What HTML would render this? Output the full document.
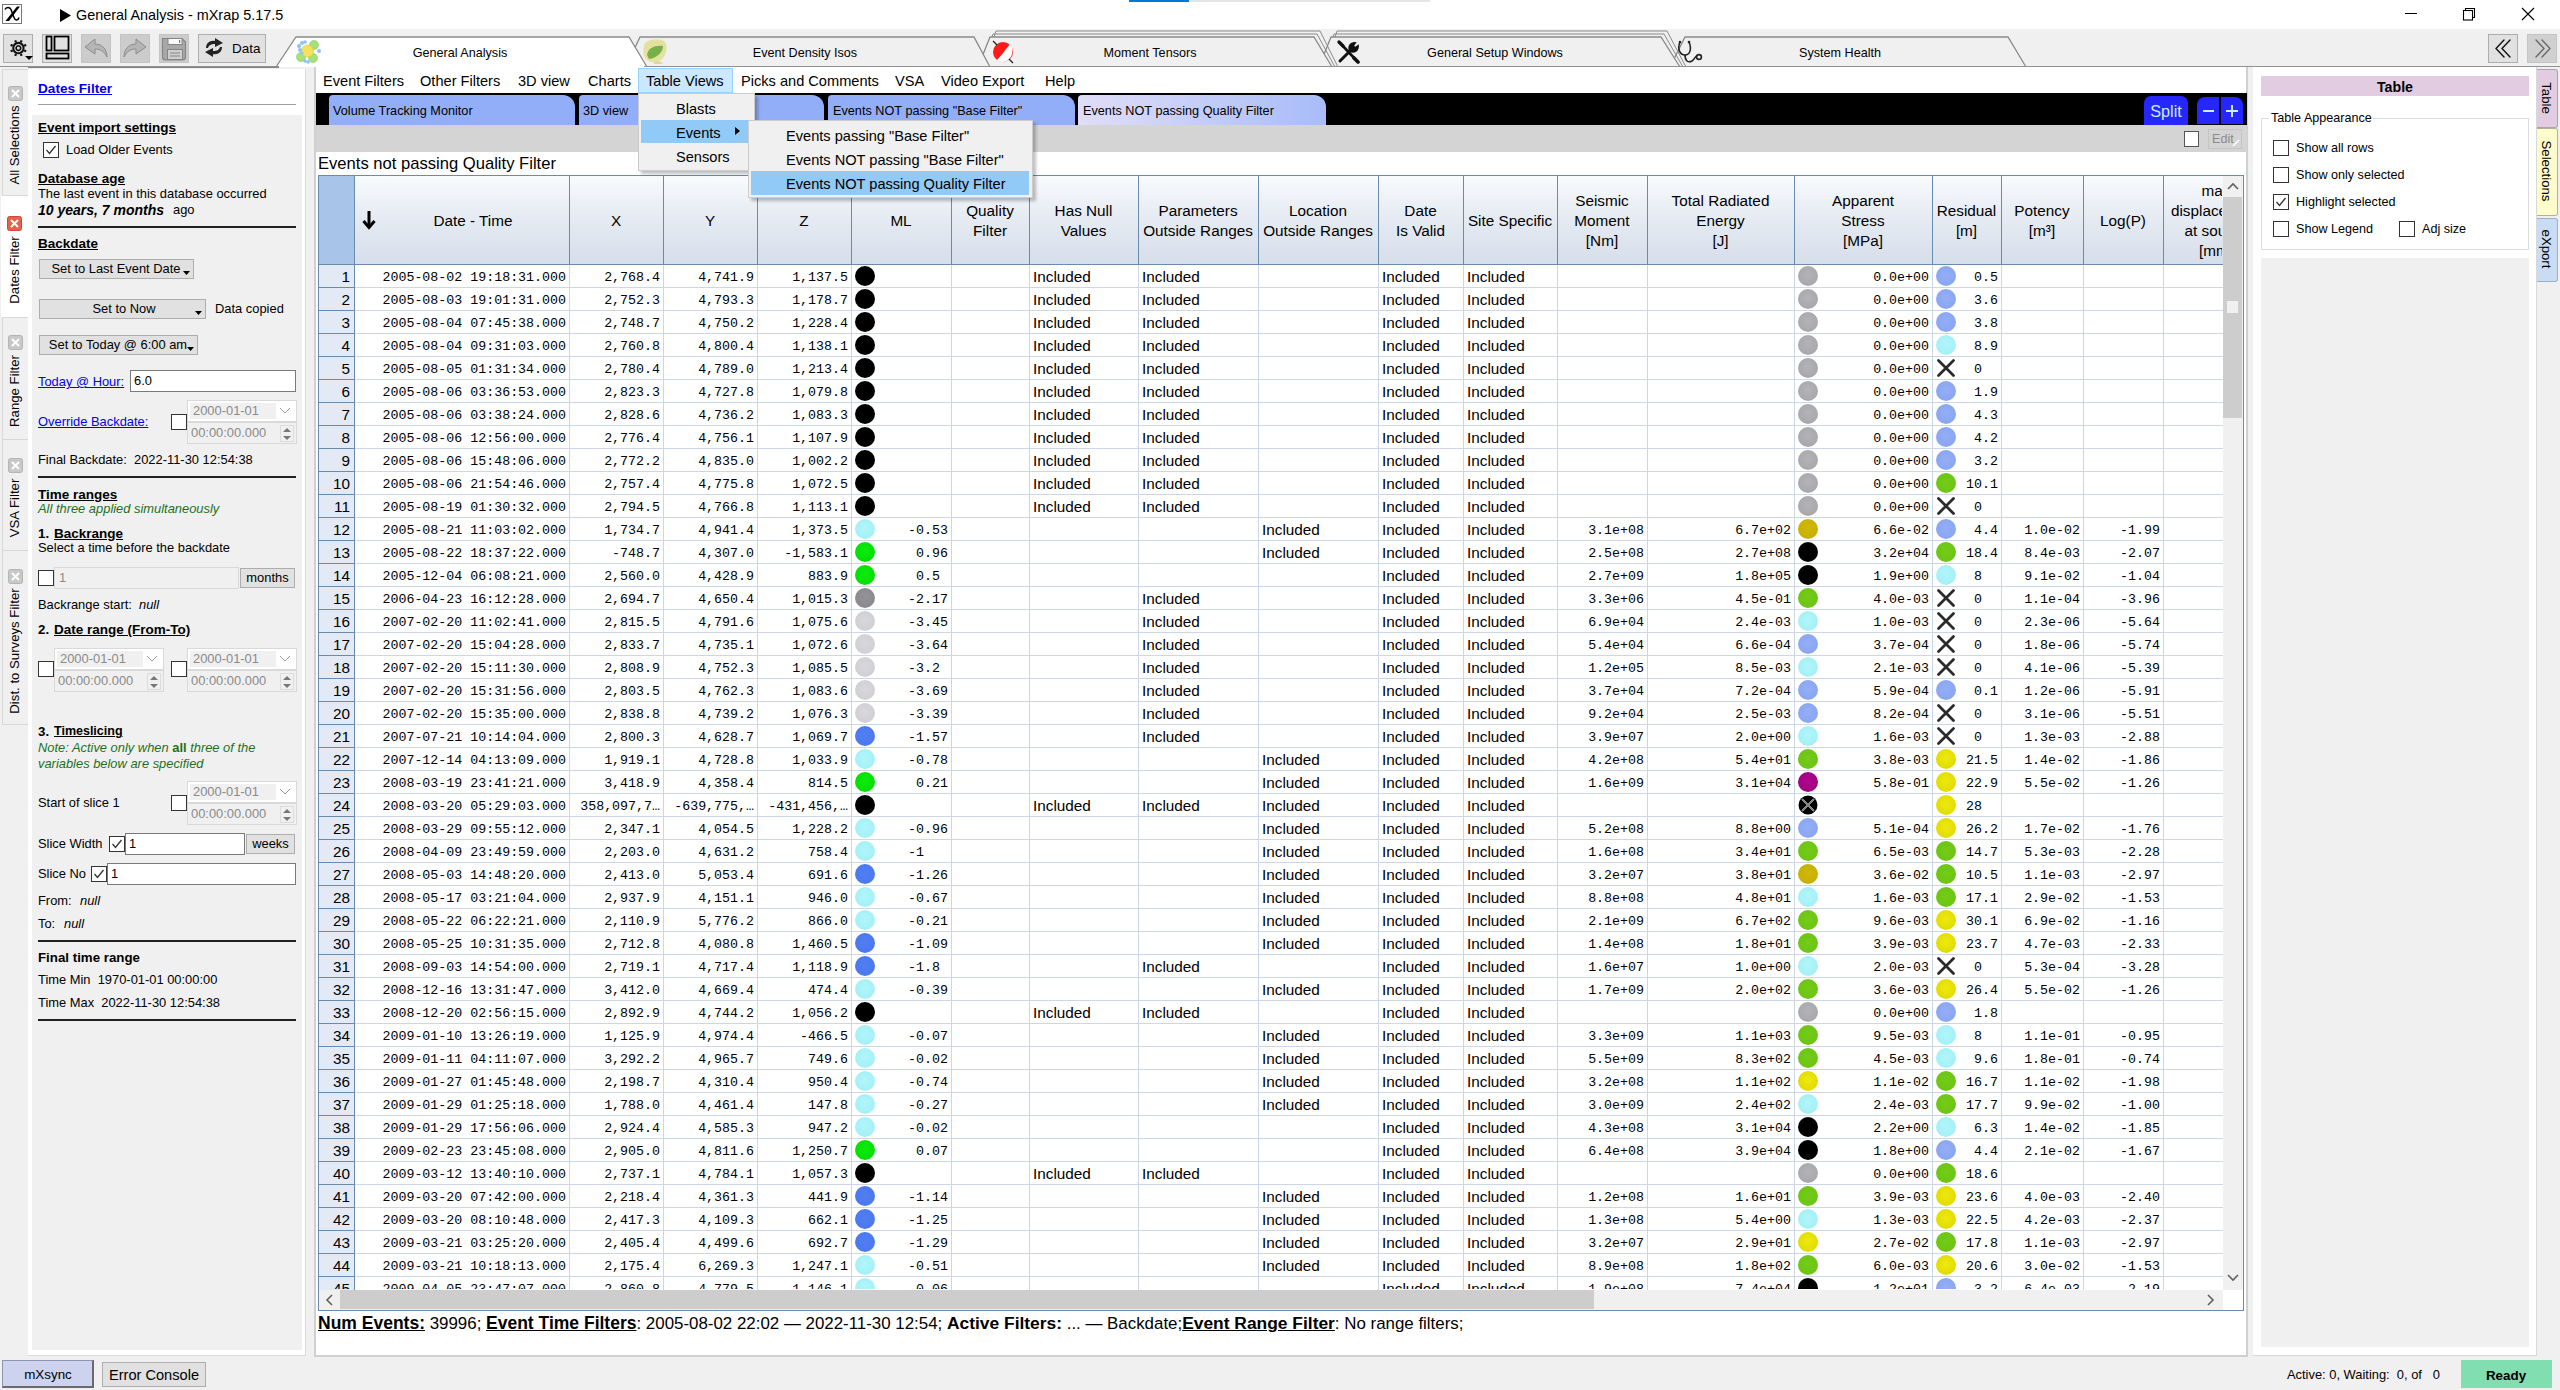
<!DOCTYPE html><html><head><meta charset="utf-8"><style>html,body{margin:0;padding:0}body{width:2560px;height:1390px;overflow:hidden;position:relative;background:#f0f0f0;font-family:"Liberation Sans",sans-serif;color:#000}body div,body svg{position:absolute}</style></head><body>
<div style="left:0px;top:0px;width:2560px;height:29px;background:#fff"></div>
<div style="left:1129px;top:0px;width:60px;height:2px;background:#0078d7"></div>
<div style="left:1189px;top:0px;width:241px;height:2px;background:#e6e6e6"></div>
<svg style="left:2px;top:4px" width="21" height="20"><rect x="0.5" y="0.5" width="19" height="19" fill="#fff" stroke="#777"/>
<path d="M15 2.5 L18 2.5 L7 17 L3.5 17Z" fill="#000"/><path d="M3 5.5 C4 3 7.5 2.5 9 5.5 L12 13.5 C13 16.5 16 17 17 13.5" stroke="#000" stroke-width="1.5" fill="none"/></svg>
<svg style="left:60px;top:9px" width="12" height="13"><path d="M0 0 L11 6.5 L0 13Z" fill="#000"/></svg>
<div style="left:76px;top:7.81px;font-size:14.4px;line-height:14.4px;font-family:'Liberation Sans', sans-serif;white-space:pre;color:#000">General Analysis - mXrap 5.17.5</div>
<div style="left:2405px;top:13px;width:12px;height:1px;background:#000"></div>
<svg style="left:2460px;top:6px" width="18" height="16"><rect x="3.5" y="4.5" width="9" height="9.5" fill="none" stroke="#000" stroke-width="1.1"/><path d="M5.5 4.5 V2.5 H14.5 V11.5 H12.5" fill="none" stroke="#000" stroke-width="1.1"/></svg>
<svg style="left:2520px;top:7px" width="16" height="16"><path d="M2 1 L14 13 M14 1 L2 13" stroke="#000" stroke-width="1.1"/></svg>
<div style="left:0px;top:29px;width:2560px;height:38px;background:#f0f0f0"></div>
<div style="left:3px;top:34px;width:30px;height:29px;background:#e1e1e1;border:1px solid #adadad;box-sizing:border-box"></div>
<div style="left:42px;top:34px;width:30px;height:29px;background:#e1e1e1;border:1px solid #adadad;box-sizing:border-box"></div>
<div style="left:81px;top:34px;width:30px;height:29px;background:#cccccc;border:1px solid #c4c4c4;box-sizing:border-box"></div>
<div style="left:120px;top:34px;width:30px;height:29px;background:#cccccc;border:1px solid #c4c4c4;box-sizing:border-box"></div>
<div style="left:159px;top:34px;width:30px;height:29px;background:#cccccc;border:1px solid #c4c4c4;box-sizing:border-box"></div>
<div style="left:198px;top:34px;width:68px;height:29px;background:#e1e1e1;border:1px solid #adadad;box-sizing:border-box"></div>
<svg style="left:3px;top:34px" width="30" height="28">
<g transform="translate(15.4,14.1) rotate(22.5)" stroke="#111" fill="none">
<circle r="5.2" stroke-width="2.1"/><circle r="2.3" stroke-width="1.7"/>
<path d="M6.20 0.00 L8.40 0.00 M4.38 4.38 L5.94 5.94 M0.00 6.20 L0.00 8.40 M-4.38 4.38 L-5.94 5.94 M-6.20 0.00 L-8.40 0.00 M-4.38 -4.38 L-5.94 -5.94 M-0.00 -6.20 L-0.00 -8.40 M4.38 -4.38 L5.94 -5.94" stroke-width="2.2"/>
</g><path d="M22 22 L30 22 L26 26Z" fill="#000"/></svg>
<svg style="left:42px;top:34px" width="30" height="28"><g fill="#e0e0e0" stroke="#000" stroke-width="1.8">
<rect x="4.5" y="2.5" width="5" height="14"/><rect x="12.5" y="2.5" width="14" height="14"/><rect x="4.5" y="19.5" width="22" height="5"/></g></svg>
<svg style="left:81px;top:34px" width="30" height="28"><path d="M4 13 L14 5 L14 10 C22 10 26 16 26 23 C23 17 19 15 14 15 L14 20 Z" fill="#b5b5b5" stroke="#8c8c8c" stroke-width="1"/></svg>
<svg style="left:120px;top:34px" width="30" height="28"><path d="M26 13 L16 5 L16 10 C8 10 4 16 4 23 C7 17 11 15 16 15 L16 20 Z" fill="#b5b5b5" stroke="#8c8c8c" stroke-width="1"/></svg>
<svg style="left:159px;top:34px" width="30" height="28"><path d="M3.5 4.5 H23 L26.5 8 V23 Q26.5 26 23.5 26 H6.5 Q3.5 26 3.5 23Z" fill="#a8a8a8" stroke="#858585" stroke-width="1.2"/>
<rect x="9" y="4.5" width="14" height="6" fill="#f8f8f8" stroke="#858585"/><rect x="20" y="6" width="1.2" height="3" fill="#777"/><rect x="8.5" y="15.5" width="15" height="10" fill="#cfcfcf" stroke="#858585"/><path d="M11 19 H21 M11 22 H21" stroke="#858585" stroke-width="1.2"/></svg>
<svg style="left:200px;top:35px" width="28" height="26"><g fill="#222">
<path d="M6 13 C6 8 10 5 15 6 L15 3 L23 8 L15 12 L15 9 C11 9 9 10 8 13 Z"/>
<path d="M22 12 C22 17 18 20 13 19 L13 22 L5 17 L13 13 L13 16 C17 16 19 15 20 12 Z"/></g></svg>
<div style="left:232px;top:41.57px;font-size:13.5px;line-height:13.5px;font-family:'Liberation Sans', sans-serif;white-space:pre;color:#000">Data</div>
<div style="left:2488px;top:34px;width:30px;height:29px;background:#e1e1e1;border:1px solid #adadad;box-sizing:border-box"></div>
<div style="left:2527px;top:34px;width:30px;height:29px;background:#d0d0d0;border:1px solid #c4c4c4;box-sizing:border-box"></div>
<svg style="left:2488px;top:34px" width="30" height="29"><path d="M16 6 L8 14.5 L16 23 M22 6 L14 14.5 L22 23" stroke="#111" stroke-width="1.4" fill="none" stroke-linecap="round"/></svg>
<svg style="left:2527px;top:34px" width="30" height="29"><path d="M9 6 L17 14.5 L9 23 M15 6 L23 14.5 L15 23" stroke="#6a6a6a" stroke-width="1.4" fill="none" stroke-linecap="round"/></svg>
<svg style="left:0px;top:29px" width="2560" height="40"><path d="M1670 38 L1685 8 L2008 8 L2026 38" fill="#f0f0f0" stroke="#8a8a8a" stroke-width="1.3"/><path d="M1325 38 L1337 2 L1667 2 L1686 38" fill="none" stroke="#8a8a8a" stroke-width="1"/><path d="M1322 38 L1334 5 L1664 5 L1683 38" fill="none" stroke="#8a8a8a" stroke-width="1"/><path d="M1319 38 L1331 8 L1661 8 L1680 38" fill="#f0f0f0" stroke="#8a8a8a" stroke-width="1.3"/><path d="M984 38 L996 2 L1320 2 L1338 38" fill="none" stroke="#8a8a8a" stroke-width="1"/><path d="M981 38 L993 5 L1317 5 L1335 38" fill="none" stroke="#8a8a8a" stroke-width="1"/><path d="M978 38 L990 8 L1314 8 L1332 38" fill="#f0f0f0" stroke="#8a8a8a" stroke-width="1.3"/><path d="M626 38 L640 8 L974 8 L990 38" fill="#f0f0f0" stroke="#8a8a8a" stroke-width="1.3"/><path d="M276 38 L296 8 L629 8 L647 38" fill="#ffffff" stroke="#8a8a8a" stroke-width="1.3"/></svg>
<div style="left:0px;top:66px;width:279px;height:2px;background:linear-gradient(#9a9a9a,#7a7a7a)"></div>
<div style="left:644px;top:66px;width:1916px;height:2px;background:linear-gradient(#9a9a9a,#7a7a7a)"></div>
<div style="left:60px;width:800px;text-align:center;top:47.33px;font-size:12.6px;line-height:12.6px;font-family:'Liberation Sans', sans-serif;white-space:pre;color:#000">General Analysis</div>
<div style="left:405px;width:800px;text-align:center;top:47.33px;font-size:12.6px;line-height:12.6px;font-family:'Liberation Sans', sans-serif;white-space:pre;color:#000">Event Density Isos</div>
<div style="left:750px;width:800px;text-align:center;top:47.33px;font-size:12.6px;line-height:12.6px;font-family:'Liberation Sans', sans-serif;white-space:pre;color:#000">Moment Tensors</div>
<div style="left:1095px;width:800px;text-align:center;top:47.33px;font-size:12.6px;line-height:12.6px;font-family:'Liberation Sans', sans-serif;white-space:pre;color:#000">General Setup Windows</div>
<div style="left:1440px;width:800px;text-align:center;top:47.33px;font-size:12.6px;line-height:12.6px;font-family:'Liberation Sans', sans-serif;white-space:pre;color:#000">System Health</div>
<svg style="left:296px;top:39px" width="26" height="26">
<circle cx="18" cy="6" r="4.5" fill="#a6e07a" stroke="#8cc860" stroke-width="0.6"/><circle cx="5" cy="18" r="4.5" fill="#a6e07a" stroke="#8cc860" stroke-width="0.6"/><circle cx="17" cy="19" r="4.5" fill="#a6e07a" stroke="#8cc860" stroke-width="0.6"/>
<circle cx="11.5" cy="12" r="6" fill="#f3e35a" stroke="#d8c840" stroke-width="0.6"/>
<g fill="#88c4f4"><circle cx="3" cy="7" r="2"/><circle cx="6" cy="4" r="2"/><circle cx="9" cy="3" r="1.8"/><circle cx="4" cy="11" r="2"/><circle cx="23" cy="12" r="2"/><circle cx="9" cy="22" r="1.8"/><circle cx="12" cy="23" r="1.8"/><circle cx="6" cy="14" r="1.5"/></g></svg>
<svg style="left:642px;top:38px" width="26" height="28"><path d="M2 8 C2 2 14 0 22 3 C26 6 25 14 22 19 C18 24 10 26 5 22 C1 19 1 13 2 8Z" fill="#e4e0a0"/>
<path d="M5 17 C6 10 13 7 21 8 C21 14 15 20 7 21Z" fill="#78b048"/><path d="M12 24 C15 22 19 23 21 26 L12 26Z" fill="#dcd8a0"/></svg>
<svg style="left:990px;top:39px" width="26" height="26"><circle cx="13" cy="13" r="10" fill="#ff1a1a"/><path d="M7 21 C13 15 15 11 20 5 C24 10 23 18 17 22 C13 24 10 23 7 21Z" fill="#fff"/>
<path d="M3 2 L7 6 M19 20 L23 24" stroke="#222" stroke-width="1.3"/></svg>
<svg style="left:1336px;top:40px" width="26" height="24"><g stroke="#111" fill="none" stroke-linecap="round">
<path d="M4 21 L15 10" stroke-width="3"/><path d="M14 11 C12 7 14 3 19 3 L17 6 L19 8 L22 6 C22 11 18 13 14 11" stroke-width="1.8" fill="#111"/>
<path d="M5 4 L20 20" stroke-width="2.6"/><path d="M3 2 L7 6" stroke-width="3.2"/><path d="M18 18 L22 22" stroke-width="3.6"/></g></svg>
<svg style="left:1676px;top:39px" width="28" height="26"><g stroke="#222" stroke-width="1.6" fill="none">
<path d="M4 3 C1 10 4 16 9 16 C14 16 16 10 13 3"/><path d="M9 16 C9 22 12 24 16 22 C19 20 19 17 21 17"/><circle cx="23" cy="18" r="2.4"/></g>
<circle cx="4" cy="3" r="1.3" fill="#222"/><circle cx="13" cy="3" r="1.3" fill="#222"/></svg>
<div style="left:0px;top:67px;width:28px;height:1300px;background:#f0f0f0"></div>
<div style="left:2px;top:69px;width:26px;height:127px;background:#f0f0f0;border:1px solid #d8d8d8;border-right:none;box-sizing:border-box"></div>
<div style="left:1px;top:196px;width:28px;height:121px;background:#fff"></div>
<div style="left:2px;top:317px;width:26px;height:408px;background:#f0f0f0;border:1px solid #d8d8d8;border-right:none;box-sizing:border-box"></div>
<div style="left:2px;top:439px;width:26px;height:1px;background:#d8d8d8"></div>
<div style="left:2px;top:550px;width:26px;height:1px;background:#d8d8d8"></div>
<svg style="left:8px;top:86px" width="15" height="15"><rect x="0.5" y="0.5" width="14" height="14" rx="2" fill="#c8c8c8" stroke="#b4b4b4"/><path d="M4 4 L11 11 M11 4 L4 11" stroke="#fff" stroke-width="2"/></svg>
<div style="left:-135px;top:135px;width:300px;height:20px;line-height:20px;text-align:center;font-family:'Liberation Sans', sans-serif;font-size:13.2px;color:#000;white-space:pre;transform:rotate(-90deg)">All Selections</div>
<svg style="left:7px;top:216px" width="15" height="15"><rect x="0.5" y="0.5" width="14" height="14" rx="2" fill="#e8604a" stroke="#c84a3a"/><path d="M4 4 L11 11 M11 4 L4 11" stroke="#fff" stroke-width="2"/></svg>
<div style="left:-135px;top:260px;width:300px;height:20px;line-height:20px;text-align:center;font-family:'Liberation Sans', sans-serif;font-size:13.2px;color:#000;white-space:pre;transform:rotate(-90deg)">Dates Filter</div>
<svg style="left:8px;top:335px" width="15" height="15"><rect x="0.5" y="0.5" width="14" height="14" rx="2" fill="#c8c8c8" stroke="#b4b4b4"/><path d="M4 4 L11 11 M11 4 L4 11" stroke="#fff" stroke-width="2"/></svg>
<div style="left:-135px;top:381px;width:300px;height:20px;line-height:20px;text-align:center;font-family:'Liberation Sans', sans-serif;font-size:13.2px;color:#000;white-space:pre;transform:rotate(-90deg)">Range Filter</div>
<svg style="left:8px;top:458px" width="15" height="15"><rect x="0.5" y="0.5" width="14" height="14" rx="2" fill="#c8c8c8" stroke="#b4b4b4"/><path d="M4 4 L11 11 M11 4 L4 11" stroke="#fff" stroke-width="2"/></svg>
<div style="left:-135px;top:498px;width:300px;height:20px;line-height:20px;text-align:center;font-family:'Liberation Sans', sans-serif;font-size:13.2px;color:#000;white-space:pre;transform:rotate(-90deg)">VSA Filter</div>
<svg style="left:8px;top:569px" width="15" height="15"><rect x="0.5" y="0.5" width="14" height="14" rx="2" fill="#c8c8c8" stroke="#b4b4b4"/><path d="M4 4 L11 11 M11 4 L4 11" stroke="#fff" stroke-width="2"/></svg>
<div style="left:-135px;top:641px;width:300px;height:20px;line-height:20px;text-align:center;font-family:'Liberation Sans', sans-serif;font-size:13.2px;color:#000;white-space:pre;transform:rotate(-90deg)">Dist. to Surveys Filter</div>
<div style="left:28px;top:69px;width:278px;height:1287px;background:#fff;border-right:1px solid #dadada;border-bottom:1px solid #dadada;box-sizing:border-box"></div>
<div style="left:32px;top:115px;width:270px;height:1235px;background:#f0f0f0"></div>
<div style="left:38px;top:82.49px;font-size:13.6px;line-height:13.6px;font-family:'Liberation Sans', sans-serif;white-space:pre;color:#0000ee;text-decoration:underline;font-weight:bold;">Dates Filter</div>
<div style="left:38px;top:104px;width:258px;height:1px;background:#a0a0a0"></div>
<div style="left:38px;top:120.57px;font-size:13.5px;line-height:13.5px;font-family:'Liberation Sans', sans-serif;white-space:pre;color:#000;font-weight:bold;text-decoration:underline">Event import settings</div>
<svg style="left:43px;top:142px" width="16" height="16"><rect x="0.5" y="0.5" width="15" height="15" fill="#fff" stroke="#333"/><path d="M3.5 8 L6.5 11.5 L12.5 4" stroke="#333" stroke-width="1.3" fill="none"/></svg>
<div style="left:66px;top:144.08px;font-size:12.9px;line-height:12.9px;font-family:'Liberation Sans', sans-serif;white-space:pre;">Load Older Events</div>
<div style="left:38px;top:171.57px;font-size:13.5px;line-height:13.5px;font-family:'Liberation Sans', sans-serif;white-space:pre;color:#000;font-weight:bold;text-decoration:underline">Database age</div>
<div style="left:38px;top:188.08px;font-size:12.9px;line-height:12.9px;font-family:'Liberation Sans', sans-serif;white-space:pre;">The last event in this database occurred</div>
<div style="left:38px;top:203.15px;font-size:14px;line-height:14px;font-family:'Liberation Sans', sans-serif;white-space:pre;font-weight:bold;font-style:italic">10 years, 7 months</div>
<div style="left:173px;top:204.08px;font-size:12.9px;line-height:12.9px;font-family:'Liberation Sans', sans-serif;white-space:pre;">ago</div>
<div style="left:38px;top:226px;width:258px;height:2px;background:#202020"></div>
<div style="left:38px;top:236.57px;font-size:13.5px;line-height:13.5px;font-family:'Liberation Sans', sans-serif;white-space:pre;color:#000;font-weight:bold;text-decoration:underline">Backdate</div>
<div style="left:39px;top:259px;width:155px;height:20px;background:#e1e1e1;border:1px solid #adadad;box-sizing:border-box"></div>
<div style="left:-284px;width:800px;text-align:center;top:262.72px;font-size:12.9px;line-height:12.9px;font-family:'Liberation Sans', sans-serif;white-space:pre;color:#000">Set to Last Event Date</div>
<svg style="left:182px;top:270px" width="9" height="6"><path d="M1 1 L8 1 L4.5 5Z" fill="#000"/></svg>
<div style="left:39px;top:299px;width:167px;height:20px;background:#e1e1e1;border:1px solid #adadad;box-sizing:border-box"></div>
<div style="left:-276px;width:800px;text-align:center;top:302.72px;font-size:12.9px;line-height:12.9px;font-family:'Liberation Sans', sans-serif;white-space:pre;color:#000">Set to Now</div>
<svg style="left:194px;top:310px" width="9" height="6"><path d="M1 1 L8 1 L4.5 5Z" fill="#000"/></svg>
<div style="left:215px;top:303.08px;font-size:12.9px;line-height:12.9px;font-family:'Liberation Sans', sans-serif;white-space:pre;">Data copied</div>
<div style="left:39px;top:335px;width:159px;height:20px;background:#e1e1e1;border:1px solid #adadad;box-sizing:border-box"></div>
<div style="left:-282px;width:800px;text-align:center;top:338.72px;font-size:12.9px;line-height:12.9px;font-family:'Liberation Sans', sans-serif;white-space:pre;color:#000">Set to Today @ 6:00 am</div>
<svg style="left:186px;top:346px" width="9" height="6"><path d="M1 1 L8 1 L4.5 5Z" fill="#000"/></svg>
<div style="left:38px;top:376.08px;font-size:12.9px;line-height:12.9px;font-family:'Liberation Sans', sans-serif;white-space:pre;color:#0000ee;text-decoration:underline;">Today @ Hour:</div>
<div style="left:130px;top:370px;width:166px;height:22px;background:#fff;border:1px solid #7a7a7a;box-sizing:border-box"></div>
<div style="left:134px;top:375.08px;font-size:12.9px;line-height:12.9px;font-family:'Liberation Sans', sans-serif;white-space:pre;">6.0</div>
<div style="left:38px;top:416.08px;font-size:12.9px;line-height:12.9px;font-family:'Liberation Sans', sans-serif;white-space:pre;color:#0000ee;text-decoration:underline;">Override Backdate:</div>
<svg style="left:171px;top:414px" width="16" height="16"><rect x="0.5" y="0.5" width="15" height="15" fill="#fff" stroke="#333"/></svg>
<div style="left:187px;top:400px;width:110px;height:22px;background:#fff;border:1px solid #d9d9d9;box-sizing:border-box"></div>
<div style="left:190px;top:403px;width:86px;height:16px;background:#f0f0f0"></div>
<div style="left:193px;top:405.08px;font-size:12.9px;line-height:12.9px;font-family:'Liberation Sans', sans-serif;white-space:pre;color:#8a8a8a">2000-01-01</div>
<svg style="left:279px;top:407px" width="12" height="8"><path d="M1 1 L6 6 L11 1" stroke="#9a9a9a" fill="none"/></svg>
<div style="left:187px;top:422px;width:110px;height:22px;background:#f0f0f0;border:1px solid #d9d9d9;box-sizing:border-box"></div>
<div style="left:191px;top:427.08px;font-size:12.9px;line-height:12.9px;font-family:'Liberation Sans', sans-serif;white-space:pre;color:#8a8a8a">00:00:00.000</div>
<div style="left:280px;top:425px;width:14px;height:17px;background:#f0f0f0;border:1px solid #dcdcdc;box-sizing:border-box"></div>
<svg style="left:281px;top:426px" width="12" height="16"><path d="M2 6 L6 2 L10 6Z M2 10 L6 14 L10 10Z" fill="#777"/></svg>
<div style="left:38px;top:454.08px;font-size:12.9px;line-height:12.9px;font-family:'Liberation Sans', sans-serif;white-space:pre;">Final Backdate:  2022-11-30 12:54:38</div>
<div style="left:38px;top:476px;width:258px;height:2px;background:#202020"></div>
<div style="left:38px;top:487.57px;font-size:13.5px;line-height:13.5px;font-family:'Liberation Sans', sans-serif;white-space:pre;color:#000;font-weight:bold;text-decoration:underline">Time ranges</div>
<div style="left:38px;top:503.08px;font-size:12.9px;line-height:12.9px;font-family:'Liberation Sans', sans-serif;white-space:pre;font-style:italic;color:#1c701c">All three applied simultaneously</div>
<div style="left:38px;top:526.74px;font-size:13.3px;line-height:13.3px;font-family:'Liberation Sans', sans-serif;white-space:pre;font-weight:bold">1. </div>
<div style="left:54px;top:526.57px;font-size:13.5px;line-height:13.5px;font-family:'Liberation Sans', sans-serif;white-space:pre;color:#000;font-weight:bold;text-decoration:underline">Backrange</div>
<div style="left:38px;top:542.08px;font-size:12.9px;line-height:12.9px;font-family:'Liberation Sans', sans-serif;white-space:pre;">Select a time before the backdate</div>
<svg style="left:38px;top:570px" width="16" height="16"><rect x="0.5" y="0.5" width="15" height="15" fill="#fff" stroke="#333"/></svg>
<div style="left:54px;top:567px;width:185px;height:22px;background:#f0f0f0;border:1px solid #d9d9d9;box-sizing:border-box"></div>
<div style="left:59px;top:572.08px;font-size:12.9px;line-height:12.9px;font-family:'Liberation Sans', sans-serif;white-space:pre;color:#8a8a8a">1</div>
<div style="left:240px;top:568px;width:55px;height:20px;background:#e1e1e1;border:1px solid #adadad;box-sizing:border-box"></div>
<div style="left:-132.5px;width:800px;text-align:center;top:571.72px;font-size:12.9px;line-height:12.9px;font-family:'Liberation Sans', sans-serif;white-space:pre;color:#000">months</div>
<div style="left:38px;top:599.08px;font-size:12.9px;line-height:12.9px;font-family:'Liberation Sans', sans-serif;white-space:pre;">Backrange start:  </div>
<div style="left:139px;top:599.08px;font-size:12.9px;line-height:12.9px;font-family:'Liberation Sans', sans-serif;white-space:pre;font-style:italic">null</div>
<div style="left:38px;top:622.74px;font-size:13.3px;line-height:13.3px;font-family:'Liberation Sans', sans-serif;white-space:pre;font-weight:bold">2. </div>
<div style="left:54px;top:622.57px;font-size:13.5px;line-height:13.5px;font-family:'Liberation Sans', sans-serif;white-space:pre;color:#000;font-weight:bold;text-decoration:underline">Date range (From-To)</div>
<svg style="left:38px;top:661px" width="16" height="16"><rect x="0.5" y="0.5" width="15" height="15" fill="#fff" stroke="#333"/></svg>
<div style="left:54px;top:648px;width:110px;height:22px;background:#fff;border:1px solid #d9d9d9;box-sizing:border-box"></div>
<div style="left:57px;top:651px;width:86px;height:16px;background:#f0f0f0"></div>
<div style="left:60px;top:653.08px;font-size:12.9px;line-height:12.9px;font-family:'Liberation Sans', sans-serif;white-space:pre;color:#8a8a8a">2000-01-01</div>
<svg style="left:146px;top:655px" width="12" height="8"><path d="M1 1 L6 6 L11 1" stroke="#9a9a9a" fill="none"/></svg>
<div style="left:54px;top:670px;width:110px;height:22px;background:#f0f0f0;border:1px solid #d9d9d9;box-sizing:border-box"></div>
<div style="left:58px;top:675.08px;font-size:12.9px;line-height:12.9px;font-family:'Liberation Sans', sans-serif;white-space:pre;color:#8a8a8a">00:00:00.000</div>
<div style="left:147px;top:673px;width:14px;height:17px;background:#f0f0f0;border:1px solid #dcdcdc;box-sizing:border-box"></div>
<svg style="left:148px;top:674px" width="12" height="16"><path d="M2 6 L6 2 L10 6Z M2 10 L6 14 L10 10Z" fill="#777"/></svg>
<svg style="left:171px;top:661px" width="16" height="16"><rect x="0.5" y="0.5" width="15" height="15" fill="#fff" stroke="#333"/></svg>
<div style="left:187px;top:648px;width:110px;height:22px;background:#fff;border:1px solid #d9d9d9;box-sizing:border-box"></div>
<div style="left:190px;top:651px;width:86px;height:16px;background:#f0f0f0"></div>
<div style="left:193px;top:653.08px;font-size:12.9px;line-height:12.9px;font-family:'Liberation Sans', sans-serif;white-space:pre;color:#8a8a8a">2000-01-01</div>
<svg style="left:279px;top:655px" width="12" height="8"><path d="M1 1 L6 6 L11 1" stroke="#9a9a9a" fill="none"/></svg>
<div style="left:187px;top:670px;width:110px;height:22px;background:#f0f0f0;border:1px solid #d9d9d9;box-sizing:border-box"></div>
<div style="left:191px;top:675.08px;font-size:12.9px;line-height:12.9px;font-family:'Liberation Sans', sans-serif;white-space:pre;color:#8a8a8a">00:00:00.000</div>
<div style="left:280px;top:673px;width:14px;height:17px;background:#f0f0f0;border:1px solid #dcdcdc;box-sizing:border-box"></div>
<svg style="left:281px;top:674px" width="12" height="16"><path d="M2 6 L6 2 L10 6Z M2 10 L6 14 L10 10Z" fill="#777"/></svg>
<div style="left:38px;top:724.74px;font-size:13.3px;line-height:13.3px;font-family:'Liberation Sans', sans-serif;white-space:pre;font-weight:bold">3. </div>
<div style="left:54px;top:725.42px;font-size:12.5px;line-height:12.5px;font-family:'Liberation Sans', sans-serif;white-space:pre;color:#000;font-weight:bold;text-decoration:underline">Timeslicing</div>
<div style="left:38px;top:740px;width:260px;font-family:'Liberation Sans', sans-serif;font-size:12.9px;line-height:16px;color:#1c701c;font-style:italic">Note: Active only when <b style="font-style:normal">all</b> three of the<br>variables below are specified</div>
<div style="left:38px;top:797.08px;font-size:12.9px;line-height:12.9px;font-family:'Liberation Sans', sans-serif;white-space:pre;">Start of slice 1</div>
<svg style="left:171px;top:795px" width="16" height="16"><rect x="0.5" y="0.5" width="15" height="15" fill="#fff" stroke="#333"/></svg>
<div style="left:187px;top:781px;width:110px;height:22px;background:#fff;border:1px solid #d9d9d9;box-sizing:border-box"></div>
<div style="left:190px;top:784px;width:86px;height:16px;background:#f0f0f0"></div>
<div style="left:193px;top:786.08px;font-size:12.9px;line-height:12.9px;font-family:'Liberation Sans', sans-serif;white-space:pre;color:#8a8a8a">2000-01-01</div>
<svg style="left:279px;top:788px" width="12" height="8"><path d="M1 1 L6 6 L11 1" stroke="#9a9a9a" fill="none"/></svg>
<div style="left:187px;top:803px;width:110px;height:22px;background:#f0f0f0;border:1px solid #d9d9d9;box-sizing:border-box"></div>
<div style="left:191px;top:808.08px;font-size:12.9px;line-height:12.9px;font-family:'Liberation Sans', sans-serif;white-space:pre;color:#8a8a8a">00:00:00.000</div>
<div style="left:280px;top:806px;width:14px;height:17px;background:#f0f0f0;border:1px solid #dcdcdc;box-sizing:border-box"></div>
<svg style="left:281px;top:807px" width="12" height="16"><path d="M2 6 L6 2 L10 6Z M2 10 L6 14 L10 10Z" fill="#777"/></svg>
<div style="left:38px;top:838.08px;font-size:12.9px;line-height:12.9px;font-family:'Liberation Sans', sans-serif;white-space:pre;">Slice Width</div>
<svg style="left:109px;top:836px" width="16" height="16"><rect x="0.5" y="0.5" width="15" height="15" fill="#fff" stroke="#333"/><path d="M3.5 8 L6.5 11.5 L12.5 4" stroke="#333" stroke-width="1.3" fill="none"/></svg>
<div style="left:125px;top:833px;width:120px;height:22px;background:#fff;border:1px solid #7a7a7a;box-sizing:border-box"></div>
<div style="left:129px;top:838.08px;font-size:12.9px;line-height:12.9px;font-family:'Liberation Sans', sans-serif;white-space:pre;">1</div>
<div style="left:246px;top:834px;width:49px;height:20px;background:#e1e1e1;border:1px solid #adadad;box-sizing:border-box"></div>
<div style="left:-129.5px;width:800px;text-align:center;top:837.72px;font-size:12.9px;line-height:12.9px;font-family:'Liberation Sans', sans-serif;white-space:pre;color:#000">weeks</div>
<div style="left:38px;top:868.08px;font-size:12.9px;line-height:12.9px;font-family:'Liberation Sans', sans-serif;white-space:pre;">Slice No</div>
<svg style="left:91px;top:866px" width="16" height="16"><rect x="0.5" y="0.5" width="15" height="15" fill="#fff" stroke="#333"/><path d="M3.5 8 L6.5 11.5 L12.5 4" stroke="#333" stroke-width="1.3" fill="none"/></svg>
<div style="left:107px;top:863px;width:189px;height:22px;background:#fff;border:1px solid #7a7a7a;box-sizing:border-box"></div>
<div style="left:111px;top:868.08px;font-size:12.9px;line-height:12.9px;font-family:'Liberation Sans', sans-serif;white-space:pre;">1</div>
<div style="left:38px;top:895.08px;font-size:12.9px;line-height:12.9px;font-family:'Liberation Sans', sans-serif;white-space:pre;">From:  </div>
<div style="left:80px;top:895.08px;font-size:12.9px;line-height:12.9px;font-family:'Liberation Sans', sans-serif;white-space:pre;font-style:italic">null</div>
<div style="left:38px;top:918.08px;font-size:12.9px;line-height:12.9px;font-family:'Liberation Sans', sans-serif;white-space:pre;">To:  </div>
<div style="left:64px;top:918.08px;font-size:12.9px;line-height:12.9px;font-family:'Liberation Sans', sans-serif;white-space:pre;font-style:italic">null</div>
<div style="left:38px;top:940px;width:258px;height:2px;background:#202020"></div>
<div style="left:38px;top:950.74px;font-size:13.3px;line-height:13.3px;font-family:'Liberation Sans', sans-serif;white-space:pre;font-weight:bold">Final time range</div>
<div style="left:38px;top:974.08px;font-size:12.9px;line-height:12.9px;font-family:'Liberation Sans', sans-serif;white-space:pre;">Time Min  1970-01-01 00:00:00</div>
<div style="left:38px;top:997.08px;font-size:12.9px;line-height:12.9px;font-family:'Liberation Sans', sans-serif;white-space:pre;">Time Max  2022-11-30 12:54:38</div>
<div style="left:38px;top:1019px;width:258px;height:2px;background:#202020"></div>
<div style="left:314px;top:67px;width:1934px;height:1290px;background:#fff;border-left:2px solid #d0d0d0;border-right:2px solid #d0d0d0;border-bottom:2px solid #d0d0d0;box-sizing:border-box"></div>
<div style="left:306px;top:67px;width:8px;height:1290px;background:#f0f0f0"></div>
<div style="left:638px;top:68px;width:95px;height:25px;background:#cce8ff;border:1px solid #99d1ff;box-sizing:border-box"></div>
<div style="left:323px;top:73.64px;font-size:14.6px;line-height:14.6px;font-family:'Liberation Sans', sans-serif;white-space:pre;">Event Filters</div>
<div style="left:420px;top:73.64px;font-size:14.6px;line-height:14.6px;font-family:'Liberation Sans', sans-serif;white-space:pre;">Other Filters</div>
<div style="left:518px;top:73.64px;font-size:14.6px;line-height:14.6px;font-family:'Liberation Sans', sans-serif;white-space:pre;">3D view</div>
<div style="left:588px;top:73.64px;font-size:14.6px;line-height:14.6px;font-family:'Liberation Sans', sans-serif;white-space:pre;">Charts</div>
<div style="left:646px;top:73.64px;font-size:14.6px;line-height:14.6px;font-family:'Liberation Sans', sans-serif;white-space:pre;">Table Views</div>
<div style="left:741px;top:73.64px;font-size:14.6px;line-height:14.6px;font-family:'Liberation Sans', sans-serif;white-space:pre;">Picks and Comments</div>
<div style="left:895px;top:73.64px;font-size:14.6px;line-height:14.6px;font-family:'Liberation Sans', sans-serif;white-space:pre;">VSA</div>
<div style="left:941px;top:73.64px;font-size:14.6px;line-height:14.6px;font-family:'Liberation Sans', sans-serif;white-space:pre;">Video Export</div>
<div style="left:1045px;top:73.64px;font-size:14.6px;line-height:14.6px;font-family:'Liberation Sans', sans-serif;white-space:pre;">Help</div>
<div style="left:316px;top:93px;width:1931px;height:32px;background:#000"></div>
<div style="left:329px;top:95px;width:246px;height:30px;background:#93aef8;border-radius:4px 12px 0 0"></div>
<div style="left:333px;top:104.75px;font-size:12.7px;line-height:12.7px;font-family:'Liberation Sans', sans-serif;white-space:pre;">Volume Tracking Monitor</div>
<div style="left:579px;top:95px;width:245px;height:30px;background:#93aef8;border-radius:4px 12px 0 0"></div>
<div style="left:583px;top:104.75px;font-size:12.7px;line-height:12.7px;font-family:'Liberation Sans', sans-serif;white-space:pre;">3D view</div>
<div style="left:828px;top:95px;width:247px;height:30px;background:#93aef8;border-radius:4px 12px 0 0"></div>
<div style="left:833px;top:104.75px;font-size:12.7px;line-height:12.7px;font-family:'Liberation Sans', sans-serif;white-space:pre;">Events NOT passing "Base Filter"</div>
<div style="left:1078px;top:95px;width:248px;height:30px;background:linear-gradient(90deg,#e0def8,#a8bcf8);border-radius:4px 12px 0 0"></div>
<div style="left:1083px;top:104.75px;font-size:12.7px;line-height:12.7px;font-family:'Liberation Sans', sans-serif;white-space:pre;">Events NOT passing Quality Filter</div>
<div style="left:2144px;top:96px;width:44px;height:29px;background:#2626ff;border-radius:7px 7px 0 0"></div>
<div style="left:1766px;width:800px;text-align:center;top:103.29px;font-size:16.2px;line-height:16.2px;font-family:'Liberation Sans', sans-serif;white-space:pre;color:#c8f0f0">Split</div>
<div style="left:2197px;top:97px;width:46px;height:27px;background:#2626ff;border-radius:8px 8px 0 0"></div>
<div style="left:2219px;top:97px;width:2px;height:28px;background:#000"></div>
<div style="left:2203px;top:110px;width:11px;height:2px;background:#c8f0f0"></div>
<div style="left:2226px;top:110px;width:12px;height:2px;background:#c8f0f0"></div>
<div style="left:2231px;top:105px;width:2px;height:12px;background:#c8f0f0"></div>
<div style="left:316px;top:125px;width:1931px;height:27px;background:#d4d4d4"></div>
<div style="left:2184px;top:131px;width:15px;height:16px;background:#fff;border:1px solid #555;box-sizing:border-box"></div>
<div style="left:2208px;top:129px;width:34px;height:20px;background:#d4d4d4;border:1px solid #c4c4c4;box-sizing:border-box"></div>
<div style="left:2212px;top:133.33px;font-size:12.6px;line-height:12.6px;font-family:'Liberation Sans', sans-serif;white-space:pre;color:#8a8a8a">Edit</div>
<svg style="left:2232px;top:139px" width="8" height="8"><path d="M1 7 L7 1" stroke="#fff" stroke-width="1.5"/></svg>
<div style="left:318px;top:155.95px;font-size:16.6px;line-height:16.6px;font-family:'Liberation Sans', sans-serif;white-space:pre;">Events not passing Quality Filter</div>
<div style="left:318px;top:175px;width:1926px;height:1136px;border:1px solid #6a8bb0;box-sizing:border-box;background:#fff"></div>
<div style="left:355px;top:176px;width:1868px;height:88px;background:linear-gradient(#f9fbfd,#e8edf4 40%,#d6deea)"></div>
<div style="left:319px;top:176px;width:35px;height:88px;background:#a8c4e8"></div>
<div style="left:319px;top:265px;width:35px;height:1025px;background:#e3eaf6"></div>
<div style="left:354px;top:176px;width:1px;height:88px;background:#6a8bb0"></div>
<div style="left:569px;top:176px;width:1px;height:88px;background:#6a8bb0"></div>
<div style="left:663px;top:176px;width:1px;height:88px;background:#6a8bb0"></div>
<div style="left:757px;top:176px;width:1px;height:88px;background:#6a8bb0"></div>
<div style="left:851px;top:176px;width:1px;height:88px;background:#6a8bb0"></div>
<div style="left:951px;top:176px;width:1px;height:88px;background:#6a8bb0"></div>
<div style="left:1029px;top:176px;width:1px;height:88px;background:#6a8bb0"></div>
<div style="left:1138px;top:176px;width:1px;height:88px;background:#6a8bb0"></div>
<div style="left:1258px;top:176px;width:1px;height:88px;background:#6a8bb0"></div>
<div style="left:1378px;top:176px;width:1px;height:88px;background:#6a8bb0"></div>
<div style="left:1463px;top:176px;width:1px;height:88px;background:#6a8bb0"></div>
<div style="left:1557px;top:176px;width:1px;height:88px;background:#6a8bb0"></div>
<div style="left:1647px;top:176px;width:1px;height:88px;background:#6a8bb0"></div>
<div style="left:1794px;top:176px;width:1px;height:88px;background:#6a8bb0"></div>
<div style="left:1932px;top:176px;width:1px;height:88px;background:#6a8bb0"></div>
<div style="left:2001px;top:176px;width:1px;height:88px;background:#6a8bb0"></div>
<div style="left:2083px;top:176px;width:1px;height:88px;background:#6a8bb0"></div>
<div style="left:2163px;top:176px;width:1px;height:88px;background:#6a8bb0"></div>
<div style="left:319px;top:264px;width:1904px;height:1px;background:#6a8bb0"></div>
<div style="left:319px;top:287px;width:35px;height:1px;background:#6a8bb0"></div>
<div style="left:355px;top:287px;width:1868px;height:1px;background:#ccd6e6"></div>
<div style="left:319px;top:310px;width:35px;height:1px;background:#6a8bb0"></div>
<div style="left:355px;top:310px;width:1868px;height:1px;background:#ccd6e6"></div>
<div style="left:319px;top:333px;width:35px;height:1px;background:#6a8bb0"></div>
<div style="left:355px;top:333px;width:1868px;height:1px;background:#ccd6e6"></div>
<div style="left:319px;top:356px;width:35px;height:1px;background:#6a8bb0"></div>
<div style="left:355px;top:356px;width:1868px;height:1px;background:#ccd6e6"></div>
<div style="left:319px;top:379px;width:35px;height:1px;background:#6a8bb0"></div>
<div style="left:355px;top:379px;width:1868px;height:1px;background:#ccd6e6"></div>
<div style="left:319px;top:402px;width:35px;height:1px;background:#6a8bb0"></div>
<div style="left:355px;top:402px;width:1868px;height:1px;background:#ccd6e6"></div>
<div style="left:319px;top:425px;width:35px;height:1px;background:#6a8bb0"></div>
<div style="left:355px;top:425px;width:1868px;height:1px;background:#ccd6e6"></div>
<div style="left:319px;top:448px;width:35px;height:1px;background:#6a8bb0"></div>
<div style="left:355px;top:448px;width:1868px;height:1px;background:#ccd6e6"></div>
<div style="left:319px;top:471px;width:35px;height:1px;background:#6a8bb0"></div>
<div style="left:355px;top:471px;width:1868px;height:1px;background:#ccd6e6"></div>
<div style="left:319px;top:494px;width:35px;height:1px;background:#6a8bb0"></div>
<div style="left:355px;top:494px;width:1868px;height:1px;background:#ccd6e6"></div>
<div style="left:319px;top:517px;width:35px;height:1px;background:#6a8bb0"></div>
<div style="left:355px;top:517px;width:1868px;height:1px;background:#ccd6e6"></div>
<div style="left:319px;top:540px;width:35px;height:1px;background:#6a8bb0"></div>
<div style="left:355px;top:540px;width:1868px;height:1px;background:#ccd6e6"></div>
<div style="left:319px;top:563px;width:35px;height:1px;background:#6a8bb0"></div>
<div style="left:355px;top:563px;width:1868px;height:1px;background:#ccd6e6"></div>
<div style="left:319px;top:586px;width:35px;height:1px;background:#6a8bb0"></div>
<div style="left:355px;top:586px;width:1868px;height:1px;background:#ccd6e6"></div>
<div style="left:319px;top:609px;width:35px;height:1px;background:#6a8bb0"></div>
<div style="left:355px;top:609px;width:1868px;height:1px;background:#ccd6e6"></div>
<div style="left:319px;top:632px;width:35px;height:1px;background:#6a8bb0"></div>
<div style="left:355px;top:632px;width:1868px;height:1px;background:#ccd6e6"></div>
<div style="left:319px;top:655px;width:35px;height:1px;background:#6a8bb0"></div>
<div style="left:355px;top:655px;width:1868px;height:1px;background:#ccd6e6"></div>
<div style="left:319px;top:678px;width:35px;height:1px;background:#6a8bb0"></div>
<div style="left:355px;top:678px;width:1868px;height:1px;background:#ccd6e6"></div>
<div style="left:319px;top:701px;width:35px;height:1px;background:#6a8bb0"></div>
<div style="left:355px;top:701px;width:1868px;height:1px;background:#ccd6e6"></div>
<div style="left:319px;top:724px;width:35px;height:1px;background:#6a8bb0"></div>
<div style="left:355px;top:724px;width:1868px;height:1px;background:#ccd6e6"></div>
<div style="left:319px;top:747px;width:35px;height:1px;background:#6a8bb0"></div>
<div style="left:355px;top:747px;width:1868px;height:1px;background:#ccd6e6"></div>
<div style="left:319px;top:770px;width:35px;height:1px;background:#6a8bb0"></div>
<div style="left:355px;top:770px;width:1868px;height:1px;background:#ccd6e6"></div>
<div style="left:319px;top:793px;width:35px;height:1px;background:#6a8bb0"></div>
<div style="left:355px;top:793px;width:1868px;height:1px;background:#ccd6e6"></div>
<div style="left:319px;top:816px;width:35px;height:1px;background:#6a8bb0"></div>
<div style="left:355px;top:816px;width:1868px;height:1px;background:#ccd6e6"></div>
<div style="left:319px;top:839px;width:35px;height:1px;background:#6a8bb0"></div>
<div style="left:355px;top:839px;width:1868px;height:1px;background:#ccd6e6"></div>
<div style="left:319px;top:862px;width:35px;height:1px;background:#6a8bb0"></div>
<div style="left:355px;top:862px;width:1868px;height:1px;background:#ccd6e6"></div>
<div style="left:319px;top:885px;width:35px;height:1px;background:#6a8bb0"></div>
<div style="left:355px;top:885px;width:1868px;height:1px;background:#ccd6e6"></div>
<div style="left:319px;top:908px;width:35px;height:1px;background:#6a8bb0"></div>
<div style="left:355px;top:908px;width:1868px;height:1px;background:#ccd6e6"></div>
<div style="left:319px;top:931px;width:35px;height:1px;background:#6a8bb0"></div>
<div style="left:355px;top:931px;width:1868px;height:1px;background:#ccd6e6"></div>
<div style="left:319px;top:954px;width:35px;height:1px;background:#6a8bb0"></div>
<div style="left:355px;top:954px;width:1868px;height:1px;background:#ccd6e6"></div>
<div style="left:319px;top:977px;width:35px;height:1px;background:#6a8bb0"></div>
<div style="left:355px;top:977px;width:1868px;height:1px;background:#ccd6e6"></div>
<div style="left:319px;top:1000px;width:35px;height:1px;background:#6a8bb0"></div>
<div style="left:355px;top:1000px;width:1868px;height:1px;background:#ccd6e6"></div>
<div style="left:319px;top:1023px;width:35px;height:1px;background:#6a8bb0"></div>
<div style="left:355px;top:1023px;width:1868px;height:1px;background:#ccd6e6"></div>
<div style="left:319px;top:1046px;width:35px;height:1px;background:#6a8bb0"></div>
<div style="left:355px;top:1046px;width:1868px;height:1px;background:#ccd6e6"></div>
<div style="left:319px;top:1069px;width:35px;height:1px;background:#6a8bb0"></div>
<div style="left:355px;top:1069px;width:1868px;height:1px;background:#ccd6e6"></div>
<div style="left:319px;top:1092px;width:35px;height:1px;background:#6a8bb0"></div>
<div style="left:355px;top:1092px;width:1868px;height:1px;background:#ccd6e6"></div>
<div style="left:319px;top:1115px;width:35px;height:1px;background:#6a8bb0"></div>
<div style="left:355px;top:1115px;width:1868px;height:1px;background:#ccd6e6"></div>
<div style="left:319px;top:1138px;width:35px;height:1px;background:#6a8bb0"></div>
<div style="left:355px;top:1138px;width:1868px;height:1px;background:#ccd6e6"></div>
<div style="left:319px;top:1161px;width:35px;height:1px;background:#6a8bb0"></div>
<div style="left:355px;top:1161px;width:1868px;height:1px;background:#ccd6e6"></div>
<div style="left:319px;top:1184px;width:35px;height:1px;background:#6a8bb0"></div>
<div style="left:355px;top:1184px;width:1868px;height:1px;background:#ccd6e6"></div>
<div style="left:319px;top:1207px;width:35px;height:1px;background:#6a8bb0"></div>
<div style="left:355px;top:1207px;width:1868px;height:1px;background:#ccd6e6"></div>
<div style="left:319px;top:1230px;width:35px;height:1px;background:#6a8bb0"></div>
<div style="left:355px;top:1230px;width:1868px;height:1px;background:#ccd6e6"></div>
<div style="left:319px;top:1253px;width:35px;height:1px;background:#6a8bb0"></div>
<div style="left:355px;top:1253px;width:1868px;height:1px;background:#ccd6e6"></div>
<div style="left:319px;top:1276px;width:35px;height:1px;background:#6a8bb0"></div>
<div style="left:355px;top:1276px;width:1868px;height:1px;background:#ccd6e6"></div>
<div style="left:354px;top:265px;width:1px;height:1025px;background:#6a8bb0"></div>
<div style="left:569px;top:265px;width:1px;height:1025px;background:#ccd6e6"></div>
<div style="left:663px;top:265px;width:1px;height:1025px;background:#ccd6e6"></div>
<div style="left:757px;top:265px;width:1px;height:1025px;background:#ccd6e6"></div>
<div style="left:851px;top:265px;width:1px;height:1025px;background:#ccd6e6"></div>
<div style="left:951px;top:265px;width:1px;height:1025px;background:#ccd6e6"></div>
<div style="left:1029px;top:265px;width:1px;height:1025px;background:#ccd6e6"></div>
<div style="left:1138px;top:265px;width:1px;height:1025px;background:#ccd6e6"></div>
<div style="left:1258px;top:265px;width:1px;height:1025px;background:#ccd6e6"></div>
<div style="left:1378px;top:265px;width:1px;height:1025px;background:#ccd6e6"></div>
<div style="left:1463px;top:265px;width:1px;height:1025px;background:#ccd6e6"></div>
<div style="left:1557px;top:265px;width:1px;height:1025px;background:#ccd6e6"></div>
<div style="left:1647px;top:265px;width:1px;height:1025px;background:#ccd6e6"></div>
<div style="left:1794px;top:265px;width:1px;height:1025px;background:#ccd6e6"></div>
<div style="left:1932px;top:265px;width:1px;height:1025px;background:#ccd6e6"></div>
<div style="left:2001px;top:265px;width:1px;height:1025px;background:#ccd6e6"></div>
<div style="left:2083px;top:265px;width:1px;height:1025px;background:#ccd6e6"></div>
<div style="left:2163px;top:265px;width:1px;height:1025px;background:#ccd6e6"></div>
<div style="left:216.0px;width:800px;text-align:center;top:212.55px;font-size:15.3px;line-height:15.3px;font-family:'Liberation Sans', sans-serif;white-space:pre;">X</div>
<div style="left:310.0px;width:800px;text-align:center;top:212.55px;font-size:15.3px;line-height:15.3px;font-family:'Liberation Sans', sans-serif;white-space:pre;">Y</div>
<div style="left:404.0px;width:800px;text-align:center;top:212.55px;font-size:15.3px;line-height:15.3px;font-family:'Liberation Sans', sans-serif;white-space:pre;">Z</div>
<div style="left:501.0px;width:800px;text-align:center;top:212.55px;font-size:15.3px;line-height:15.3px;font-family:'Liberation Sans', sans-serif;white-space:pre;">ML</div>
<div style="left:590.0px;width:800px;text-align:center;top:202.55px;font-size:15.3px;line-height:15.3px;font-family:'Liberation Sans', sans-serif;white-space:pre;">Quality</div>
<div style="left:590.0px;width:800px;text-align:center;top:222.55px;font-size:15.3px;line-height:15.3px;font-family:'Liberation Sans', sans-serif;white-space:pre;">Filter</div>
<div style="left:683.5px;width:800px;text-align:center;top:202.55px;font-size:15.3px;line-height:15.3px;font-family:'Liberation Sans', sans-serif;white-space:pre;">Has Null</div>
<div style="left:683.5px;width:800px;text-align:center;top:222.55px;font-size:15.3px;line-height:15.3px;font-family:'Liberation Sans', sans-serif;white-space:pre;">Values</div>
<div style="left:798.0px;width:800px;text-align:center;top:202.55px;font-size:15.3px;line-height:15.3px;font-family:'Liberation Sans', sans-serif;white-space:pre;">Parameters</div>
<div style="left:798.0px;width:800px;text-align:center;top:222.55px;font-size:15.3px;line-height:15.3px;font-family:'Liberation Sans', sans-serif;white-space:pre;">Outside Ranges</div>
<div style="left:918.0px;width:800px;text-align:center;top:202.55px;font-size:15.3px;line-height:15.3px;font-family:'Liberation Sans', sans-serif;white-space:pre;">Location</div>
<div style="left:918.0px;width:800px;text-align:center;top:222.55px;font-size:15.3px;line-height:15.3px;font-family:'Liberation Sans', sans-serif;white-space:pre;">Outside Ranges</div>
<div style="left:1020.5px;width:800px;text-align:center;top:202.55px;font-size:15.3px;line-height:15.3px;font-family:'Liberation Sans', sans-serif;white-space:pre;">Date</div>
<div style="left:1020.5px;width:800px;text-align:center;top:222.55px;font-size:15.3px;line-height:15.3px;font-family:'Liberation Sans', sans-serif;white-space:pre;">Is Valid</div>
<div style="left:1110.0px;width:800px;text-align:center;top:212.55px;font-size:15.3px;line-height:15.3px;font-family:'Liberation Sans', sans-serif;white-space:pre;">Site Specific</div>
<div style="left:1202.0px;width:800px;text-align:center;top:192.55px;font-size:15.3px;line-height:15.3px;font-family:'Liberation Sans', sans-serif;white-space:pre;">Seismic</div>
<div style="left:1202.0px;width:800px;text-align:center;top:212.55px;font-size:15.3px;line-height:15.3px;font-family:'Liberation Sans', sans-serif;white-space:pre;">Moment</div>
<div style="left:1202.0px;width:800px;text-align:center;top:232.55px;font-size:15.3px;line-height:15.3px;font-family:'Liberation Sans', sans-serif;white-space:pre;">[Nm]</div>
<div style="left:1320.5px;width:800px;text-align:center;top:192.55px;font-size:15.3px;line-height:15.3px;font-family:'Liberation Sans', sans-serif;white-space:pre;">Total Radiated</div>
<div style="left:1320.5px;width:800px;text-align:center;top:212.55px;font-size:15.3px;line-height:15.3px;font-family:'Liberation Sans', sans-serif;white-space:pre;">Energy</div>
<div style="left:1320.5px;width:800px;text-align:center;top:232.55px;font-size:15.3px;line-height:15.3px;font-family:'Liberation Sans', sans-serif;white-space:pre;">[J]</div>
<div style="left:1463.0px;width:800px;text-align:center;top:192.55px;font-size:15.3px;line-height:15.3px;font-family:'Liberation Sans', sans-serif;white-space:pre;">Apparent</div>
<div style="left:1463.0px;width:800px;text-align:center;top:212.55px;font-size:15.3px;line-height:15.3px;font-family:'Liberation Sans', sans-serif;white-space:pre;">Stress</div>
<div style="left:1463.0px;width:800px;text-align:center;top:232.55px;font-size:15.3px;line-height:15.3px;font-family:'Liberation Sans', sans-serif;white-space:pre;">[MPa]</div>
<div style="left:1566.5px;width:800px;text-align:center;top:202.55px;font-size:15.3px;line-height:15.3px;font-family:'Liberation Sans', sans-serif;white-space:pre;">Residual</div>
<div style="left:1566.5px;width:800px;text-align:center;top:222.55px;font-size:15.3px;line-height:15.3px;font-family:'Liberation Sans', sans-serif;white-space:pre;">[m]</div>
<div style="left:1642.0px;width:800px;text-align:center;top:202.55px;font-size:15.3px;line-height:15.3px;font-family:'Liberation Sans', sans-serif;white-space:pre;">Potency</div>
<div style="left:1642.0px;width:800px;text-align:center;top:222.55px;font-size:15.3px;line-height:15.3px;font-family:'Liberation Sans', sans-serif;white-space:pre;">[m³]</div>
<div style="left:1723.0px;width:800px;text-align:center;top:212.55px;font-size:15.3px;line-height:15.3px;font-family:'Liberation Sans', sans-serif;white-space:pre;">Log(P)</div>
<div style="left:73px;width:800px;text-align:center;top:213.05px;font-size:15.3px;line-height:15.3px;font-family:'Liberation Sans', sans-serif;white-space:pre;">Date - Time</div>
<svg style="left:361px;top:210px" width="16" height="20"><path d="M8 1 V17" stroke="#000" stroke-width="3"/><path d="M2.5 11 L8 17.5 L13.5 11" stroke="#000" stroke-width="3" fill="none"/></svg>
<div style="left:2164px;top:176px;width:58px;height:88px;overflow:hidden">
<div style="left:-23px;width:150px;text-align:center;top:6.5px;font-family:'Liberation Sans', sans-serif;font-size:15.3px;line-height:15.3px;white-space:pre">max</div>
<div style="left:-23px;width:150px;text-align:center;top:26.5px;font-family:'Liberation Sans', sans-serif;font-size:15.3px;line-height:15.3px;white-space:pre">displacement</div>
<div style="left:-23px;width:150px;text-align:center;top:46.5px;font-family:'Liberation Sans', sans-serif;font-size:15.3px;line-height:15.3px;white-space:pre">at source</div>
<div style="left:-23px;width:150px;text-align:center;top:66.5px;font-family:'Liberation Sans', sans-serif;font-size:15.3px;line-height:15.3px;white-space:pre">[mm]</div>
</div>
<div style="left:319px;top:265px;width:1904px;height:1024px;overflow:hidden">
<div style="left:-369px;width:400px;text-align:right;top:3.8px;font-size:15.3px;line-height:15.3px;font-family:'Liberation Sans', sans-serif;white-space:pre;">1</div>
<div style="left:-153px;width:400px;text-align:right;top:5.8px;font-size:13.3px;line-height:13.3px;font-family:'Liberation Mono', monospace;white-space:pre;">2005-08-02 19:18:31.000</div>
<div style="left:-59px;width:400px;text-align:right;top:5.8px;font-size:13.3px;line-height:13.3px;font-family:'Liberation Mono', monospace;white-space:pre;">2,768.4</div>
<div style="left:35px;width:400px;text-align:right;top:5.8px;font-size:13.3px;line-height:13.3px;font-family:'Liberation Mono', monospace;white-space:pre;">4,741.9</div>
<div style="left:129px;width:400px;text-align:right;top:5.8px;font-size:13.3px;line-height:13.3px;font-family:'Liberation Mono', monospace;white-space:pre;">1,137.5</div>
<div style="left:536px;top:1px;width:20px;height:20px;border-radius:50%;background:#000"></div>
<div style="left:714px;top:3.8px;font-size:15.3px;line-height:15.3px;font-family:'Liberation Sans', sans-serif;white-space:pre;">Included</div>
<div style="left:823px;top:3.8px;font-size:15.3px;line-height:15.3px;font-family:'Liberation Sans', sans-serif;white-space:pre;">Included</div>
<div style="left:1063px;top:3.8px;font-size:15.3px;line-height:15.3px;font-family:'Liberation Sans', sans-serif;white-space:pre;">Included</div>
<div style="left:1148px;top:3.8px;font-size:15.3px;line-height:15.3px;font-family:'Liberation Sans', sans-serif;white-space:pre;">Included</div>
<div style="left:1479px;top:1px;width:20px;height:20px;border-radius:50%;background:radial-gradient(circle at 50% 45%, #b4b4b8 0%, #a8a8ac 72%, #85858a 100%)"></div>
<div style="left:1210px;width:400px;text-align:right;top:5.8px;font-size:13.3px;line-height:13.3px;font-family:'Liberation Mono', monospace;white-space:pre;">0.0e+00</div>
<div style="left:1617px;top:1px;width:20px;height:20px;border-radius:50%;background:radial-gradient(circle at 50% 45%, #94aef6 0%, #8aa6f2 72%, #6c86d4 100%)"></div>
<div style="left:1279px;width:400px;text-align:right;top:5.8px;font-size:13.3px;line-height:13.3px;font-family:'Liberation Mono', monospace;white-space:pre;">0.5</div>
<div style="left:-369px;width:400px;text-align:right;top:26.8px;font-size:15.3px;line-height:15.3px;font-family:'Liberation Sans', sans-serif;white-space:pre;">2</div>
<div style="left:-153px;width:400px;text-align:right;top:28.8px;font-size:13.3px;line-height:13.3px;font-family:'Liberation Mono', monospace;white-space:pre;">2005-08-03 19:01:31.000</div>
<div style="left:-59px;width:400px;text-align:right;top:28.8px;font-size:13.3px;line-height:13.3px;font-family:'Liberation Mono', monospace;white-space:pre;">2,752.3</div>
<div style="left:35px;width:400px;text-align:right;top:28.8px;font-size:13.3px;line-height:13.3px;font-family:'Liberation Mono', monospace;white-space:pre;">4,793.3</div>
<div style="left:129px;width:400px;text-align:right;top:28.8px;font-size:13.3px;line-height:13.3px;font-family:'Liberation Mono', monospace;white-space:pre;">1,178.7</div>
<div style="left:536px;top:24px;width:20px;height:20px;border-radius:50%;background:#000"></div>
<div style="left:714px;top:26.8px;font-size:15.3px;line-height:15.3px;font-family:'Liberation Sans', sans-serif;white-space:pre;">Included</div>
<div style="left:823px;top:26.8px;font-size:15.3px;line-height:15.3px;font-family:'Liberation Sans', sans-serif;white-space:pre;">Included</div>
<div style="left:1063px;top:26.8px;font-size:15.3px;line-height:15.3px;font-family:'Liberation Sans', sans-serif;white-space:pre;">Included</div>
<div style="left:1148px;top:26.8px;font-size:15.3px;line-height:15.3px;font-family:'Liberation Sans', sans-serif;white-space:pre;">Included</div>
<div style="left:1479px;top:24px;width:20px;height:20px;border-radius:50%;background:radial-gradient(circle at 50% 45%, #b4b4b8 0%, #a8a8ac 72%, #85858a 100%)"></div>
<div style="left:1210px;width:400px;text-align:right;top:28.8px;font-size:13.3px;line-height:13.3px;font-family:'Liberation Mono', monospace;white-space:pre;">0.0e+00</div>
<div style="left:1617px;top:24px;width:20px;height:20px;border-radius:50%;background:radial-gradient(circle at 50% 45%, #94aef6 0%, #8aa6f2 72%, #6c86d4 100%)"></div>
<div style="left:1279px;width:400px;text-align:right;top:28.8px;font-size:13.3px;line-height:13.3px;font-family:'Liberation Mono', monospace;white-space:pre;">3.6</div>
<div style="left:-369px;width:400px;text-align:right;top:49.8px;font-size:15.3px;line-height:15.3px;font-family:'Liberation Sans', sans-serif;white-space:pre;">3</div>
<div style="left:-153px;width:400px;text-align:right;top:51.8px;font-size:13.3px;line-height:13.3px;font-family:'Liberation Mono', monospace;white-space:pre;">2005-08-04 07:45:38.000</div>
<div style="left:-59px;width:400px;text-align:right;top:51.8px;font-size:13.3px;line-height:13.3px;font-family:'Liberation Mono', monospace;white-space:pre;">2,748.7</div>
<div style="left:35px;width:400px;text-align:right;top:51.8px;font-size:13.3px;line-height:13.3px;font-family:'Liberation Mono', monospace;white-space:pre;">4,750.2</div>
<div style="left:129px;width:400px;text-align:right;top:51.8px;font-size:13.3px;line-height:13.3px;font-family:'Liberation Mono', monospace;white-space:pre;">1,228.4</div>
<div style="left:536px;top:47px;width:20px;height:20px;border-radius:50%;background:#000"></div>
<div style="left:714px;top:49.8px;font-size:15.3px;line-height:15.3px;font-family:'Liberation Sans', sans-serif;white-space:pre;">Included</div>
<div style="left:823px;top:49.8px;font-size:15.3px;line-height:15.3px;font-family:'Liberation Sans', sans-serif;white-space:pre;">Included</div>
<div style="left:1063px;top:49.8px;font-size:15.3px;line-height:15.3px;font-family:'Liberation Sans', sans-serif;white-space:pre;">Included</div>
<div style="left:1148px;top:49.8px;font-size:15.3px;line-height:15.3px;font-family:'Liberation Sans', sans-serif;white-space:pre;">Included</div>
<div style="left:1479px;top:47px;width:20px;height:20px;border-radius:50%;background:radial-gradient(circle at 50% 45%, #b4b4b8 0%, #a8a8ac 72%, #85858a 100%)"></div>
<div style="left:1210px;width:400px;text-align:right;top:51.8px;font-size:13.3px;line-height:13.3px;font-family:'Liberation Mono', monospace;white-space:pre;">0.0e+00</div>
<div style="left:1617px;top:47px;width:20px;height:20px;border-radius:50%;background:radial-gradient(circle at 50% 45%, #94aef6 0%, #8aa6f2 72%, #6c86d4 100%)"></div>
<div style="left:1279px;width:400px;text-align:right;top:51.8px;font-size:13.3px;line-height:13.3px;font-family:'Liberation Mono', monospace;white-space:pre;">3.8</div>
<div style="left:-369px;width:400px;text-align:right;top:72.8px;font-size:15.3px;line-height:15.3px;font-family:'Liberation Sans', sans-serif;white-space:pre;">4</div>
<div style="left:-153px;width:400px;text-align:right;top:74.8px;font-size:13.3px;line-height:13.3px;font-family:'Liberation Mono', monospace;white-space:pre;">2005-08-04 09:31:03.000</div>
<div style="left:-59px;width:400px;text-align:right;top:74.8px;font-size:13.3px;line-height:13.3px;font-family:'Liberation Mono', monospace;white-space:pre;">2,760.8</div>
<div style="left:35px;width:400px;text-align:right;top:74.8px;font-size:13.3px;line-height:13.3px;font-family:'Liberation Mono', monospace;white-space:pre;">4,800.4</div>
<div style="left:129px;width:400px;text-align:right;top:74.8px;font-size:13.3px;line-height:13.3px;font-family:'Liberation Mono', monospace;white-space:pre;">1,138.1</div>
<div style="left:536px;top:70px;width:20px;height:20px;border-radius:50%;background:#000"></div>
<div style="left:714px;top:72.8px;font-size:15.3px;line-height:15.3px;font-family:'Liberation Sans', sans-serif;white-space:pre;">Included</div>
<div style="left:823px;top:72.8px;font-size:15.3px;line-height:15.3px;font-family:'Liberation Sans', sans-serif;white-space:pre;">Included</div>
<div style="left:1063px;top:72.8px;font-size:15.3px;line-height:15.3px;font-family:'Liberation Sans', sans-serif;white-space:pre;">Included</div>
<div style="left:1148px;top:72.8px;font-size:15.3px;line-height:15.3px;font-family:'Liberation Sans', sans-serif;white-space:pre;">Included</div>
<div style="left:1479px;top:70px;width:20px;height:20px;border-radius:50%;background:radial-gradient(circle at 50% 45%, #b4b4b8 0%, #a8a8ac 72%, #85858a 100%)"></div>
<div style="left:1210px;width:400px;text-align:right;top:74.8px;font-size:13.3px;line-height:13.3px;font-family:'Liberation Mono', monospace;white-space:pre;">0.0e+00</div>
<div style="left:1617px;top:70px;width:20px;height:20px;border-radius:50%;background:radial-gradient(circle at 50% 45%, #b0f6fa 0%, #a4f0f6 72%, #78c4cc 100%)"></div>
<div style="left:1279px;width:400px;text-align:right;top:74.8px;font-size:13.3px;line-height:13.3px;font-family:'Liberation Mono', monospace;white-space:pre;">8.9</div>
<div style="left:-369px;width:400px;text-align:right;top:95.8px;font-size:15.3px;line-height:15.3px;font-family:'Liberation Sans', sans-serif;white-space:pre;">5</div>
<div style="left:-153px;width:400px;text-align:right;top:97.8px;font-size:13.3px;line-height:13.3px;font-family:'Liberation Mono', monospace;white-space:pre;">2005-08-05 01:31:34.000</div>
<div style="left:-59px;width:400px;text-align:right;top:97.8px;font-size:13.3px;line-height:13.3px;font-family:'Liberation Mono', monospace;white-space:pre;">2,780.4</div>
<div style="left:35px;width:400px;text-align:right;top:97.8px;font-size:13.3px;line-height:13.3px;font-family:'Liberation Mono', monospace;white-space:pre;">4,789.0</div>
<div style="left:129px;width:400px;text-align:right;top:97.8px;font-size:13.3px;line-height:13.3px;font-family:'Liberation Mono', monospace;white-space:pre;">1,213.4</div>
<div style="left:536px;top:93px;width:20px;height:20px;border-radius:50%;background:#000"></div>
<div style="left:714px;top:95.8px;font-size:15.3px;line-height:15.3px;font-family:'Liberation Sans', sans-serif;white-space:pre;">Included</div>
<div style="left:823px;top:95.8px;font-size:15.3px;line-height:15.3px;font-family:'Liberation Sans', sans-serif;white-space:pre;">Included</div>
<div style="left:1063px;top:95.8px;font-size:15.3px;line-height:15.3px;font-family:'Liberation Sans', sans-serif;white-space:pre;">Included</div>
<div style="left:1148px;top:95.8px;font-size:15.3px;line-height:15.3px;font-family:'Liberation Sans', sans-serif;white-space:pre;">Included</div>
<div style="left:1479px;top:93px;width:20px;height:20px;border-radius:50%;background:radial-gradient(circle at 50% 45%, #b4b4b8 0%, #a8a8ac 72%, #85858a 100%)"></div>
<div style="left:1210px;width:400px;text-align:right;top:97.8px;font-size:13.3px;line-height:13.3px;font-family:'Liberation Mono', monospace;white-space:pre;">0.0e+00</div>
<svg style="left:1617px;top:93px" width="20" height="20"><path d="M2.5 2.5 L17.5 17.5 M17.5 2.5 L2.5 17.5" stroke="#2a2a2a" stroke-width="2.8" stroke-linecap="round"/></svg>
<div style="left:1279px;width:400px;text-align:right;top:97.8px;font-size:13.3px;line-height:13.3px;font-family:'Liberation Mono', monospace;white-space:pre;">0  </div>
<div style="left:-369px;width:400px;text-align:right;top:118.8px;font-size:15.3px;line-height:15.3px;font-family:'Liberation Sans', sans-serif;white-space:pre;">6</div>
<div style="left:-153px;width:400px;text-align:right;top:120.8px;font-size:13.3px;line-height:13.3px;font-family:'Liberation Mono', monospace;white-space:pre;">2005-08-06 03:36:53.000</div>
<div style="left:-59px;width:400px;text-align:right;top:120.8px;font-size:13.3px;line-height:13.3px;font-family:'Liberation Mono', monospace;white-space:pre;">2,823.3</div>
<div style="left:35px;width:400px;text-align:right;top:120.8px;font-size:13.3px;line-height:13.3px;font-family:'Liberation Mono', monospace;white-space:pre;">4,727.8</div>
<div style="left:129px;width:400px;text-align:right;top:120.8px;font-size:13.3px;line-height:13.3px;font-family:'Liberation Mono', monospace;white-space:pre;">1,079.8</div>
<div style="left:536px;top:116px;width:20px;height:20px;border-radius:50%;background:#000"></div>
<div style="left:714px;top:118.8px;font-size:15.3px;line-height:15.3px;font-family:'Liberation Sans', sans-serif;white-space:pre;">Included</div>
<div style="left:823px;top:118.8px;font-size:15.3px;line-height:15.3px;font-family:'Liberation Sans', sans-serif;white-space:pre;">Included</div>
<div style="left:1063px;top:118.8px;font-size:15.3px;line-height:15.3px;font-family:'Liberation Sans', sans-serif;white-space:pre;">Included</div>
<div style="left:1148px;top:118.8px;font-size:15.3px;line-height:15.3px;font-family:'Liberation Sans', sans-serif;white-space:pre;">Included</div>
<div style="left:1479px;top:116px;width:20px;height:20px;border-radius:50%;background:radial-gradient(circle at 50% 45%, #b4b4b8 0%, #a8a8ac 72%, #85858a 100%)"></div>
<div style="left:1210px;width:400px;text-align:right;top:120.8px;font-size:13.3px;line-height:13.3px;font-family:'Liberation Mono', monospace;white-space:pre;">0.0e+00</div>
<div style="left:1617px;top:116px;width:20px;height:20px;border-radius:50%;background:radial-gradient(circle at 50% 45%, #94aef6 0%, #8aa6f2 72%, #6c86d4 100%)"></div>
<div style="left:1279px;width:400px;text-align:right;top:120.8px;font-size:13.3px;line-height:13.3px;font-family:'Liberation Mono', monospace;white-space:pre;">1.9</div>
<div style="left:-369px;width:400px;text-align:right;top:141.8px;font-size:15.3px;line-height:15.3px;font-family:'Liberation Sans', sans-serif;white-space:pre;">7</div>
<div style="left:-153px;width:400px;text-align:right;top:143.8px;font-size:13.3px;line-height:13.3px;font-family:'Liberation Mono', monospace;white-space:pre;">2005-08-06 03:38:24.000</div>
<div style="left:-59px;width:400px;text-align:right;top:143.8px;font-size:13.3px;line-height:13.3px;font-family:'Liberation Mono', monospace;white-space:pre;">2,828.6</div>
<div style="left:35px;width:400px;text-align:right;top:143.8px;font-size:13.3px;line-height:13.3px;font-family:'Liberation Mono', monospace;white-space:pre;">4,736.2</div>
<div style="left:129px;width:400px;text-align:right;top:143.8px;font-size:13.3px;line-height:13.3px;font-family:'Liberation Mono', monospace;white-space:pre;">1,083.3</div>
<div style="left:536px;top:139px;width:20px;height:20px;border-radius:50%;background:#000"></div>
<div style="left:714px;top:141.8px;font-size:15.3px;line-height:15.3px;font-family:'Liberation Sans', sans-serif;white-space:pre;">Included</div>
<div style="left:823px;top:141.8px;font-size:15.3px;line-height:15.3px;font-family:'Liberation Sans', sans-serif;white-space:pre;">Included</div>
<div style="left:1063px;top:141.8px;font-size:15.3px;line-height:15.3px;font-family:'Liberation Sans', sans-serif;white-space:pre;">Included</div>
<div style="left:1148px;top:141.8px;font-size:15.3px;line-height:15.3px;font-family:'Liberation Sans', sans-serif;white-space:pre;">Included</div>
<div style="left:1479px;top:139px;width:20px;height:20px;border-radius:50%;background:radial-gradient(circle at 50% 45%, #b4b4b8 0%, #a8a8ac 72%, #85858a 100%)"></div>
<div style="left:1210px;width:400px;text-align:right;top:143.8px;font-size:13.3px;line-height:13.3px;font-family:'Liberation Mono', monospace;white-space:pre;">0.0e+00</div>
<div style="left:1617px;top:139px;width:20px;height:20px;border-radius:50%;background:radial-gradient(circle at 50% 45%, #94aef6 0%, #8aa6f2 72%, #6c86d4 100%)"></div>
<div style="left:1279px;width:400px;text-align:right;top:143.8px;font-size:13.3px;line-height:13.3px;font-family:'Liberation Mono', monospace;white-space:pre;">4.3</div>
<div style="left:-369px;width:400px;text-align:right;top:164.8px;font-size:15.3px;line-height:15.3px;font-family:'Liberation Sans', sans-serif;white-space:pre;">8</div>
<div style="left:-153px;width:400px;text-align:right;top:166.8px;font-size:13.3px;line-height:13.3px;font-family:'Liberation Mono', monospace;white-space:pre;">2005-08-06 12:56:00.000</div>
<div style="left:-59px;width:400px;text-align:right;top:166.8px;font-size:13.3px;line-height:13.3px;font-family:'Liberation Mono', monospace;white-space:pre;">2,776.4</div>
<div style="left:35px;width:400px;text-align:right;top:166.8px;font-size:13.3px;line-height:13.3px;font-family:'Liberation Mono', monospace;white-space:pre;">4,756.1</div>
<div style="left:129px;width:400px;text-align:right;top:166.8px;font-size:13.3px;line-height:13.3px;font-family:'Liberation Mono', monospace;white-space:pre;">1,107.9</div>
<div style="left:536px;top:162px;width:20px;height:20px;border-radius:50%;background:#000"></div>
<div style="left:714px;top:164.8px;font-size:15.3px;line-height:15.3px;font-family:'Liberation Sans', sans-serif;white-space:pre;">Included</div>
<div style="left:823px;top:164.8px;font-size:15.3px;line-height:15.3px;font-family:'Liberation Sans', sans-serif;white-space:pre;">Included</div>
<div style="left:1063px;top:164.8px;font-size:15.3px;line-height:15.3px;font-family:'Liberation Sans', sans-serif;white-space:pre;">Included</div>
<div style="left:1148px;top:164.8px;font-size:15.3px;line-height:15.3px;font-family:'Liberation Sans', sans-serif;white-space:pre;">Included</div>
<div style="left:1479px;top:162px;width:20px;height:20px;border-radius:50%;background:radial-gradient(circle at 50% 45%, #b4b4b8 0%, #a8a8ac 72%, #85858a 100%)"></div>
<div style="left:1210px;width:400px;text-align:right;top:166.8px;font-size:13.3px;line-height:13.3px;font-family:'Liberation Mono', monospace;white-space:pre;">0.0e+00</div>
<div style="left:1617px;top:162px;width:20px;height:20px;border-radius:50%;background:radial-gradient(circle at 50% 45%, #94aef6 0%, #8aa6f2 72%, #6c86d4 100%)"></div>
<div style="left:1279px;width:400px;text-align:right;top:166.8px;font-size:13.3px;line-height:13.3px;font-family:'Liberation Mono', monospace;white-space:pre;">4.2</div>
<div style="left:-369px;width:400px;text-align:right;top:187.8px;font-size:15.3px;line-height:15.3px;font-family:'Liberation Sans', sans-serif;white-space:pre;">9</div>
<div style="left:-153px;width:400px;text-align:right;top:189.8px;font-size:13.3px;line-height:13.3px;font-family:'Liberation Mono', monospace;white-space:pre;">2005-08-06 15:48:06.000</div>
<div style="left:-59px;width:400px;text-align:right;top:189.8px;font-size:13.3px;line-height:13.3px;font-family:'Liberation Mono', monospace;white-space:pre;">2,772.2</div>
<div style="left:35px;width:400px;text-align:right;top:189.8px;font-size:13.3px;line-height:13.3px;font-family:'Liberation Mono', monospace;white-space:pre;">4,835.0</div>
<div style="left:129px;width:400px;text-align:right;top:189.8px;font-size:13.3px;line-height:13.3px;font-family:'Liberation Mono', monospace;white-space:pre;">1,002.2</div>
<div style="left:536px;top:185px;width:20px;height:20px;border-radius:50%;background:#000"></div>
<div style="left:714px;top:187.8px;font-size:15.3px;line-height:15.3px;font-family:'Liberation Sans', sans-serif;white-space:pre;">Included</div>
<div style="left:823px;top:187.8px;font-size:15.3px;line-height:15.3px;font-family:'Liberation Sans', sans-serif;white-space:pre;">Included</div>
<div style="left:1063px;top:187.8px;font-size:15.3px;line-height:15.3px;font-family:'Liberation Sans', sans-serif;white-space:pre;">Included</div>
<div style="left:1148px;top:187.8px;font-size:15.3px;line-height:15.3px;font-family:'Liberation Sans', sans-serif;white-space:pre;">Included</div>
<div style="left:1479px;top:185px;width:20px;height:20px;border-radius:50%;background:radial-gradient(circle at 50% 45%, #b4b4b8 0%, #a8a8ac 72%, #85858a 100%)"></div>
<div style="left:1210px;width:400px;text-align:right;top:189.8px;font-size:13.3px;line-height:13.3px;font-family:'Liberation Mono', monospace;white-space:pre;">0.0e+00</div>
<div style="left:1617px;top:185px;width:20px;height:20px;border-radius:50%;background:radial-gradient(circle at 50% 45%, #94aef6 0%, #8aa6f2 72%, #6c86d4 100%)"></div>
<div style="left:1279px;width:400px;text-align:right;top:189.8px;font-size:13.3px;line-height:13.3px;font-family:'Liberation Mono', monospace;white-space:pre;">3.2</div>
<div style="left:-369px;width:400px;text-align:right;top:210.8px;font-size:15.3px;line-height:15.3px;font-family:'Liberation Sans', sans-serif;white-space:pre;">10</div>
<div style="left:-153px;width:400px;text-align:right;top:212.8px;font-size:13.3px;line-height:13.3px;font-family:'Liberation Mono', monospace;white-space:pre;">2005-08-06 21:54:46.000</div>
<div style="left:-59px;width:400px;text-align:right;top:212.8px;font-size:13.3px;line-height:13.3px;font-family:'Liberation Mono', monospace;white-space:pre;">2,757.4</div>
<div style="left:35px;width:400px;text-align:right;top:212.8px;font-size:13.3px;line-height:13.3px;font-family:'Liberation Mono', monospace;white-space:pre;">4,775.8</div>
<div style="left:129px;width:400px;text-align:right;top:212.8px;font-size:13.3px;line-height:13.3px;font-family:'Liberation Mono', monospace;white-space:pre;">1,072.5</div>
<div style="left:536px;top:208px;width:20px;height:20px;border-radius:50%;background:#000"></div>
<div style="left:714px;top:210.8px;font-size:15.3px;line-height:15.3px;font-family:'Liberation Sans', sans-serif;white-space:pre;">Included</div>
<div style="left:823px;top:210.8px;font-size:15.3px;line-height:15.3px;font-family:'Liberation Sans', sans-serif;white-space:pre;">Included</div>
<div style="left:1063px;top:210.8px;font-size:15.3px;line-height:15.3px;font-family:'Liberation Sans', sans-serif;white-space:pre;">Included</div>
<div style="left:1148px;top:210.8px;font-size:15.3px;line-height:15.3px;font-family:'Liberation Sans', sans-serif;white-space:pre;">Included</div>
<div style="left:1479px;top:208px;width:20px;height:20px;border-radius:50%;background:radial-gradient(circle at 50% 45%, #b4b4b8 0%, #a8a8ac 72%, #85858a 100%)"></div>
<div style="left:1210px;width:400px;text-align:right;top:212.8px;font-size:13.3px;line-height:13.3px;font-family:'Liberation Mono', monospace;white-space:pre;">0.0e+00</div>
<div style="left:1617px;top:208px;width:20px;height:20px;border-radius:50%;background:radial-gradient(circle at 50% 45%, #74cc18 0%, #6cc414 72%, #4a9808 100%)"></div>
<div style="left:1279px;width:400px;text-align:right;top:212.8px;font-size:13.3px;line-height:13.3px;font-family:'Liberation Mono', monospace;white-space:pre;">10.1</div>
<div style="left:-369px;width:400px;text-align:right;top:233.8px;font-size:15.3px;line-height:15.3px;font-family:'Liberation Sans', sans-serif;white-space:pre;">11</div>
<div style="left:-153px;width:400px;text-align:right;top:235.8px;font-size:13.3px;line-height:13.3px;font-family:'Liberation Mono', monospace;white-space:pre;">2005-08-19 01:30:32.000</div>
<div style="left:-59px;width:400px;text-align:right;top:235.8px;font-size:13.3px;line-height:13.3px;font-family:'Liberation Mono', monospace;white-space:pre;">2,794.5</div>
<div style="left:35px;width:400px;text-align:right;top:235.8px;font-size:13.3px;line-height:13.3px;font-family:'Liberation Mono', monospace;white-space:pre;">4,766.8</div>
<div style="left:129px;width:400px;text-align:right;top:235.8px;font-size:13.3px;line-height:13.3px;font-family:'Liberation Mono', monospace;white-space:pre;">1,113.1</div>
<div style="left:536px;top:231px;width:20px;height:20px;border-radius:50%;background:#000"></div>
<div style="left:714px;top:233.8px;font-size:15.3px;line-height:15.3px;font-family:'Liberation Sans', sans-serif;white-space:pre;">Included</div>
<div style="left:823px;top:233.8px;font-size:15.3px;line-height:15.3px;font-family:'Liberation Sans', sans-serif;white-space:pre;">Included</div>
<div style="left:1063px;top:233.8px;font-size:15.3px;line-height:15.3px;font-family:'Liberation Sans', sans-serif;white-space:pre;">Included</div>
<div style="left:1148px;top:233.8px;font-size:15.3px;line-height:15.3px;font-family:'Liberation Sans', sans-serif;white-space:pre;">Included</div>
<div style="left:1479px;top:231px;width:20px;height:20px;border-radius:50%;background:radial-gradient(circle at 50% 45%, #b4b4b8 0%, #a8a8ac 72%, #85858a 100%)"></div>
<div style="left:1210px;width:400px;text-align:right;top:235.8px;font-size:13.3px;line-height:13.3px;font-family:'Liberation Mono', monospace;white-space:pre;">0.0e+00</div>
<svg style="left:1617px;top:231px" width="20" height="20"><path d="M2.5 2.5 L17.5 17.5 M17.5 2.5 L2.5 17.5" stroke="#2a2a2a" stroke-width="2.8" stroke-linecap="round"/></svg>
<div style="left:1279px;width:400px;text-align:right;top:235.8px;font-size:13.3px;line-height:13.3px;font-family:'Liberation Mono', monospace;white-space:pre;">0  </div>
<div style="left:-369px;width:400px;text-align:right;top:256.8px;font-size:15.3px;line-height:15.3px;font-family:'Liberation Sans', sans-serif;white-space:pre;">12</div>
<div style="left:-153px;width:400px;text-align:right;top:258.8px;font-size:13.3px;line-height:13.3px;font-family:'Liberation Mono', monospace;white-space:pre;">2005-08-21 11:03:02.000</div>
<div style="left:-59px;width:400px;text-align:right;top:258.8px;font-size:13.3px;line-height:13.3px;font-family:'Liberation Mono', monospace;white-space:pre;">1,734.7</div>
<div style="left:35px;width:400px;text-align:right;top:258.8px;font-size:13.3px;line-height:13.3px;font-family:'Liberation Mono', monospace;white-space:pre;">4,941.4</div>
<div style="left:129px;width:400px;text-align:right;top:258.8px;font-size:13.3px;line-height:13.3px;font-family:'Liberation Mono', monospace;white-space:pre;">1,373.5</div>
<div style="left:536px;top:254px;width:20px;height:20px;border-radius:50%;background:radial-gradient(circle at 50% 45%, #b0f6fa 0%, #a4f0f6 72%, #78c4cc 100%)"></div>
<div style="left:229px;width:400px;text-align:right;top:258.8px;font-size:13.3px;line-height:13.3px;font-family:'Liberation Mono', monospace;white-space:pre;">-0.53</div>
<div style="left:943px;top:256.8px;font-size:15.3px;line-height:15.3px;font-family:'Liberation Sans', sans-serif;white-space:pre;">Included</div>
<div style="left:1063px;top:256.8px;font-size:15.3px;line-height:15.3px;font-family:'Liberation Sans', sans-serif;white-space:pre;">Included</div>
<div style="left:1148px;top:256.8px;font-size:15.3px;line-height:15.3px;font-family:'Liberation Sans', sans-serif;white-space:pre;">Included</div>
<div style="left:925px;width:400px;text-align:right;top:258.8px;font-size:13.3px;line-height:13.3px;font-family:'Liberation Mono', monospace;white-space:pre;">3.1e+08</div>
<div style="left:1072px;width:400px;text-align:right;top:258.8px;font-size:13.3px;line-height:13.3px;font-family:'Liberation Mono', monospace;white-space:pre;">6.7e+02</div>
<div style="left:1479px;top:254px;width:20px;height:20px;border-radius:50%;background:radial-gradient(circle at 50% 45%, #d0b808 0%, #c8b000 72%, #a08800 100%)"></div>
<div style="left:1210px;width:400px;text-align:right;top:258.8px;font-size:13.3px;line-height:13.3px;font-family:'Liberation Mono', monospace;white-space:pre;">6.6e-02</div>
<div style="left:1617px;top:254px;width:20px;height:20px;border-radius:50%;background:radial-gradient(circle at 50% 45%, #94aef6 0%, #8aa6f2 72%, #6c86d4 100%)"></div>
<div style="left:1279px;width:400px;text-align:right;top:258.8px;font-size:13.3px;line-height:13.3px;font-family:'Liberation Mono', monospace;white-space:pre;">4.4</div>
<div style="left:1361px;width:400px;text-align:right;top:258.8px;font-size:13.3px;line-height:13.3px;font-family:'Liberation Mono', monospace;white-space:pre;">1.0e-02</div>
<div style="left:1441px;width:400px;text-align:right;top:258.8px;font-size:13.3px;line-height:13.3px;font-family:'Liberation Mono', monospace;white-space:pre;">-1.99</div>
<div style="left:-369px;width:400px;text-align:right;top:279.8px;font-size:15.3px;line-height:15.3px;font-family:'Liberation Sans', sans-serif;white-space:pre;">13</div>
<div style="left:-153px;width:400px;text-align:right;top:281.8px;font-size:13.3px;line-height:13.3px;font-family:'Liberation Mono', monospace;white-space:pre;">2005-08-22 18:37:22.000</div>
<div style="left:-59px;width:400px;text-align:right;top:281.8px;font-size:13.3px;line-height:13.3px;font-family:'Liberation Mono', monospace;white-space:pre;">-748.7</div>
<div style="left:35px;width:400px;text-align:right;top:281.8px;font-size:13.3px;line-height:13.3px;font-family:'Liberation Mono', monospace;white-space:pre;">4,307.0</div>
<div style="left:129px;width:400px;text-align:right;top:281.8px;font-size:13.3px;line-height:13.3px;font-family:'Liberation Mono', monospace;white-space:pre;">-1,583.1</div>
<div style="left:536px;top:277px;width:20px;height:20px;border-radius:50%;background:radial-gradient(circle at 50% 45%, #10ea10 0%, #00e000 72%, #00a800 100%)"></div>
<div style="left:229px;width:400px;text-align:right;top:281.8px;font-size:13.3px;line-height:13.3px;font-family:'Liberation Mono', monospace;white-space:pre;">0.96</div>
<div style="left:943px;top:279.8px;font-size:15.3px;line-height:15.3px;font-family:'Liberation Sans', sans-serif;white-space:pre;">Included</div>
<div style="left:1063px;top:279.8px;font-size:15.3px;line-height:15.3px;font-family:'Liberation Sans', sans-serif;white-space:pre;">Included</div>
<div style="left:1148px;top:279.8px;font-size:15.3px;line-height:15.3px;font-family:'Liberation Sans', sans-serif;white-space:pre;">Included</div>
<div style="left:925px;width:400px;text-align:right;top:281.8px;font-size:13.3px;line-height:13.3px;font-family:'Liberation Mono', monospace;white-space:pre;">2.5e+08</div>
<div style="left:1072px;width:400px;text-align:right;top:281.8px;font-size:13.3px;line-height:13.3px;font-family:'Liberation Mono', monospace;white-space:pre;">2.7e+08</div>
<div style="left:1479px;top:277px;width:20px;height:20px;border-radius:50%;background:#000"></div>
<div style="left:1210px;width:400px;text-align:right;top:281.8px;font-size:13.3px;line-height:13.3px;font-family:'Liberation Mono', monospace;white-space:pre;">3.2e+04</div>
<div style="left:1617px;top:277px;width:20px;height:20px;border-radius:50%;background:radial-gradient(circle at 50% 45%, #74cc18 0%, #6cc414 72%, #4a9808 100%)"></div>
<div style="left:1279px;width:400px;text-align:right;top:281.8px;font-size:13.3px;line-height:13.3px;font-family:'Liberation Mono', monospace;white-space:pre;">18.4</div>
<div style="left:1361px;width:400px;text-align:right;top:281.8px;font-size:13.3px;line-height:13.3px;font-family:'Liberation Mono', monospace;white-space:pre;">8.4e-03</div>
<div style="left:1441px;width:400px;text-align:right;top:281.8px;font-size:13.3px;line-height:13.3px;font-family:'Liberation Mono', monospace;white-space:pre;">-2.07</div>
<div style="left:-369px;width:400px;text-align:right;top:302.8px;font-size:15.3px;line-height:15.3px;font-family:'Liberation Sans', sans-serif;white-space:pre;">14</div>
<div style="left:-153px;width:400px;text-align:right;top:304.8px;font-size:13.3px;line-height:13.3px;font-family:'Liberation Mono', monospace;white-space:pre;">2005-12-04 06:08:21.000</div>
<div style="left:-59px;width:400px;text-align:right;top:304.8px;font-size:13.3px;line-height:13.3px;font-family:'Liberation Mono', monospace;white-space:pre;">2,560.0</div>
<div style="left:35px;width:400px;text-align:right;top:304.8px;font-size:13.3px;line-height:13.3px;font-family:'Liberation Mono', monospace;white-space:pre;">4,428.9</div>
<div style="left:129px;width:400px;text-align:right;top:304.8px;font-size:13.3px;line-height:13.3px;font-family:'Liberation Mono', monospace;white-space:pre;">883.9</div>
<div style="left:536px;top:300px;width:20px;height:20px;border-radius:50%;background:radial-gradient(circle at 50% 45%, #10ea10 0%, #00e000 72%, #00a800 100%)"></div>
<div style="left:229px;width:400px;text-align:right;top:304.8px;font-size:13.3px;line-height:13.3px;font-family:'Liberation Mono', monospace;white-space:pre;">0.5 </div>
<div style="left:1063px;top:302.8px;font-size:15.3px;line-height:15.3px;font-family:'Liberation Sans', sans-serif;white-space:pre;">Included</div>
<div style="left:1148px;top:302.8px;font-size:15.3px;line-height:15.3px;font-family:'Liberation Sans', sans-serif;white-space:pre;">Included</div>
<div style="left:925px;width:400px;text-align:right;top:304.8px;font-size:13.3px;line-height:13.3px;font-family:'Liberation Mono', monospace;white-space:pre;">2.7e+09</div>
<div style="left:1072px;width:400px;text-align:right;top:304.8px;font-size:13.3px;line-height:13.3px;font-family:'Liberation Mono', monospace;white-space:pre;">1.8e+05</div>
<div style="left:1479px;top:300px;width:20px;height:20px;border-radius:50%;background:#000"></div>
<div style="left:1210px;width:400px;text-align:right;top:304.8px;font-size:13.3px;line-height:13.3px;font-family:'Liberation Mono', monospace;white-space:pre;">1.9e+00</div>
<div style="left:1617px;top:300px;width:20px;height:20px;border-radius:50%;background:radial-gradient(circle at 50% 45%, #b0f6fa 0%, #a4f0f6 72%, #78c4cc 100%)"></div>
<div style="left:1279px;width:400px;text-align:right;top:304.8px;font-size:13.3px;line-height:13.3px;font-family:'Liberation Mono', monospace;white-space:pre;">8  </div>
<div style="left:1361px;width:400px;text-align:right;top:304.8px;font-size:13.3px;line-height:13.3px;font-family:'Liberation Mono', monospace;white-space:pre;">9.1e-02</div>
<div style="left:1441px;width:400px;text-align:right;top:304.8px;font-size:13.3px;line-height:13.3px;font-family:'Liberation Mono', monospace;white-space:pre;">-1.04</div>
<div style="left:-369px;width:400px;text-align:right;top:325.8px;font-size:15.3px;line-height:15.3px;font-family:'Liberation Sans', sans-serif;white-space:pre;">15</div>
<div style="left:-153px;width:400px;text-align:right;top:327.8px;font-size:13.3px;line-height:13.3px;font-family:'Liberation Mono', monospace;white-space:pre;">2006-04-23 16:12:28.000</div>
<div style="left:-59px;width:400px;text-align:right;top:327.8px;font-size:13.3px;line-height:13.3px;font-family:'Liberation Mono', monospace;white-space:pre;">2,694.7</div>
<div style="left:35px;width:400px;text-align:right;top:327.8px;font-size:13.3px;line-height:13.3px;font-family:'Liberation Mono', monospace;white-space:pre;">4,650.4</div>
<div style="left:129px;width:400px;text-align:right;top:327.8px;font-size:13.3px;line-height:13.3px;font-family:'Liberation Mono', monospace;white-space:pre;">1,015.3</div>
<div style="left:536px;top:323px;width:20px;height:20px;border-radius:50%;background:radial-gradient(circle at 50% 45%, #949498 0%, #8a8a8e 72%, #646468 100%)"></div>
<div style="left:229px;width:400px;text-align:right;top:327.8px;font-size:13.3px;line-height:13.3px;font-family:'Liberation Mono', monospace;white-space:pre;">-2.17</div>
<div style="left:823px;top:325.8px;font-size:15.3px;line-height:15.3px;font-family:'Liberation Sans', sans-serif;white-space:pre;">Included</div>
<div style="left:1063px;top:325.8px;font-size:15.3px;line-height:15.3px;font-family:'Liberation Sans', sans-serif;white-space:pre;">Included</div>
<div style="left:1148px;top:325.8px;font-size:15.3px;line-height:15.3px;font-family:'Liberation Sans', sans-serif;white-space:pre;">Included</div>
<div style="left:925px;width:400px;text-align:right;top:327.8px;font-size:13.3px;line-height:13.3px;font-family:'Liberation Mono', monospace;white-space:pre;">3.3e+06</div>
<div style="left:1072px;width:400px;text-align:right;top:327.8px;font-size:13.3px;line-height:13.3px;font-family:'Liberation Mono', monospace;white-space:pre;">4.5e-01</div>
<div style="left:1479px;top:323px;width:20px;height:20px;border-radius:50%;background:radial-gradient(circle at 50% 45%, #74cc18 0%, #6cc414 72%, #4a9808 100%)"></div>
<div style="left:1210px;width:400px;text-align:right;top:327.8px;font-size:13.3px;line-height:13.3px;font-family:'Liberation Mono', monospace;white-space:pre;">4.0e-03</div>
<svg style="left:1617px;top:323px" width="20" height="20"><path d="M2.5 2.5 L17.5 17.5 M17.5 2.5 L2.5 17.5" stroke="#2a2a2a" stroke-width="2.8" stroke-linecap="round"/></svg>
<div style="left:1279px;width:400px;text-align:right;top:327.8px;font-size:13.3px;line-height:13.3px;font-family:'Liberation Mono', monospace;white-space:pre;">0  </div>
<div style="left:1361px;width:400px;text-align:right;top:327.8px;font-size:13.3px;line-height:13.3px;font-family:'Liberation Mono', monospace;white-space:pre;">1.1e-04</div>
<div style="left:1441px;width:400px;text-align:right;top:327.8px;font-size:13.3px;line-height:13.3px;font-family:'Liberation Mono', monospace;white-space:pre;">-3.96</div>
<div style="left:-369px;width:400px;text-align:right;top:348.8px;font-size:15.3px;line-height:15.3px;font-family:'Liberation Sans', sans-serif;white-space:pre;">16</div>
<div style="left:-153px;width:400px;text-align:right;top:350.8px;font-size:13.3px;line-height:13.3px;font-family:'Liberation Mono', monospace;white-space:pre;">2007-02-20 11:02:41.000</div>
<div style="left:-59px;width:400px;text-align:right;top:350.8px;font-size:13.3px;line-height:13.3px;font-family:'Liberation Mono', monospace;white-space:pre;">2,815.5</div>
<div style="left:35px;width:400px;text-align:right;top:350.8px;font-size:13.3px;line-height:13.3px;font-family:'Liberation Mono', monospace;white-space:pre;">4,791.6</div>
<div style="left:129px;width:400px;text-align:right;top:350.8px;font-size:13.3px;line-height:13.3px;font-family:'Liberation Mono', monospace;white-space:pre;">1,075.6</div>
<div style="left:536px;top:346px;width:20px;height:20px;border-radius:50%;background:radial-gradient(circle at 50% 45%, #d8d8dc 0%, #d0d0d4 72%, #a4a4a8 100%)"></div>
<div style="left:229px;width:400px;text-align:right;top:350.8px;font-size:13.3px;line-height:13.3px;font-family:'Liberation Mono', monospace;white-space:pre;">-3.45</div>
<div style="left:823px;top:348.8px;font-size:15.3px;line-height:15.3px;font-family:'Liberation Sans', sans-serif;white-space:pre;">Included</div>
<div style="left:1063px;top:348.8px;font-size:15.3px;line-height:15.3px;font-family:'Liberation Sans', sans-serif;white-space:pre;">Included</div>
<div style="left:1148px;top:348.8px;font-size:15.3px;line-height:15.3px;font-family:'Liberation Sans', sans-serif;white-space:pre;">Included</div>
<div style="left:925px;width:400px;text-align:right;top:350.8px;font-size:13.3px;line-height:13.3px;font-family:'Liberation Mono', monospace;white-space:pre;">6.9e+04</div>
<div style="left:1072px;width:400px;text-align:right;top:350.8px;font-size:13.3px;line-height:13.3px;font-family:'Liberation Mono', monospace;white-space:pre;">2.4e-03</div>
<div style="left:1479px;top:346px;width:20px;height:20px;border-radius:50%;background:radial-gradient(circle at 50% 45%, #b0f6fa 0%, #a4f0f6 72%, #78c4cc 100%)"></div>
<div style="left:1210px;width:400px;text-align:right;top:350.8px;font-size:13.3px;line-height:13.3px;font-family:'Liberation Mono', monospace;white-space:pre;">1.0e-03</div>
<svg style="left:1617px;top:346px" width="20" height="20"><path d="M2.5 2.5 L17.5 17.5 M17.5 2.5 L2.5 17.5" stroke="#2a2a2a" stroke-width="2.8" stroke-linecap="round"/></svg>
<div style="left:1279px;width:400px;text-align:right;top:350.8px;font-size:13.3px;line-height:13.3px;font-family:'Liberation Mono', monospace;white-space:pre;">0  </div>
<div style="left:1361px;width:400px;text-align:right;top:350.8px;font-size:13.3px;line-height:13.3px;font-family:'Liberation Mono', monospace;white-space:pre;">2.3e-06</div>
<div style="left:1441px;width:400px;text-align:right;top:350.8px;font-size:13.3px;line-height:13.3px;font-family:'Liberation Mono', monospace;white-space:pre;">-5.64</div>
<div style="left:-369px;width:400px;text-align:right;top:371.8px;font-size:15.3px;line-height:15.3px;font-family:'Liberation Sans', sans-serif;white-space:pre;">17</div>
<div style="left:-153px;width:400px;text-align:right;top:373.8px;font-size:13.3px;line-height:13.3px;font-family:'Liberation Mono', monospace;white-space:pre;">2007-02-20 15:04:28.000</div>
<div style="left:-59px;width:400px;text-align:right;top:373.8px;font-size:13.3px;line-height:13.3px;font-family:'Liberation Mono', monospace;white-space:pre;">2,833.7</div>
<div style="left:35px;width:400px;text-align:right;top:373.8px;font-size:13.3px;line-height:13.3px;font-family:'Liberation Mono', monospace;white-space:pre;">4,735.1</div>
<div style="left:129px;width:400px;text-align:right;top:373.8px;font-size:13.3px;line-height:13.3px;font-family:'Liberation Mono', monospace;white-space:pre;">1,072.6</div>
<div style="left:536px;top:369px;width:20px;height:20px;border-radius:50%;background:radial-gradient(circle at 50% 45%, #d8d8dc 0%, #d0d0d4 72%, #a4a4a8 100%)"></div>
<div style="left:229px;width:400px;text-align:right;top:373.8px;font-size:13.3px;line-height:13.3px;font-family:'Liberation Mono', monospace;white-space:pre;">-3.64</div>
<div style="left:823px;top:371.8px;font-size:15.3px;line-height:15.3px;font-family:'Liberation Sans', sans-serif;white-space:pre;">Included</div>
<div style="left:1063px;top:371.8px;font-size:15.3px;line-height:15.3px;font-family:'Liberation Sans', sans-serif;white-space:pre;">Included</div>
<div style="left:1148px;top:371.8px;font-size:15.3px;line-height:15.3px;font-family:'Liberation Sans', sans-serif;white-space:pre;">Included</div>
<div style="left:925px;width:400px;text-align:right;top:373.8px;font-size:13.3px;line-height:13.3px;font-family:'Liberation Mono', monospace;white-space:pre;">5.4e+04</div>
<div style="left:1072px;width:400px;text-align:right;top:373.8px;font-size:13.3px;line-height:13.3px;font-family:'Liberation Mono', monospace;white-space:pre;">6.6e-04</div>
<div style="left:1479px;top:369px;width:20px;height:20px;border-radius:50%;background:radial-gradient(circle at 50% 45%, #94aef6 0%, #8aa6f2 72%, #6c86d4 100%)"></div>
<div style="left:1210px;width:400px;text-align:right;top:373.8px;font-size:13.3px;line-height:13.3px;font-family:'Liberation Mono', monospace;white-space:pre;">3.7e-04</div>
<svg style="left:1617px;top:369px" width="20" height="20"><path d="M2.5 2.5 L17.5 17.5 M17.5 2.5 L2.5 17.5" stroke="#2a2a2a" stroke-width="2.8" stroke-linecap="round"/></svg>
<div style="left:1279px;width:400px;text-align:right;top:373.8px;font-size:13.3px;line-height:13.3px;font-family:'Liberation Mono', monospace;white-space:pre;">0  </div>
<div style="left:1361px;width:400px;text-align:right;top:373.8px;font-size:13.3px;line-height:13.3px;font-family:'Liberation Mono', monospace;white-space:pre;">1.8e-06</div>
<div style="left:1441px;width:400px;text-align:right;top:373.8px;font-size:13.3px;line-height:13.3px;font-family:'Liberation Mono', monospace;white-space:pre;">-5.74</div>
<div style="left:-369px;width:400px;text-align:right;top:394.8px;font-size:15.3px;line-height:15.3px;font-family:'Liberation Sans', sans-serif;white-space:pre;">18</div>
<div style="left:-153px;width:400px;text-align:right;top:396.8px;font-size:13.3px;line-height:13.3px;font-family:'Liberation Mono', monospace;white-space:pre;">2007-02-20 15:11:30.000</div>
<div style="left:-59px;width:400px;text-align:right;top:396.8px;font-size:13.3px;line-height:13.3px;font-family:'Liberation Mono', monospace;white-space:pre;">2,808.9</div>
<div style="left:35px;width:400px;text-align:right;top:396.8px;font-size:13.3px;line-height:13.3px;font-family:'Liberation Mono', monospace;white-space:pre;">4,752.3</div>
<div style="left:129px;width:400px;text-align:right;top:396.8px;font-size:13.3px;line-height:13.3px;font-family:'Liberation Mono', monospace;white-space:pre;">1,085.5</div>
<div style="left:536px;top:392px;width:20px;height:20px;border-radius:50%;background:radial-gradient(circle at 50% 45%, #d8d8dc 0%, #d0d0d4 72%, #a4a4a8 100%)"></div>
<div style="left:229px;width:400px;text-align:right;top:396.8px;font-size:13.3px;line-height:13.3px;font-family:'Liberation Mono', monospace;white-space:pre;">-3.2 </div>
<div style="left:823px;top:394.8px;font-size:15.3px;line-height:15.3px;font-family:'Liberation Sans', sans-serif;white-space:pre;">Included</div>
<div style="left:1063px;top:394.8px;font-size:15.3px;line-height:15.3px;font-family:'Liberation Sans', sans-serif;white-space:pre;">Included</div>
<div style="left:1148px;top:394.8px;font-size:15.3px;line-height:15.3px;font-family:'Liberation Sans', sans-serif;white-space:pre;">Included</div>
<div style="left:925px;width:400px;text-align:right;top:396.8px;font-size:13.3px;line-height:13.3px;font-family:'Liberation Mono', monospace;white-space:pre;">1.2e+05</div>
<div style="left:1072px;width:400px;text-align:right;top:396.8px;font-size:13.3px;line-height:13.3px;font-family:'Liberation Mono', monospace;white-space:pre;">8.5e-03</div>
<div style="left:1479px;top:392px;width:20px;height:20px;border-radius:50%;background:radial-gradient(circle at 50% 45%, #b0f6fa 0%, #a4f0f6 72%, #78c4cc 100%)"></div>
<div style="left:1210px;width:400px;text-align:right;top:396.8px;font-size:13.3px;line-height:13.3px;font-family:'Liberation Mono', monospace;white-space:pre;">2.1e-03</div>
<svg style="left:1617px;top:392px" width="20" height="20"><path d="M2.5 2.5 L17.5 17.5 M17.5 2.5 L2.5 17.5" stroke="#2a2a2a" stroke-width="2.8" stroke-linecap="round"/></svg>
<div style="left:1279px;width:400px;text-align:right;top:396.8px;font-size:13.3px;line-height:13.3px;font-family:'Liberation Mono', monospace;white-space:pre;">0  </div>
<div style="left:1361px;width:400px;text-align:right;top:396.8px;font-size:13.3px;line-height:13.3px;font-family:'Liberation Mono', monospace;white-space:pre;">4.1e-06</div>
<div style="left:1441px;width:400px;text-align:right;top:396.8px;font-size:13.3px;line-height:13.3px;font-family:'Liberation Mono', monospace;white-space:pre;">-5.39</div>
<div style="left:-369px;width:400px;text-align:right;top:417.8px;font-size:15.3px;line-height:15.3px;font-family:'Liberation Sans', sans-serif;white-space:pre;">19</div>
<div style="left:-153px;width:400px;text-align:right;top:419.8px;font-size:13.3px;line-height:13.3px;font-family:'Liberation Mono', monospace;white-space:pre;">2007-02-20 15:31:56.000</div>
<div style="left:-59px;width:400px;text-align:right;top:419.8px;font-size:13.3px;line-height:13.3px;font-family:'Liberation Mono', monospace;white-space:pre;">2,803.5</div>
<div style="left:35px;width:400px;text-align:right;top:419.8px;font-size:13.3px;line-height:13.3px;font-family:'Liberation Mono', monospace;white-space:pre;">4,762.3</div>
<div style="left:129px;width:400px;text-align:right;top:419.8px;font-size:13.3px;line-height:13.3px;font-family:'Liberation Mono', monospace;white-space:pre;">1,083.6</div>
<div style="left:536px;top:415px;width:20px;height:20px;border-radius:50%;background:radial-gradient(circle at 50% 45%, #d8d8dc 0%, #d0d0d4 72%, #a4a4a8 100%)"></div>
<div style="left:229px;width:400px;text-align:right;top:419.8px;font-size:13.3px;line-height:13.3px;font-family:'Liberation Mono', monospace;white-space:pre;">-3.69</div>
<div style="left:823px;top:417.8px;font-size:15.3px;line-height:15.3px;font-family:'Liberation Sans', sans-serif;white-space:pre;">Included</div>
<div style="left:1063px;top:417.8px;font-size:15.3px;line-height:15.3px;font-family:'Liberation Sans', sans-serif;white-space:pre;">Included</div>
<div style="left:1148px;top:417.8px;font-size:15.3px;line-height:15.3px;font-family:'Liberation Sans', sans-serif;white-space:pre;">Included</div>
<div style="left:925px;width:400px;text-align:right;top:419.8px;font-size:13.3px;line-height:13.3px;font-family:'Liberation Mono', monospace;white-space:pre;">3.7e+04</div>
<div style="left:1072px;width:400px;text-align:right;top:419.8px;font-size:13.3px;line-height:13.3px;font-family:'Liberation Mono', monospace;white-space:pre;">7.2e-04</div>
<div style="left:1479px;top:415px;width:20px;height:20px;border-radius:50%;background:radial-gradient(circle at 50% 45%, #94aef6 0%, #8aa6f2 72%, #6c86d4 100%)"></div>
<div style="left:1210px;width:400px;text-align:right;top:419.8px;font-size:13.3px;line-height:13.3px;font-family:'Liberation Mono', monospace;white-space:pre;">5.9e-04</div>
<div style="left:1617px;top:415px;width:20px;height:20px;border-radius:50%;background:radial-gradient(circle at 50% 45%, #94aef6 0%, #8aa6f2 72%, #6c86d4 100%)"></div>
<div style="left:1279px;width:400px;text-align:right;top:419.8px;font-size:13.3px;line-height:13.3px;font-family:'Liberation Mono', monospace;white-space:pre;">0.1</div>
<div style="left:1361px;width:400px;text-align:right;top:419.8px;font-size:13.3px;line-height:13.3px;font-family:'Liberation Mono', monospace;white-space:pre;">1.2e-06</div>
<div style="left:1441px;width:400px;text-align:right;top:419.8px;font-size:13.3px;line-height:13.3px;font-family:'Liberation Mono', monospace;white-space:pre;">-5.91</div>
<div style="left:-369px;width:400px;text-align:right;top:440.8px;font-size:15.3px;line-height:15.3px;font-family:'Liberation Sans', sans-serif;white-space:pre;">20</div>
<div style="left:-153px;width:400px;text-align:right;top:442.8px;font-size:13.3px;line-height:13.3px;font-family:'Liberation Mono', monospace;white-space:pre;">2007-02-20 15:35:00.000</div>
<div style="left:-59px;width:400px;text-align:right;top:442.8px;font-size:13.3px;line-height:13.3px;font-family:'Liberation Mono', monospace;white-space:pre;">2,838.8</div>
<div style="left:35px;width:400px;text-align:right;top:442.8px;font-size:13.3px;line-height:13.3px;font-family:'Liberation Mono', monospace;white-space:pre;">4,739.2</div>
<div style="left:129px;width:400px;text-align:right;top:442.8px;font-size:13.3px;line-height:13.3px;font-family:'Liberation Mono', monospace;white-space:pre;">1,076.3</div>
<div style="left:536px;top:438px;width:20px;height:20px;border-radius:50%;background:radial-gradient(circle at 50% 45%, #d8d8dc 0%, #d0d0d4 72%, #a4a4a8 100%)"></div>
<div style="left:229px;width:400px;text-align:right;top:442.8px;font-size:13.3px;line-height:13.3px;font-family:'Liberation Mono', monospace;white-space:pre;">-3.39</div>
<div style="left:823px;top:440.8px;font-size:15.3px;line-height:15.3px;font-family:'Liberation Sans', sans-serif;white-space:pre;">Included</div>
<div style="left:1063px;top:440.8px;font-size:15.3px;line-height:15.3px;font-family:'Liberation Sans', sans-serif;white-space:pre;">Included</div>
<div style="left:1148px;top:440.8px;font-size:15.3px;line-height:15.3px;font-family:'Liberation Sans', sans-serif;white-space:pre;">Included</div>
<div style="left:925px;width:400px;text-align:right;top:442.8px;font-size:13.3px;line-height:13.3px;font-family:'Liberation Mono', monospace;white-space:pre;">9.2e+04</div>
<div style="left:1072px;width:400px;text-align:right;top:442.8px;font-size:13.3px;line-height:13.3px;font-family:'Liberation Mono', monospace;white-space:pre;">2.5e-03</div>
<div style="left:1479px;top:438px;width:20px;height:20px;border-radius:50%;background:radial-gradient(circle at 50% 45%, #94aef6 0%, #8aa6f2 72%, #6c86d4 100%)"></div>
<div style="left:1210px;width:400px;text-align:right;top:442.8px;font-size:13.3px;line-height:13.3px;font-family:'Liberation Mono', monospace;white-space:pre;">8.2e-04</div>
<svg style="left:1617px;top:438px" width="20" height="20"><path d="M2.5 2.5 L17.5 17.5 M17.5 2.5 L2.5 17.5" stroke="#2a2a2a" stroke-width="2.8" stroke-linecap="round"/></svg>
<div style="left:1279px;width:400px;text-align:right;top:442.8px;font-size:13.3px;line-height:13.3px;font-family:'Liberation Mono', monospace;white-space:pre;">0  </div>
<div style="left:1361px;width:400px;text-align:right;top:442.8px;font-size:13.3px;line-height:13.3px;font-family:'Liberation Mono', monospace;white-space:pre;">3.1e-06</div>
<div style="left:1441px;width:400px;text-align:right;top:442.8px;font-size:13.3px;line-height:13.3px;font-family:'Liberation Mono', monospace;white-space:pre;">-5.51</div>
<div style="left:-369px;width:400px;text-align:right;top:463.8px;font-size:15.3px;line-height:15.3px;font-family:'Liberation Sans', sans-serif;white-space:pre;">21</div>
<div style="left:-153px;width:400px;text-align:right;top:465.8px;font-size:13.3px;line-height:13.3px;font-family:'Liberation Mono', monospace;white-space:pre;">2007-07-21 10:14:04.000</div>
<div style="left:-59px;width:400px;text-align:right;top:465.8px;font-size:13.3px;line-height:13.3px;font-family:'Liberation Mono', monospace;white-space:pre;">2,800.3</div>
<div style="left:35px;width:400px;text-align:right;top:465.8px;font-size:13.3px;line-height:13.3px;font-family:'Liberation Mono', monospace;white-space:pre;">4,628.7</div>
<div style="left:129px;width:400px;text-align:right;top:465.8px;font-size:13.3px;line-height:13.3px;font-family:'Liberation Mono', monospace;white-space:pre;">1,069.7</div>
<div style="left:536px;top:461px;width:20px;height:20px;border-radius:50%;background:radial-gradient(circle at 50% 45%, #527ef2 0%, #4a78f0 72%, #3458c4 100%)"></div>
<div style="left:229px;width:400px;text-align:right;top:465.8px;font-size:13.3px;line-height:13.3px;font-family:'Liberation Mono', monospace;white-space:pre;">-1.57</div>
<div style="left:823px;top:463.8px;font-size:15.3px;line-height:15.3px;font-family:'Liberation Sans', sans-serif;white-space:pre;">Included</div>
<div style="left:1063px;top:463.8px;font-size:15.3px;line-height:15.3px;font-family:'Liberation Sans', sans-serif;white-space:pre;">Included</div>
<div style="left:1148px;top:463.8px;font-size:15.3px;line-height:15.3px;font-family:'Liberation Sans', sans-serif;white-space:pre;">Included</div>
<div style="left:925px;width:400px;text-align:right;top:465.8px;font-size:13.3px;line-height:13.3px;font-family:'Liberation Mono', monospace;white-space:pre;">3.9e+07</div>
<div style="left:1072px;width:400px;text-align:right;top:465.8px;font-size:13.3px;line-height:13.3px;font-family:'Liberation Mono', monospace;white-space:pre;">2.0e+00</div>
<div style="left:1479px;top:461px;width:20px;height:20px;border-radius:50%;background:radial-gradient(circle at 50% 45%, #b0f6fa 0%, #a4f0f6 72%, #78c4cc 100%)"></div>
<div style="left:1210px;width:400px;text-align:right;top:465.8px;font-size:13.3px;line-height:13.3px;font-family:'Liberation Mono', monospace;white-space:pre;">1.6e-03</div>
<svg style="left:1617px;top:461px" width="20" height="20"><path d="M2.5 2.5 L17.5 17.5 M17.5 2.5 L2.5 17.5" stroke="#2a2a2a" stroke-width="2.8" stroke-linecap="round"/></svg>
<div style="left:1279px;width:400px;text-align:right;top:465.8px;font-size:13.3px;line-height:13.3px;font-family:'Liberation Mono', monospace;white-space:pre;">0  </div>
<div style="left:1361px;width:400px;text-align:right;top:465.8px;font-size:13.3px;line-height:13.3px;font-family:'Liberation Mono', monospace;white-space:pre;">1.3e-03</div>
<div style="left:1441px;width:400px;text-align:right;top:465.8px;font-size:13.3px;line-height:13.3px;font-family:'Liberation Mono', monospace;white-space:pre;">-2.88</div>
<div style="left:-369px;width:400px;text-align:right;top:486.8px;font-size:15.3px;line-height:15.3px;font-family:'Liberation Sans', sans-serif;white-space:pre;">22</div>
<div style="left:-153px;width:400px;text-align:right;top:488.8px;font-size:13.3px;line-height:13.3px;font-family:'Liberation Mono', monospace;white-space:pre;">2007-12-14 04:13:09.000</div>
<div style="left:-59px;width:400px;text-align:right;top:488.8px;font-size:13.3px;line-height:13.3px;font-family:'Liberation Mono', monospace;white-space:pre;">1,919.1</div>
<div style="left:35px;width:400px;text-align:right;top:488.8px;font-size:13.3px;line-height:13.3px;font-family:'Liberation Mono', monospace;white-space:pre;">4,728.8</div>
<div style="left:129px;width:400px;text-align:right;top:488.8px;font-size:13.3px;line-height:13.3px;font-family:'Liberation Mono', monospace;white-space:pre;">1,033.9</div>
<div style="left:536px;top:484px;width:20px;height:20px;border-radius:50%;background:radial-gradient(circle at 50% 45%, #b0f6fa 0%, #a4f0f6 72%, #78c4cc 100%)"></div>
<div style="left:229px;width:400px;text-align:right;top:488.8px;font-size:13.3px;line-height:13.3px;font-family:'Liberation Mono', monospace;white-space:pre;">-0.78</div>
<div style="left:943px;top:486.8px;font-size:15.3px;line-height:15.3px;font-family:'Liberation Sans', sans-serif;white-space:pre;">Included</div>
<div style="left:1063px;top:486.8px;font-size:15.3px;line-height:15.3px;font-family:'Liberation Sans', sans-serif;white-space:pre;">Included</div>
<div style="left:1148px;top:486.8px;font-size:15.3px;line-height:15.3px;font-family:'Liberation Sans', sans-serif;white-space:pre;">Included</div>
<div style="left:925px;width:400px;text-align:right;top:488.8px;font-size:13.3px;line-height:13.3px;font-family:'Liberation Mono', monospace;white-space:pre;">4.2e+08</div>
<div style="left:1072px;width:400px;text-align:right;top:488.8px;font-size:13.3px;line-height:13.3px;font-family:'Liberation Mono', monospace;white-space:pre;">5.4e+01</div>
<div style="left:1479px;top:484px;width:20px;height:20px;border-radius:50%;background:radial-gradient(circle at 50% 45%, #74cc18 0%, #6cc414 72%, #4a9808 100%)"></div>
<div style="left:1210px;width:400px;text-align:right;top:488.8px;font-size:13.3px;line-height:13.3px;font-family:'Liberation Mono', monospace;white-space:pre;">3.8e-03</div>
<div style="left:1617px;top:484px;width:20px;height:20px;border-radius:50%;background:radial-gradient(circle at 50% 45%, #eeea10 0%, #e0dc00 72%, #b0aa00 100%)"></div>
<div style="left:1279px;width:400px;text-align:right;top:488.8px;font-size:13.3px;line-height:13.3px;font-family:'Liberation Mono', monospace;white-space:pre;">21.5</div>
<div style="left:1361px;width:400px;text-align:right;top:488.8px;font-size:13.3px;line-height:13.3px;font-family:'Liberation Mono', monospace;white-space:pre;">1.4e-02</div>
<div style="left:1441px;width:400px;text-align:right;top:488.8px;font-size:13.3px;line-height:13.3px;font-family:'Liberation Mono', monospace;white-space:pre;">-1.86</div>
<div style="left:-369px;width:400px;text-align:right;top:509.8px;font-size:15.3px;line-height:15.3px;font-family:'Liberation Sans', sans-serif;white-space:pre;">23</div>
<div style="left:-153px;width:400px;text-align:right;top:511.8px;font-size:13.3px;line-height:13.3px;font-family:'Liberation Mono', monospace;white-space:pre;">2008-03-19 23:41:21.000</div>
<div style="left:-59px;width:400px;text-align:right;top:511.8px;font-size:13.3px;line-height:13.3px;font-family:'Liberation Mono', monospace;white-space:pre;">3,418.9</div>
<div style="left:35px;width:400px;text-align:right;top:511.8px;font-size:13.3px;line-height:13.3px;font-family:'Liberation Mono', monospace;white-space:pre;">4,358.4</div>
<div style="left:129px;width:400px;text-align:right;top:511.8px;font-size:13.3px;line-height:13.3px;font-family:'Liberation Mono', monospace;white-space:pre;">814.5</div>
<div style="left:536px;top:507px;width:20px;height:20px;border-radius:50%;background:radial-gradient(circle at 50% 45%, #10ea10 0%, #00e000 72%, #00a800 100%)"></div>
<div style="left:229px;width:400px;text-align:right;top:511.8px;font-size:13.3px;line-height:13.3px;font-family:'Liberation Mono', monospace;white-space:pre;">0.21</div>
<div style="left:943px;top:509.8px;font-size:15.3px;line-height:15.3px;font-family:'Liberation Sans', sans-serif;white-space:pre;">Included</div>
<div style="left:1063px;top:509.8px;font-size:15.3px;line-height:15.3px;font-family:'Liberation Sans', sans-serif;white-space:pre;">Included</div>
<div style="left:1148px;top:509.8px;font-size:15.3px;line-height:15.3px;font-family:'Liberation Sans', sans-serif;white-space:pre;">Included</div>
<div style="left:925px;width:400px;text-align:right;top:511.8px;font-size:13.3px;line-height:13.3px;font-family:'Liberation Mono', monospace;white-space:pre;">1.6e+09</div>
<div style="left:1072px;width:400px;text-align:right;top:511.8px;font-size:13.3px;line-height:13.3px;font-family:'Liberation Mono', monospace;white-space:pre;">3.1e+04</div>
<div style="left:1479px;top:507px;width:20px;height:20px;border-radius:50%;background:radial-gradient(circle at 50% 45%, #b00890 0%, #a00080 72%, #780060 100%)"></div>
<div style="left:1210px;width:400px;text-align:right;top:511.8px;font-size:13.3px;line-height:13.3px;font-family:'Liberation Mono', monospace;white-space:pre;">5.8e-01</div>
<div style="left:1617px;top:507px;width:20px;height:20px;border-radius:50%;background:radial-gradient(circle at 50% 45%, #eeea10 0%, #e0dc00 72%, #b0aa00 100%)"></div>
<div style="left:1279px;width:400px;text-align:right;top:511.8px;font-size:13.3px;line-height:13.3px;font-family:'Liberation Mono', monospace;white-space:pre;">22.9</div>
<div style="left:1361px;width:400px;text-align:right;top:511.8px;font-size:13.3px;line-height:13.3px;font-family:'Liberation Mono', monospace;white-space:pre;">5.5e-02</div>
<div style="left:1441px;width:400px;text-align:right;top:511.8px;font-size:13.3px;line-height:13.3px;font-family:'Liberation Mono', monospace;white-space:pre;">-1.26</div>
<div style="left:-369px;width:400px;text-align:right;top:532.8px;font-size:15.3px;line-height:15.3px;font-family:'Liberation Sans', sans-serif;white-space:pre;">24</div>
<div style="left:-153px;width:400px;text-align:right;top:534.8px;font-size:13.3px;line-height:13.3px;font-family:'Liberation Mono', monospace;white-space:pre;">2008-03-20 05:29:03.000</div>
<div style="left:-59px;width:400px;text-align:right;top:534.8px;font-size:13.3px;line-height:13.3px;font-family:'Liberation Mono', monospace;white-space:pre;">358,097,7…</div>
<div style="left:35px;width:400px;text-align:right;top:534.8px;font-size:13.3px;line-height:13.3px;font-family:'Liberation Mono', monospace;white-space:pre;">-639,775,…</div>
<div style="left:129px;width:400px;text-align:right;top:534.8px;font-size:13.3px;line-height:13.3px;font-family:'Liberation Mono', monospace;white-space:pre;">-431,456,…</div>
<div style="left:536px;top:530px;width:20px;height:20px;border-radius:50%;background:#000"></div>
<div style="left:714px;top:532.8px;font-size:15.3px;line-height:15.3px;font-family:'Liberation Sans', sans-serif;white-space:pre;">Included</div>
<div style="left:823px;top:532.8px;font-size:15.3px;line-height:15.3px;font-family:'Liberation Sans', sans-serif;white-space:pre;">Included</div>
<div style="left:943px;top:532.8px;font-size:15.3px;line-height:15.3px;font-family:'Liberation Sans', sans-serif;white-space:pre;">Included</div>
<div style="left:1063px;top:532.8px;font-size:15.3px;line-height:15.3px;font-family:'Liberation Sans', sans-serif;white-space:pre;">Included</div>
<div style="left:1148px;top:532.8px;font-size:15.3px;line-height:15.3px;font-family:'Liberation Sans', sans-serif;white-space:pre;">Included</div>
<svg style="left:1479px;top:530px" width="20" height="20"><circle cx="10" cy="10" r="9.5" fill="#000"/><path d="M4 4 L16 16 M16 4 L4 16" stroke="#fff" stroke-width="1.5"/><path d="M4 4 L16 16 M16 4 L4 16" stroke="#000" stroke-width="0.5"/></svg>
<div style="left:1617px;top:530px;width:20px;height:20px;border-radius:50%;background:radial-gradient(circle at 50% 45%, #eeea10 0%, #e0dc00 72%, #b0aa00 100%)"></div>
<div style="left:1279px;width:400px;text-align:right;top:534.8px;font-size:13.3px;line-height:13.3px;font-family:'Liberation Mono', monospace;white-space:pre;">28  </div>
<div style="left:-369px;width:400px;text-align:right;top:555.8px;font-size:15.3px;line-height:15.3px;font-family:'Liberation Sans', sans-serif;white-space:pre;">25</div>
<div style="left:-153px;width:400px;text-align:right;top:557.8px;font-size:13.3px;line-height:13.3px;font-family:'Liberation Mono', monospace;white-space:pre;">2008-03-29 09:55:12.000</div>
<div style="left:-59px;width:400px;text-align:right;top:557.8px;font-size:13.3px;line-height:13.3px;font-family:'Liberation Mono', monospace;white-space:pre;">2,347.1</div>
<div style="left:35px;width:400px;text-align:right;top:557.8px;font-size:13.3px;line-height:13.3px;font-family:'Liberation Mono', monospace;white-space:pre;">4,054.5</div>
<div style="left:129px;width:400px;text-align:right;top:557.8px;font-size:13.3px;line-height:13.3px;font-family:'Liberation Mono', monospace;white-space:pre;">1,228.2</div>
<div style="left:536px;top:553px;width:20px;height:20px;border-radius:50%;background:radial-gradient(circle at 50% 45%, #b0f6fa 0%, #a4f0f6 72%, #78c4cc 100%)"></div>
<div style="left:229px;width:400px;text-align:right;top:557.8px;font-size:13.3px;line-height:13.3px;font-family:'Liberation Mono', monospace;white-space:pre;">-0.96</div>
<div style="left:943px;top:555.8px;font-size:15.3px;line-height:15.3px;font-family:'Liberation Sans', sans-serif;white-space:pre;">Included</div>
<div style="left:1063px;top:555.8px;font-size:15.3px;line-height:15.3px;font-family:'Liberation Sans', sans-serif;white-space:pre;">Included</div>
<div style="left:1148px;top:555.8px;font-size:15.3px;line-height:15.3px;font-family:'Liberation Sans', sans-serif;white-space:pre;">Included</div>
<div style="left:925px;width:400px;text-align:right;top:557.8px;font-size:13.3px;line-height:13.3px;font-family:'Liberation Mono', monospace;white-space:pre;">5.2e+08</div>
<div style="left:1072px;width:400px;text-align:right;top:557.8px;font-size:13.3px;line-height:13.3px;font-family:'Liberation Mono', monospace;white-space:pre;">8.8e+00</div>
<div style="left:1479px;top:553px;width:20px;height:20px;border-radius:50%;background:radial-gradient(circle at 50% 45%, #94aef6 0%, #8aa6f2 72%, #6c86d4 100%)"></div>
<div style="left:1210px;width:400px;text-align:right;top:557.8px;font-size:13.3px;line-height:13.3px;font-family:'Liberation Mono', monospace;white-space:pre;">5.1e-04</div>
<div style="left:1617px;top:553px;width:20px;height:20px;border-radius:50%;background:radial-gradient(circle at 50% 45%, #eeea10 0%, #e0dc00 72%, #b0aa00 100%)"></div>
<div style="left:1279px;width:400px;text-align:right;top:557.8px;font-size:13.3px;line-height:13.3px;font-family:'Liberation Mono', monospace;white-space:pre;">26.2</div>
<div style="left:1361px;width:400px;text-align:right;top:557.8px;font-size:13.3px;line-height:13.3px;font-family:'Liberation Mono', monospace;white-space:pre;">1.7e-02</div>
<div style="left:1441px;width:400px;text-align:right;top:557.8px;font-size:13.3px;line-height:13.3px;font-family:'Liberation Mono', monospace;white-space:pre;">-1.76</div>
<div style="left:-369px;width:400px;text-align:right;top:578.8px;font-size:15.3px;line-height:15.3px;font-family:'Liberation Sans', sans-serif;white-space:pre;">26</div>
<div style="left:-153px;width:400px;text-align:right;top:580.8px;font-size:13.3px;line-height:13.3px;font-family:'Liberation Mono', monospace;white-space:pre;">2008-04-09 23:49:59.000</div>
<div style="left:-59px;width:400px;text-align:right;top:580.8px;font-size:13.3px;line-height:13.3px;font-family:'Liberation Mono', monospace;white-space:pre;">2,203.0</div>
<div style="left:35px;width:400px;text-align:right;top:580.8px;font-size:13.3px;line-height:13.3px;font-family:'Liberation Mono', monospace;white-space:pre;">4,631.2</div>
<div style="left:129px;width:400px;text-align:right;top:580.8px;font-size:13.3px;line-height:13.3px;font-family:'Liberation Mono', monospace;white-space:pre;">758.4</div>
<div style="left:536px;top:576px;width:20px;height:20px;border-radius:50%;background:radial-gradient(circle at 50% 45%, #b0f6fa 0%, #a4f0f6 72%, #78c4cc 100%)"></div>
<div style="left:229px;width:400px;text-align:right;top:580.8px;font-size:13.3px;line-height:13.3px;font-family:'Liberation Mono', monospace;white-space:pre;">-1   </div>
<div style="left:943px;top:578.8px;font-size:15.3px;line-height:15.3px;font-family:'Liberation Sans', sans-serif;white-space:pre;">Included</div>
<div style="left:1063px;top:578.8px;font-size:15.3px;line-height:15.3px;font-family:'Liberation Sans', sans-serif;white-space:pre;">Included</div>
<div style="left:1148px;top:578.8px;font-size:15.3px;line-height:15.3px;font-family:'Liberation Sans', sans-serif;white-space:pre;">Included</div>
<div style="left:925px;width:400px;text-align:right;top:580.8px;font-size:13.3px;line-height:13.3px;font-family:'Liberation Mono', monospace;white-space:pre;">1.6e+08</div>
<div style="left:1072px;width:400px;text-align:right;top:580.8px;font-size:13.3px;line-height:13.3px;font-family:'Liberation Mono', monospace;white-space:pre;">3.4e+01</div>
<div style="left:1479px;top:576px;width:20px;height:20px;border-radius:50%;background:radial-gradient(circle at 50% 45%, #74cc18 0%, #6cc414 72%, #4a9808 100%)"></div>
<div style="left:1210px;width:400px;text-align:right;top:580.8px;font-size:13.3px;line-height:13.3px;font-family:'Liberation Mono', monospace;white-space:pre;">6.5e-03</div>
<div style="left:1617px;top:576px;width:20px;height:20px;border-radius:50%;background:radial-gradient(circle at 50% 45%, #74cc18 0%, #6cc414 72%, #4a9808 100%)"></div>
<div style="left:1279px;width:400px;text-align:right;top:580.8px;font-size:13.3px;line-height:13.3px;font-family:'Liberation Mono', monospace;white-space:pre;">14.7</div>
<div style="left:1361px;width:400px;text-align:right;top:580.8px;font-size:13.3px;line-height:13.3px;font-family:'Liberation Mono', monospace;white-space:pre;">5.3e-03</div>
<div style="left:1441px;width:400px;text-align:right;top:580.8px;font-size:13.3px;line-height:13.3px;font-family:'Liberation Mono', monospace;white-space:pre;">-2.28</div>
<div style="left:-369px;width:400px;text-align:right;top:601.8px;font-size:15.3px;line-height:15.3px;font-family:'Liberation Sans', sans-serif;white-space:pre;">27</div>
<div style="left:-153px;width:400px;text-align:right;top:603.8px;font-size:13.3px;line-height:13.3px;font-family:'Liberation Mono', monospace;white-space:pre;">2008-05-03 14:48:20.000</div>
<div style="left:-59px;width:400px;text-align:right;top:603.8px;font-size:13.3px;line-height:13.3px;font-family:'Liberation Mono', monospace;white-space:pre;">2,413.0</div>
<div style="left:35px;width:400px;text-align:right;top:603.8px;font-size:13.3px;line-height:13.3px;font-family:'Liberation Mono', monospace;white-space:pre;">5,053.4</div>
<div style="left:129px;width:400px;text-align:right;top:603.8px;font-size:13.3px;line-height:13.3px;font-family:'Liberation Mono', monospace;white-space:pre;">691.6</div>
<div style="left:536px;top:599px;width:20px;height:20px;border-radius:50%;background:radial-gradient(circle at 50% 45%, #527ef2 0%, #4a78f0 72%, #3458c4 100%)"></div>
<div style="left:229px;width:400px;text-align:right;top:603.8px;font-size:13.3px;line-height:13.3px;font-family:'Liberation Mono', monospace;white-space:pre;">-1.26</div>
<div style="left:943px;top:601.8px;font-size:15.3px;line-height:15.3px;font-family:'Liberation Sans', sans-serif;white-space:pre;">Included</div>
<div style="left:1063px;top:601.8px;font-size:15.3px;line-height:15.3px;font-family:'Liberation Sans', sans-serif;white-space:pre;">Included</div>
<div style="left:1148px;top:601.8px;font-size:15.3px;line-height:15.3px;font-family:'Liberation Sans', sans-serif;white-space:pre;">Included</div>
<div style="left:925px;width:400px;text-align:right;top:603.8px;font-size:13.3px;line-height:13.3px;font-family:'Liberation Mono', monospace;white-space:pre;">3.2e+07</div>
<div style="left:1072px;width:400px;text-align:right;top:603.8px;font-size:13.3px;line-height:13.3px;font-family:'Liberation Mono', monospace;white-space:pre;">3.8e+01</div>
<div style="left:1479px;top:599px;width:20px;height:20px;border-radius:50%;background:radial-gradient(circle at 50% 45%, #d0b808 0%, #c8b000 72%, #a08800 100%)"></div>
<div style="left:1210px;width:400px;text-align:right;top:603.8px;font-size:13.3px;line-height:13.3px;font-family:'Liberation Mono', monospace;white-space:pre;">3.6e-02</div>
<div style="left:1617px;top:599px;width:20px;height:20px;border-radius:50%;background:radial-gradient(circle at 50% 45%, #74cc18 0%, #6cc414 72%, #4a9808 100%)"></div>
<div style="left:1279px;width:400px;text-align:right;top:603.8px;font-size:13.3px;line-height:13.3px;font-family:'Liberation Mono', monospace;white-space:pre;">10.5</div>
<div style="left:1361px;width:400px;text-align:right;top:603.8px;font-size:13.3px;line-height:13.3px;font-family:'Liberation Mono', monospace;white-space:pre;">1.1e-03</div>
<div style="left:1441px;width:400px;text-align:right;top:603.8px;font-size:13.3px;line-height:13.3px;font-family:'Liberation Mono', monospace;white-space:pre;">-2.97</div>
<div style="left:-369px;width:400px;text-align:right;top:624.8px;font-size:15.3px;line-height:15.3px;font-family:'Liberation Sans', sans-serif;white-space:pre;">28</div>
<div style="left:-153px;width:400px;text-align:right;top:626.8px;font-size:13.3px;line-height:13.3px;font-family:'Liberation Mono', monospace;white-space:pre;">2008-05-17 03:21:04.000</div>
<div style="left:-59px;width:400px;text-align:right;top:626.8px;font-size:13.3px;line-height:13.3px;font-family:'Liberation Mono', monospace;white-space:pre;">2,937.9</div>
<div style="left:35px;width:400px;text-align:right;top:626.8px;font-size:13.3px;line-height:13.3px;font-family:'Liberation Mono', monospace;white-space:pre;">4,151.1</div>
<div style="left:129px;width:400px;text-align:right;top:626.8px;font-size:13.3px;line-height:13.3px;font-family:'Liberation Mono', monospace;white-space:pre;">946.0</div>
<div style="left:536px;top:622px;width:20px;height:20px;border-radius:50%;background:radial-gradient(circle at 50% 45%, #b0f6fa 0%, #a4f0f6 72%, #78c4cc 100%)"></div>
<div style="left:229px;width:400px;text-align:right;top:626.8px;font-size:13.3px;line-height:13.3px;font-family:'Liberation Mono', monospace;white-space:pre;">-0.67</div>
<div style="left:943px;top:624.8px;font-size:15.3px;line-height:15.3px;font-family:'Liberation Sans', sans-serif;white-space:pre;">Included</div>
<div style="left:1063px;top:624.8px;font-size:15.3px;line-height:15.3px;font-family:'Liberation Sans', sans-serif;white-space:pre;">Included</div>
<div style="left:1148px;top:624.8px;font-size:15.3px;line-height:15.3px;font-family:'Liberation Sans', sans-serif;white-space:pre;">Included</div>
<div style="left:925px;width:400px;text-align:right;top:626.8px;font-size:13.3px;line-height:13.3px;font-family:'Liberation Mono', monospace;white-space:pre;">8.8e+08</div>
<div style="left:1072px;width:400px;text-align:right;top:626.8px;font-size:13.3px;line-height:13.3px;font-family:'Liberation Mono', monospace;white-space:pre;">4.8e+01</div>
<div style="left:1479px;top:622px;width:20px;height:20px;border-radius:50%;background:radial-gradient(circle at 50% 45%, #b0f6fa 0%, #a4f0f6 72%, #78c4cc 100%)"></div>
<div style="left:1210px;width:400px;text-align:right;top:626.8px;font-size:13.3px;line-height:13.3px;font-family:'Liberation Mono', monospace;white-space:pre;">1.6e-03</div>
<div style="left:1617px;top:622px;width:20px;height:20px;border-radius:50%;background:radial-gradient(circle at 50% 45%, #74cc18 0%, #6cc414 72%, #4a9808 100%)"></div>
<div style="left:1279px;width:400px;text-align:right;top:626.8px;font-size:13.3px;line-height:13.3px;font-family:'Liberation Mono', monospace;white-space:pre;">17.1</div>
<div style="left:1361px;width:400px;text-align:right;top:626.8px;font-size:13.3px;line-height:13.3px;font-family:'Liberation Mono', monospace;white-space:pre;">2.9e-02</div>
<div style="left:1441px;width:400px;text-align:right;top:626.8px;font-size:13.3px;line-height:13.3px;font-family:'Liberation Mono', monospace;white-space:pre;">-1.53</div>
<div style="left:-369px;width:400px;text-align:right;top:647.8px;font-size:15.3px;line-height:15.3px;font-family:'Liberation Sans', sans-serif;white-space:pre;">29</div>
<div style="left:-153px;width:400px;text-align:right;top:649.8px;font-size:13.3px;line-height:13.3px;font-family:'Liberation Mono', monospace;white-space:pre;">2008-05-22 06:22:21.000</div>
<div style="left:-59px;width:400px;text-align:right;top:649.8px;font-size:13.3px;line-height:13.3px;font-family:'Liberation Mono', monospace;white-space:pre;">2,110.9</div>
<div style="left:35px;width:400px;text-align:right;top:649.8px;font-size:13.3px;line-height:13.3px;font-family:'Liberation Mono', monospace;white-space:pre;">5,776.2</div>
<div style="left:129px;width:400px;text-align:right;top:649.8px;font-size:13.3px;line-height:13.3px;font-family:'Liberation Mono', monospace;white-space:pre;">866.0</div>
<div style="left:536px;top:645px;width:20px;height:20px;border-radius:50%;background:radial-gradient(circle at 50% 45%, #b0f6fa 0%, #a4f0f6 72%, #78c4cc 100%)"></div>
<div style="left:229px;width:400px;text-align:right;top:649.8px;font-size:13.3px;line-height:13.3px;font-family:'Liberation Mono', monospace;white-space:pre;">-0.21</div>
<div style="left:943px;top:647.8px;font-size:15.3px;line-height:15.3px;font-family:'Liberation Sans', sans-serif;white-space:pre;">Included</div>
<div style="left:1063px;top:647.8px;font-size:15.3px;line-height:15.3px;font-family:'Liberation Sans', sans-serif;white-space:pre;">Included</div>
<div style="left:1148px;top:647.8px;font-size:15.3px;line-height:15.3px;font-family:'Liberation Sans', sans-serif;white-space:pre;">Included</div>
<div style="left:925px;width:400px;text-align:right;top:649.8px;font-size:13.3px;line-height:13.3px;font-family:'Liberation Mono', monospace;white-space:pre;">2.1e+09</div>
<div style="left:1072px;width:400px;text-align:right;top:649.8px;font-size:13.3px;line-height:13.3px;font-family:'Liberation Mono', monospace;white-space:pre;">6.7e+02</div>
<div style="left:1479px;top:645px;width:20px;height:20px;border-radius:50%;background:radial-gradient(circle at 50% 45%, #74cc18 0%, #6cc414 72%, #4a9808 100%)"></div>
<div style="left:1210px;width:400px;text-align:right;top:649.8px;font-size:13.3px;line-height:13.3px;font-family:'Liberation Mono', monospace;white-space:pre;">9.6e-03</div>
<div style="left:1617px;top:645px;width:20px;height:20px;border-radius:50%;background:radial-gradient(circle at 50% 45%, #eeea10 0%, #e0dc00 72%, #b0aa00 100%)"></div>
<div style="left:1279px;width:400px;text-align:right;top:649.8px;font-size:13.3px;line-height:13.3px;font-family:'Liberation Mono', monospace;white-space:pre;">30.1</div>
<div style="left:1361px;width:400px;text-align:right;top:649.8px;font-size:13.3px;line-height:13.3px;font-family:'Liberation Mono', monospace;white-space:pre;">6.9e-02</div>
<div style="left:1441px;width:400px;text-align:right;top:649.8px;font-size:13.3px;line-height:13.3px;font-family:'Liberation Mono', monospace;white-space:pre;">-1.16</div>
<div style="left:-369px;width:400px;text-align:right;top:670.8px;font-size:15.3px;line-height:15.3px;font-family:'Liberation Sans', sans-serif;white-space:pre;">30</div>
<div style="left:-153px;width:400px;text-align:right;top:672.8px;font-size:13.3px;line-height:13.3px;font-family:'Liberation Mono', monospace;white-space:pre;">2008-05-25 10:31:35.000</div>
<div style="left:-59px;width:400px;text-align:right;top:672.8px;font-size:13.3px;line-height:13.3px;font-family:'Liberation Mono', monospace;white-space:pre;">2,712.8</div>
<div style="left:35px;width:400px;text-align:right;top:672.8px;font-size:13.3px;line-height:13.3px;font-family:'Liberation Mono', monospace;white-space:pre;">4,080.8</div>
<div style="left:129px;width:400px;text-align:right;top:672.8px;font-size:13.3px;line-height:13.3px;font-family:'Liberation Mono', monospace;white-space:pre;">1,460.5</div>
<div style="left:536px;top:668px;width:20px;height:20px;border-radius:50%;background:radial-gradient(circle at 50% 45%, #527ef2 0%, #4a78f0 72%, #3458c4 100%)"></div>
<div style="left:229px;width:400px;text-align:right;top:672.8px;font-size:13.3px;line-height:13.3px;font-family:'Liberation Mono', monospace;white-space:pre;">-1.09</div>
<div style="left:943px;top:670.8px;font-size:15.3px;line-height:15.3px;font-family:'Liberation Sans', sans-serif;white-space:pre;">Included</div>
<div style="left:1063px;top:670.8px;font-size:15.3px;line-height:15.3px;font-family:'Liberation Sans', sans-serif;white-space:pre;">Included</div>
<div style="left:1148px;top:670.8px;font-size:15.3px;line-height:15.3px;font-family:'Liberation Sans', sans-serif;white-space:pre;">Included</div>
<div style="left:925px;width:400px;text-align:right;top:672.8px;font-size:13.3px;line-height:13.3px;font-family:'Liberation Mono', monospace;white-space:pre;">1.4e+08</div>
<div style="left:1072px;width:400px;text-align:right;top:672.8px;font-size:13.3px;line-height:13.3px;font-family:'Liberation Mono', monospace;white-space:pre;">1.8e+01</div>
<div style="left:1479px;top:668px;width:20px;height:20px;border-radius:50%;background:radial-gradient(circle at 50% 45%, #74cc18 0%, #6cc414 72%, #4a9808 100%)"></div>
<div style="left:1210px;width:400px;text-align:right;top:672.8px;font-size:13.3px;line-height:13.3px;font-family:'Liberation Mono', monospace;white-space:pre;">3.9e-03</div>
<div style="left:1617px;top:668px;width:20px;height:20px;border-radius:50%;background:radial-gradient(circle at 50% 45%, #eeea10 0%, #e0dc00 72%, #b0aa00 100%)"></div>
<div style="left:1279px;width:400px;text-align:right;top:672.8px;font-size:13.3px;line-height:13.3px;font-family:'Liberation Mono', monospace;white-space:pre;">23.7</div>
<div style="left:1361px;width:400px;text-align:right;top:672.8px;font-size:13.3px;line-height:13.3px;font-family:'Liberation Mono', monospace;white-space:pre;">4.7e-03</div>
<div style="left:1441px;width:400px;text-align:right;top:672.8px;font-size:13.3px;line-height:13.3px;font-family:'Liberation Mono', monospace;white-space:pre;">-2.33</div>
<div style="left:-369px;width:400px;text-align:right;top:693.8px;font-size:15.3px;line-height:15.3px;font-family:'Liberation Sans', sans-serif;white-space:pre;">31</div>
<div style="left:-153px;width:400px;text-align:right;top:695.8px;font-size:13.3px;line-height:13.3px;font-family:'Liberation Mono', monospace;white-space:pre;">2008-09-03 14:54:00.000</div>
<div style="left:-59px;width:400px;text-align:right;top:695.8px;font-size:13.3px;line-height:13.3px;font-family:'Liberation Mono', monospace;white-space:pre;">2,719.1</div>
<div style="left:35px;width:400px;text-align:right;top:695.8px;font-size:13.3px;line-height:13.3px;font-family:'Liberation Mono', monospace;white-space:pre;">4,717.4</div>
<div style="left:129px;width:400px;text-align:right;top:695.8px;font-size:13.3px;line-height:13.3px;font-family:'Liberation Mono', monospace;white-space:pre;">1,118.9</div>
<div style="left:536px;top:691px;width:20px;height:20px;border-radius:50%;background:radial-gradient(circle at 50% 45%, #527ef2 0%, #4a78f0 72%, #3458c4 100%)"></div>
<div style="left:229px;width:400px;text-align:right;top:695.8px;font-size:13.3px;line-height:13.3px;font-family:'Liberation Mono', monospace;white-space:pre;">-1.8 </div>
<div style="left:823px;top:693.8px;font-size:15.3px;line-height:15.3px;font-family:'Liberation Sans', sans-serif;white-space:pre;">Included</div>
<div style="left:1063px;top:693.8px;font-size:15.3px;line-height:15.3px;font-family:'Liberation Sans', sans-serif;white-space:pre;">Included</div>
<div style="left:1148px;top:693.8px;font-size:15.3px;line-height:15.3px;font-family:'Liberation Sans', sans-serif;white-space:pre;">Included</div>
<div style="left:925px;width:400px;text-align:right;top:695.8px;font-size:13.3px;line-height:13.3px;font-family:'Liberation Mono', monospace;white-space:pre;">1.6e+07</div>
<div style="left:1072px;width:400px;text-align:right;top:695.8px;font-size:13.3px;line-height:13.3px;font-family:'Liberation Mono', monospace;white-space:pre;">1.0e+00</div>
<div style="left:1479px;top:691px;width:20px;height:20px;border-radius:50%;background:radial-gradient(circle at 50% 45%, #b0f6fa 0%, #a4f0f6 72%, #78c4cc 100%)"></div>
<div style="left:1210px;width:400px;text-align:right;top:695.8px;font-size:13.3px;line-height:13.3px;font-family:'Liberation Mono', monospace;white-space:pre;">2.0e-03</div>
<svg style="left:1617px;top:691px" width="20" height="20"><path d="M2.5 2.5 L17.5 17.5 M17.5 2.5 L2.5 17.5" stroke="#2a2a2a" stroke-width="2.8" stroke-linecap="round"/></svg>
<div style="left:1279px;width:400px;text-align:right;top:695.8px;font-size:13.3px;line-height:13.3px;font-family:'Liberation Mono', monospace;white-space:pre;">0  </div>
<div style="left:1361px;width:400px;text-align:right;top:695.8px;font-size:13.3px;line-height:13.3px;font-family:'Liberation Mono', monospace;white-space:pre;">5.3e-04</div>
<div style="left:1441px;width:400px;text-align:right;top:695.8px;font-size:13.3px;line-height:13.3px;font-family:'Liberation Mono', monospace;white-space:pre;">-3.28</div>
<div style="left:-369px;width:400px;text-align:right;top:716.8px;font-size:15.3px;line-height:15.3px;font-family:'Liberation Sans', sans-serif;white-space:pre;">32</div>
<div style="left:-153px;width:400px;text-align:right;top:718.8px;font-size:13.3px;line-height:13.3px;font-family:'Liberation Mono', monospace;white-space:pre;">2008-12-16 13:31:47.000</div>
<div style="left:-59px;width:400px;text-align:right;top:718.8px;font-size:13.3px;line-height:13.3px;font-family:'Liberation Mono', monospace;white-space:pre;">3,412.0</div>
<div style="left:35px;width:400px;text-align:right;top:718.8px;font-size:13.3px;line-height:13.3px;font-family:'Liberation Mono', monospace;white-space:pre;">4,669.4</div>
<div style="left:129px;width:400px;text-align:right;top:718.8px;font-size:13.3px;line-height:13.3px;font-family:'Liberation Mono', monospace;white-space:pre;">474.4</div>
<div style="left:536px;top:714px;width:20px;height:20px;border-radius:50%;background:radial-gradient(circle at 50% 45%, #b0f6fa 0%, #a4f0f6 72%, #78c4cc 100%)"></div>
<div style="left:229px;width:400px;text-align:right;top:718.8px;font-size:13.3px;line-height:13.3px;font-family:'Liberation Mono', monospace;white-space:pre;">-0.39</div>
<div style="left:943px;top:716.8px;font-size:15.3px;line-height:15.3px;font-family:'Liberation Sans', sans-serif;white-space:pre;">Included</div>
<div style="left:1063px;top:716.8px;font-size:15.3px;line-height:15.3px;font-family:'Liberation Sans', sans-serif;white-space:pre;">Included</div>
<div style="left:1148px;top:716.8px;font-size:15.3px;line-height:15.3px;font-family:'Liberation Sans', sans-serif;white-space:pre;">Included</div>
<div style="left:925px;width:400px;text-align:right;top:718.8px;font-size:13.3px;line-height:13.3px;font-family:'Liberation Mono', monospace;white-space:pre;">1.7e+09</div>
<div style="left:1072px;width:400px;text-align:right;top:718.8px;font-size:13.3px;line-height:13.3px;font-family:'Liberation Mono', monospace;white-space:pre;">2.0e+02</div>
<div style="left:1479px;top:714px;width:20px;height:20px;border-radius:50%;background:radial-gradient(circle at 50% 45%, #74cc18 0%, #6cc414 72%, #4a9808 100%)"></div>
<div style="left:1210px;width:400px;text-align:right;top:718.8px;font-size:13.3px;line-height:13.3px;font-family:'Liberation Mono', monospace;white-space:pre;">3.6e-03</div>
<div style="left:1617px;top:714px;width:20px;height:20px;border-radius:50%;background:radial-gradient(circle at 50% 45%, #eeea10 0%, #e0dc00 72%, #b0aa00 100%)"></div>
<div style="left:1279px;width:400px;text-align:right;top:718.8px;font-size:13.3px;line-height:13.3px;font-family:'Liberation Mono', monospace;white-space:pre;">26.4</div>
<div style="left:1361px;width:400px;text-align:right;top:718.8px;font-size:13.3px;line-height:13.3px;font-family:'Liberation Mono', monospace;white-space:pre;">5.5e-02</div>
<div style="left:1441px;width:400px;text-align:right;top:718.8px;font-size:13.3px;line-height:13.3px;font-family:'Liberation Mono', monospace;white-space:pre;">-1.26</div>
<div style="left:-369px;width:400px;text-align:right;top:739.8px;font-size:15.3px;line-height:15.3px;font-family:'Liberation Sans', sans-serif;white-space:pre;">33</div>
<div style="left:-153px;width:400px;text-align:right;top:741.8px;font-size:13.3px;line-height:13.3px;font-family:'Liberation Mono', monospace;white-space:pre;">2008-12-20 02:56:15.000</div>
<div style="left:-59px;width:400px;text-align:right;top:741.8px;font-size:13.3px;line-height:13.3px;font-family:'Liberation Mono', monospace;white-space:pre;">2,892.9</div>
<div style="left:35px;width:400px;text-align:right;top:741.8px;font-size:13.3px;line-height:13.3px;font-family:'Liberation Mono', monospace;white-space:pre;">4,744.2</div>
<div style="left:129px;width:400px;text-align:right;top:741.8px;font-size:13.3px;line-height:13.3px;font-family:'Liberation Mono', monospace;white-space:pre;">1,056.2</div>
<div style="left:536px;top:737px;width:20px;height:20px;border-radius:50%;background:#000"></div>
<div style="left:714px;top:739.8px;font-size:15.3px;line-height:15.3px;font-family:'Liberation Sans', sans-serif;white-space:pre;">Included</div>
<div style="left:823px;top:739.8px;font-size:15.3px;line-height:15.3px;font-family:'Liberation Sans', sans-serif;white-space:pre;">Included</div>
<div style="left:1063px;top:739.8px;font-size:15.3px;line-height:15.3px;font-family:'Liberation Sans', sans-serif;white-space:pre;">Included</div>
<div style="left:1148px;top:739.8px;font-size:15.3px;line-height:15.3px;font-family:'Liberation Sans', sans-serif;white-space:pre;">Included</div>
<div style="left:1479px;top:737px;width:20px;height:20px;border-radius:50%;background:radial-gradient(circle at 50% 45%, #b4b4b8 0%, #a8a8ac 72%, #85858a 100%)"></div>
<div style="left:1210px;width:400px;text-align:right;top:741.8px;font-size:13.3px;line-height:13.3px;font-family:'Liberation Mono', monospace;white-space:pre;">0.0e+00</div>
<div style="left:1617px;top:737px;width:20px;height:20px;border-radius:50%;background:radial-gradient(circle at 50% 45%, #94aef6 0%, #8aa6f2 72%, #6c86d4 100%)"></div>
<div style="left:1279px;width:400px;text-align:right;top:741.8px;font-size:13.3px;line-height:13.3px;font-family:'Liberation Mono', monospace;white-space:pre;">1.8</div>
<div style="left:-369px;width:400px;text-align:right;top:762.8px;font-size:15.3px;line-height:15.3px;font-family:'Liberation Sans', sans-serif;white-space:pre;">34</div>
<div style="left:-153px;width:400px;text-align:right;top:764.8px;font-size:13.3px;line-height:13.3px;font-family:'Liberation Mono', monospace;white-space:pre;">2009-01-10 13:26:19.000</div>
<div style="left:-59px;width:400px;text-align:right;top:764.8px;font-size:13.3px;line-height:13.3px;font-family:'Liberation Mono', monospace;white-space:pre;">1,125.9</div>
<div style="left:35px;width:400px;text-align:right;top:764.8px;font-size:13.3px;line-height:13.3px;font-family:'Liberation Mono', monospace;white-space:pre;">4,974.4</div>
<div style="left:129px;width:400px;text-align:right;top:764.8px;font-size:13.3px;line-height:13.3px;font-family:'Liberation Mono', monospace;white-space:pre;">-466.5</div>
<div style="left:536px;top:760px;width:20px;height:20px;border-radius:50%;background:radial-gradient(circle at 50% 45%, #b0f6fa 0%, #a4f0f6 72%, #78c4cc 100%)"></div>
<div style="left:229px;width:400px;text-align:right;top:764.8px;font-size:13.3px;line-height:13.3px;font-family:'Liberation Mono', monospace;white-space:pre;">-0.07</div>
<div style="left:943px;top:762.8px;font-size:15.3px;line-height:15.3px;font-family:'Liberation Sans', sans-serif;white-space:pre;">Included</div>
<div style="left:1063px;top:762.8px;font-size:15.3px;line-height:15.3px;font-family:'Liberation Sans', sans-serif;white-space:pre;">Included</div>
<div style="left:1148px;top:762.8px;font-size:15.3px;line-height:15.3px;font-family:'Liberation Sans', sans-serif;white-space:pre;">Included</div>
<div style="left:925px;width:400px;text-align:right;top:764.8px;font-size:13.3px;line-height:13.3px;font-family:'Liberation Mono', monospace;white-space:pre;">3.3e+09</div>
<div style="left:1072px;width:400px;text-align:right;top:764.8px;font-size:13.3px;line-height:13.3px;font-family:'Liberation Mono', monospace;white-space:pre;">1.1e+03</div>
<div style="left:1479px;top:760px;width:20px;height:20px;border-radius:50%;background:radial-gradient(circle at 50% 45%, #74cc18 0%, #6cc414 72%, #4a9808 100%)"></div>
<div style="left:1210px;width:400px;text-align:right;top:764.8px;font-size:13.3px;line-height:13.3px;font-family:'Liberation Mono', monospace;white-space:pre;">9.5e-03</div>
<div style="left:1617px;top:760px;width:20px;height:20px;border-radius:50%;background:radial-gradient(circle at 50% 45%, #b0f6fa 0%, #a4f0f6 72%, #78c4cc 100%)"></div>
<div style="left:1279px;width:400px;text-align:right;top:764.8px;font-size:13.3px;line-height:13.3px;font-family:'Liberation Mono', monospace;white-space:pre;">8  </div>
<div style="left:1361px;width:400px;text-align:right;top:764.8px;font-size:13.3px;line-height:13.3px;font-family:'Liberation Mono', monospace;white-space:pre;">1.1e-01</div>
<div style="left:1441px;width:400px;text-align:right;top:764.8px;font-size:13.3px;line-height:13.3px;font-family:'Liberation Mono', monospace;white-space:pre;">-0.95</div>
<div style="left:-369px;width:400px;text-align:right;top:785.8px;font-size:15.3px;line-height:15.3px;font-family:'Liberation Sans', sans-serif;white-space:pre;">35</div>
<div style="left:-153px;width:400px;text-align:right;top:787.8px;font-size:13.3px;line-height:13.3px;font-family:'Liberation Mono', monospace;white-space:pre;">2009-01-11 04:11:07.000</div>
<div style="left:-59px;width:400px;text-align:right;top:787.8px;font-size:13.3px;line-height:13.3px;font-family:'Liberation Mono', monospace;white-space:pre;">3,292.2</div>
<div style="left:35px;width:400px;text-align:right;top:787.8px;font-size:13.3px;line-height:13.3px;font-family:'Liberation Mono', monospace;white-space:pre;">4,965.7</div>
<div style="left:129px;width:400px;text-align:right;top:787.8px;font-size:13.3px;line-height:13.3px;font-family:'Liberation Mono', monospace;white-space:pre;">749.6</div>
<div style="left:536px;top:783px;width:20px;height:20px;border-radius:50%;background:radial-gradient(circle at 50% 45%, #b0f6fa 0%, #a4f0f6 72%, #78c4cc 100%)"></div>
<div style="left:229px;width:400px;text-align:right;top:787.8px;font-size:13.3px;line-height:13.3px;font-family:'Liberation Mono', monospace;white-space:pre;">-0.02</div>
<div style="left:943px;top:785.8px;font-size:15.3px;line-height:15.3px;font-family:'Liberation Sans', sans-serif;white-space:pre;">Included</div>
<div style="left:1063px;top:785.8px;font-size:15.3px;line-height:15.3px;font-family:'Liberation Sans', sans-serif;white-space:pre;">Included</div>
<div style="left:1148px;top:785.8px;font-size:15.3px;line-height:15.3px;font-family:'Liberation Sans', sans-serif;white-space:pre;">Included</div>
<div style="left:925px;width:400px;text-align:right;top:787.8px;font-size:13.3px;line-height:13.3px;font-family:'Liberation Mono', monospace;white-space:pre;">5.5e+09</div>
<div style="left:1072px;width:400px;text-align:right;top:787.8px;font-size:13.3px;line-height:13.3px;font-family:'Liberation Mono', monospace;white-space:pre;">8.3e+02</div>
<div style="left:1479px;top:783px;width:20px;height:20px;border-radius:50%;background:radial-gradient(circle at 50% 45%, #74cc18 0%, #6cc414 72%, #4a9808 100%)"></div>
<div style="left:1210px;width:400px;text-align:right;top:787.8px;font-size:13.3px;line-height:13.3px;font-family:'Liberation Mono', monospace;white-space:pre;">4.5e-03</div>
<div style="left:1617px;top:783px;width:20px;height:20px;border-radius:50%;background:radial-gradient(circle at 50% 45%, #b0f6fa 0%, #a4f0f6 72%, #78c4cc 100%)"></div>
<div style="left:1279px;width:400px;text-align:right;top:787.8px;font-size:13.3px;line-height:13.3px;font-family:'Liberation Mono', monospace;white-space:pre;">9.6</div>
<div style="left:1361px;width:400px;text-align:right;top:787.8px;font-size:13.3px;line-height:13.3px;font-family:'Liberation Mono', monospace;white-space:pre;">1.8e-01</div>
<div style="left:1441px;width:400px;text-align:right;top:787.8px;font-size:13.3px;line-height:13.3px;font-family:'Liberation Mono', monospace;white-space:pre;">-0.74</div>
<div style="left:-369px;width:400px;text-align:right;top:808.8px;font-size:15.3px;line-height:15.3px;font-family:'Liberation Sans', sans-serif;white-space:pre;">36</div>
<div style="left:-153px;width:400px;text-align:right;top:810.8px;font-size:13.3px;line-height:13.3px;font-family:'Liberation Mono', monospace;white-space:pre;">2009-01-27 01:45:48.000</div>
<div style="left:-59px;width:400px;text-align:right;top:810.8px;font-size:13.3px;line-height:13.3px;font-family:'Liberation Mono', monospace;white-space:pre;">2,198.7</div>
<div style="left:35px;width:400px;text-align:right;top:810.8px;font-size:13.3px;line-height:13.3px;font-family:'Liberation Mono', monospace;white-space:pre;">4,310.4</div>
<div style="left:129px;width:400px;text-align:right;top:810.8px;font-size:13.3px;line-height:13.3px;font-family:'Liberation Mono', monospace;white-space:pre;">950.4</div>
<div style="left:536px;top:806px;width:20px;height:20px;border-radius:50%;background:radial-gradient(circle at 50% 45%, #b0f6fa 0%, #a4f0f6 72%, #78c4cc 100%)"></div>
<div style="left:229px;width:400px;text-align:right;top:810.8px;font-size:13.3px;line-height:13.3px;font-family:'Liberation Mono', monospace;white-space:pre;">-0.74</div>
<div style="left:943px;top:808.8px;font-size:15.3px;line-height:15.3px;font-family:'Liberation Sans', sans-serif;white-space:pre;">Included</div>
<div style="left:1063px;top:808.8px;font-size:15.3px;line-height:15.3px;font-family:'Liberation Sans', sans-serif;white-space:pre;">Included</div>
<div style="left:1148px;top:808.8px;font-size:15.3px;line-height:15.3px;font-family:'Liberation Sans', sans-serif;white-space:pre;">Included</div>
<div style="left:925px;width:400px;text-align:right;top:810.8px;font-size:13.3px;line-height:13.3px;font-family:'Liberation Mono', monospace;white-space:pre;">3.2e+08</div>
<div style="left:1072px;width:400px;text-align:right;top:810.8px;font-size:13.3px;line-height:13.3px;font-family:'Liberation Mono', monospace;white-space:pre;">1.1e+02</div>
<div style="left:1479px;top:806px;width:20px;height:20px;border-radius:50%;background:radial-gradient(circle at 50% 45%, #eeea10 0%, #e0dc00 72%, #b0aa00 100%)"></div>
<div style="left:1210px;width:400px;text-align:right;top:810.8px;font-size:13.3px;line-height:13.3px;font-family:'Liberation Mono', monospace;white-space:pre;">1.1e-02</div>
<div style="left:1617px;top:806px;width:20px;height:20px;border-radius:50%;background:radial-gradient(circle at 50% 45%, #74cc18 0%, #6cc414 72%, #4a9808 100%)"></div>
<div style="left:1279px;width:400px;text-align:right;top:810.8px;font-size:13.3px;line-height:13.3px;font-family:'Liberation Mono', monospace;white-space:pre;">16.7</div>
<div style="left:1361px;width:400px;text-align:right;top:810.8px;font-size:13.3px;line-height:13.3px;font-family:'Liberation Mono', monospace;white-space:pre;">1.1e-02</div>
<div style="left:1441px;width:400px;text-align:right;top:810.8px;font-size:13.3px;line-height:13.3px;font-family:'Liberation Mono', monospace;white-space:pre;">-1.98</div>
<div style="left:-369px;width:400px;text-align:right;top:831.8px;font-size:15.3px;line-height:15.3px;font-family:'Liberation Sans', sans-serif;white-space:pre;">37</div>
<div style="left:-153px;width:400px;text-align:right;top:833.8px;font-size:13.3px;line-height:13.3px;font-family:'Liberation Mono', monospace;white-space:pre;">2009-01-29 01:25:18.000</div>
<div style="left:-59px;width:400px;text-align:right;top:833.8px;font-size:13.3px;line-height:13.3px;font-family:'Liberation Mono', monospace;white-space:pre;">1,788.0</div>
<div style="left:35px;width:400px;text-align:right;top:833.8px;font-size:13.3px;line-height:13.3px;font-family:'Liberation Mono', monospace;white-space:pre;">4,461.4</div>
<div style="left:129px;width:400px;text-align:right;top:833.8px;font-size:13.3px;line-height:13.3px;font-family:'Liberation Mono', monospace;white-space:pre;">147.8</div>
<div style="left:536px;top:829px;width:20px;height:20px;border-radius:50%;background:radial-gradient(circle at 50% 45%, #b0f6fa 0%, #a4f0f6 72%, #78c4cc 100%)"></div>
<div style="left:229px;width:400px;text-align:right;top:833.8px;font-size:13.3px;line-height:13.3px;font-family:'Liberation Mono', monospace;white-space:pre;">-0.27</div>
<div style="left:943px;top:831.8px;font-size:15.3px;line-height:15.3px;font-family:'Liberation Sans', sans-serif;white-space:pre;">Included</div>
<div style="left:1063px;top:831.8px;font-size:15.3px;line-height:15.3px;font-family:'Liberation Sans', sans-serif;white-space:pre;">Included</div>
<div style="left:1148px;top:831.8px;font-size:15.3px;line-height:15.3px;font-family:'Liberation Sans', sans-serif;white-space:pre;">Included</div>
<div style="left:925px;width:400px;text-align:right;top:833.8px;font-size:13.3px;line-height:13.3px;font-family:'Liberation Mono', monospace;white-space:pre;">3.0e+09</div>
<div style="left:1072px;width:400px;text-align:right;top:833.8px;font-size:13.3px;line-height:13.3px;font-family:'Liberation Mono', monospace;white-space:pre;">2.4e+02</div>
<div style="left:1479px;top:829px;width:20px;height:20px;border-radius:50%;background:radial-gradient(circle at 50% 45%, #b0f6fa 0%, #a4f0f6 72%, #78c4cc 100%)"></div>
<div style="left:1210px;width:400px;text-align:right;top:833.8px;font-size:13.3px;line-height:13.3px;font-family:'Liberation Mono', monospace;white-space:pre;">2.4e-03</div>
<div style="left:1617px;top:829px;width:20px;height:20px;border-radius:50%;background:radial-gradient(circle at 50% 45%, #74cc18 0%, #6cc414 72%, #4a9808 100%)"></div>
<div style="left:1279px;width:400px;text-align:right;top:833.8px;font-size:13.3px;line-height:13.3px;font-family:'Liberation Mono', monospace;white-space:pre;">17.7</div>
<div style="left:1361px;width:400px;text-align:right;top:833.8px;font-size:13.3px;line-height:13.3px;font-family:'Liberation Mono', monospace;white-space:pre;">9.9e-02</div>
<div style="left:1441px;width:400px;text-align:right;top:833.8px;font-size:13.3px;line-height:13.3px;font-family:'Liberation Mono', monospace;white-space:pre;">-1.00</div>
<div style="left:-369px;width:400px;text-align:right;top:854.8px;font-size:15.3px;line-height:15.3px;font-family:'Liberation Sans', sans-serif;white-space:pre;">38</div>
<div style="left:-153px;width:400px;text-align:right;top:856.8px;font-size:13.3px;line-height:13.3px;font-family:'Liberation Mono', monospace;white-space:pre;">2009-01-29 17:56:06.000</div>
<div style="left:-59px;width:400px;text-align:right;top:856.8px;font-size:13.3px;line-height:13.3px;font-family:'Liberation Mono', monospace;white-space:pre;">2,924.4</div>
<div style="left:35px;width:400px;text-align:right;top:856.8px;font-size:13.3px;line-height:13.3px;font-family:'Liberation Mono', monospace;white-space:pre;">4,585.3</div>
<div style="left:129px;width:400px;text-align:right;top:856.8px;font-size:13.3px;line-height:13.3px;font-family:'Liberation Mono', monospace;white-space:pre;">947.2</div>
<div style="left:536px;top:852px;width:20px;height:20px;border-radius:50%;background:radial-gradient(circle at 50% 45%, #b0f6fa 0%, #a4f0f6 72%, #78c4cc 100%)"></div>
<div style="left:229px;width:400px;text-align:right;top:856.8px;font-size:13.3px;line-height:13.3px;font-family:'Liberation Mono', monospace;white-space:pre;">-0.02</div>
<div style="left:1063px;top:854.8px;font-size:15.3px;line-height:15.3px;font-family:'Liberation Sans', sans-serif;white-space:pre;">Included</div>
<div style="left:1148px;top:854.8px;font-size:15.3px;line-height:15.3px;font-family:'Liberation Sans', sans-serif;white-space:pre;">Included</div>
<div style="left:925px;width:400px;text-align:right;top:856.8px;font-size:13.3px;line-height:13.3px;font-family:'Liberation Mono', monospace;white-space:pre;">4.3e+08</div>
<div style="left:1072px;width:400px;text-align:right;top:856.8px;font-size:13.3px;line-height:13.3px;font-family:'Liberation Mono', monospace;white-space:pre;">3.1e+04</div>
<div style="left:1479px;top:852px;width:20px;height:20px;border-radius:50%;background:#000"></div>
<div style="left:1210px;width:400px;text-align:right;top:856.8px;font-size:13.3px;line-height:13.3px;font-family:'Liberation Mono', monospace;white-space:pre;">2.2e+00</div>
<div style="left:1617px;top:852px;width:20px;height:20px;border-radius:50%;background:radial-gradient(circle at 50% 45%, #b0f6fa 0%, #a4f0f6 72%, #78c4cc 100%)"></div>
<div style="left:1279px;width:400px;text-align:right;top:856.8px;font-size:13.3px;line-height:13.3px;font-family:'Liberation Mono', monospace;white-space:pre;">6.3</div>
<div style="left:1361px;width:400px;text-align:right;top:856.8px;font-size:13.3px;line-height:13.3px;font-family:'Liberation Mono', monospace;white-space:pre;">1.4e-02</div>
<div style="left:1441px;width:400px;text-align:right;top:856.8px;font-size:13.3px;line-height:13.3px;font-family:'Liberation Mono', monospace;white-space:pre;">-1.85</div>
<div style="left:-369px;width:400px;text-align:right;top:877.8px;font-size:15.3px;line-height:15.3px;font-family:'Liberation Sans', sans-serif;white-space:pre;">39</div>
<div style="left:-153px;width:400px;text-align:right;top:879.8px;font-size:13.3px;line-height:13.3px;font-family:'Liberation Mono', monospace;white-space:pre;">2009-02-23 23:45:08.000</div>
<div style="left:-59px;width:400px;text-align:right;top:879.8px;font-size:13.3px;line-height:13.3px;font-family:'Liberation Mono', monospace;white-space:pre;">2,905.0</div>
<div style="left:35px;width:400px;text-align:right;top:879.8px;font-size:13.3px;line-height:13.3px;font-family:'Liberation Mono', monospace;white-space:pre;">4,811.6</div>
<div style="left:129px;width:400px;text-align:right;top:879.8px;font-size:13.3px;line-height:13.3px;font-family:'Liberation Mono', monospace;white-space:pre;">1,250.7</div>
<div style="left:536px;top:875px;width:20px;height:20px;border-radius:50%;background:radial-gradient(circle at 50% 45%, #10ea10 0%, #00e000 72%, #00a800 100%)"></div>
<div style="left:229px;width:400px;text-align:right;top:879.8px;font-size:13.3px;line-height:13.3px;font-family:'Liberation Mono', monospace;white-space:pre;">0.07</div>
<div style="left:1063px;top:877.8px;font-size:15.3px;line-height:15.3px;font-family:'Liberation Sans', sans-serif;white-space:pre;">Included</div>
<div style="left:1148px;top:877.8px;font-size:15.3px;line-height:15.3px;font-family:'Liberation Sans', sans-serif;white-space:pre;">Included</div>
<div style="left:925px;width:400px;text-align:right;top:879.8px;font-size:13.3px;line-height:13.3px;font-family:'Liberation Mono', monospace;white-space:pre;">6.4e+08</div>
<div style="left:1072px;width:400px;text-align:right;top:879.8px;font-size:13.3px;line-height:13.3px;font-family:'Liberation Mono', monospace;white-space:pre;">3.9e+04</div>
<div style="left:1479px;top:875px;width:20px;height:20px;border-radius:50%;background:#000"></div>
<div style="left:1210px;width:400px;text-align:right;top:879.8px;font-size:13.3px;line-height:13.3px;font-family:'Liberation Mono', monospace;white-space:pre;">1.8e+00</div>
<div style="left:1617px;top:875px;width:20px;height:20px;border-radius:50%;background:radial-gradient(circle at 50% 45%, #94aef6 0%, #8aa6f2 72%, #6c86d4 100%)"></div>
<div style="left:1279px;width:400px;text-align:right;top:879.8px;font-size:13.3px;line-height:13.3px;font-family:'Liberation Mono', monospace;white-space:pre;">4.4</div>
<div style="left:1361px;width:400px;text-align:right;top:879.8px;font-size:13.3px;line-height:13.3px;font-family:'Liberation Mono', monospace;white-space:pre;">2.1e-02</div>
<div style="left:1441px;width:400px;text-align:right;top:879.8px;font-size:13.3px;line-height:13.3px;font-family:'Liberation Mono', monospace;white-space:pre;">-1.67</div>
<div style="left:-369px;width:400px;text-align:right;top:900.8px;font-size:15.3px;line-height:15.3px;font-family:'Liberation Sans', sans-serif;white-space:pre;">40</div>
<div style="left:-153px;width:400px;text-align:right;top:902.8px;font-size:13.3px;line-height:13.3px;font-family:'Liberation Mono', monospace;white-space:pre;">2009-03-12 13:40:10.000</div>
<div style="left:-59px;width:400px;text-align:right;top:902.8px;font-size:13.3px;line-height:13.3px;font-family:'Liberation Mono', monospace;white-space:pre;">2,737.1</div>
<div style="left:35px;width:400px;text-align:right;top:902.8px;font-size:13.3px;line-height:13.3px;font-family:'Liberation Mono', monospace;white-space:pre;">4,784.1</div>
<div style="left:129px;width:400px;text-align:right;top:902.8px;font-size:13.3px;line-height:13.3px;font-family:'Liberation Mono', monospace;white-space:pre;">1,057.3</div>
<div style="left:536px;top:898px;width:20px;height:20px;border-radius:50%;background:#000"></div>
<div style="left:714px;top:900.8px;font-size:15.3px;line-height:15.3px;font-family:'Liberation Sans', sans-serif;white-space:pre;">Included</div>
<div style="left:823px;top:900.8px;font-size:15.3px;line-height:15.3px;font-family:'Liberation Sans', sans-serif;white-space:pre;">Included</div>
<div style="left:1063px;top:900.8px;font-size:15.3px;line-height:15.3px;font-family:'Liberation Sans', sans-serif;white-space:pre;">Included</div>
<div style="left:1148px;top:900.8px;font-size:15.3px;line-height:15.3px;font-family:'Liberation Sans', sans-serif;white-space:pre;">Included</div>
<div style="left:1479px;top:898px;width:20px;height:20px;border-radius:50%;background:radial-gradient(circle at 50% 45%, #b4b4b8 0%, #a8a8ac 72%, #85858a 100%)"></div>
<div style="left:1210px;width:400px;text-align:right;top:902.8px;font-size:13.3px;line-height:13.3px;font-family:'Liberation Mono', monospace;white-space:pre;">0.0e+00</div>
<div style="left:1617px;top:898px;width:20px;height:20px;border-radius:50%;background:radial-gradient(circle at 50% 45%, #74cc18 0%, #6cc414 72%, #4a9808 100%)"></div>
<div style="left:1279px;width:400px;text-align:right;top:902.8px;font-size:13.3px;line-height:13.3px;font-family:'Liberation Mono', monospace;white-space:pre;">18.6</div>
<div style="left:-369px;width:400px;text-align:right;top:923.8px;font-size:15.3px;line-height:15.3px;font-family:'Liberation Sans', sans-serif;white-space:pre;">41</div>
<div style="left:-153px;width:400px;text-align:right;top:925.8px;font-size:13.3px;line-height:13.3px;font-family:'Liberation Mono', monospace;white-space:pre;">2009-03-20 07:42:00.000</div>
<div style="left:-59px;width:400px;text-align:right;top:925.8px;font-size:13.3px;line-height:13.3px;font-family:'Liberation Mono', monospace;white-space:pre;">2,218.4</div>
<div style="left:35px;width:400px;text-align:right;top:925.8px;font-size:13.3px;line-height:13.3px;font-family:'Liberation Mono', monospace;white-space:pre;">4,361.3</div>
<div style="left:129px;width:400px;text-align:right;top:925.8px;font-size:13.3px;line-height:13.3px;font-family:'Liberation Mono', monospace;white-space:pre;">441.9</div>
<div style="left:536px;top:921px;width:20px;height:20px;border-radius:50%;background:radial-gradient(circle at 50% 45%, #527ef2 0%, #4a78f0 72%, #3458c4 100%)"></div>
<div style="left:229px;width:400px;text-align:right;top:925.8px;font-size:13.3px;line-height:13.3px;font-family:'Liberation Mono', monospace;white-space:pre;">-1.14</div>
<div style="left:943px;top:923.8px;font-size:15.3px;line-height:15.3px;font-family:'Liberation Sans', sans-serif;white-space:pre;">Included</div>
<div style="left:1063px;top:923.8px;font-size:15.3px;line-height:15.3px;font-family:'Liberation Sans', sans-serif;white-space:pre;">Included</div>
<div style="left:1148px;top:923.8px;font-size:15.3px;line-height:15.3px;font-family:'Liberation Sans', sans-serif;white-space:pre;">Included</div>
<div style="left:925px;width:400px;text-align:right;top:925.8px;font-size:13.3px;line-height:13.3px;font-family:'Liberation Mono', monospace;white-space:pre;">1.2e+08</div>
<div style="left:1072px;width:400px;text-align:right;top:925.8px;font-size:13.3px;line-height:13.3px;font-family:'Liberation Mono', monospace;white-space:pre;">1.6e+01</div>
<div style="left:1479px;top:921px;width:20px;height:20px;border-radius:50%;background:radial-gradient(circle at 50% 45%, #74cc18 0%, #6cc414 72%, #4a9808 100%)"></div>
<div style="left:1210px;width:400px;text-align:right;top:925.8px;font-size:13.3px;line-height:13.3px;font-family:'Liberation Mono', monospace;white-space:pre;">3.9e-03</div>
<div style="left:1617px;top:921px;width:20px;height:20px;border-radius:50%;background:radial-gradient(circle at 50% 45%, #eeea10 0%, #e0dc00 72%, #b0aa00 100%)"></div>
<div style="left:1279px;width:400px;text-align:right;top:925.8px;font-size:13.3px;line-height:13.3px;font-family:'Liberation Mono', monospace;white-space:pre;">23.6</div>
<div style="left:1361px;width:400px;text-align:right;top:925.8px;font-size:13.3px;line-height:13.3px;font-family:'Liberation Mono', monospace;white-space:pre;">4.0e-03</div>
<div style="left:1441px;width:400px;text-align:right;top:925.8px;font-size:13.3px;line-height:13.3px;font-family:'Liberation Mono', monospace;white-space:pre;">-2.40</div>
<div style="left:-369px;width:400px;text-align:right;top:946.8px;font-size:15.3px;line-height:15.3px;font-family:'Liberation Sans', sans-serif;white-space:pre;">42</div>
<div style="left:-153px;width:400px;text-align:right;top:948.8px;font-size:13.3px;line-height:13.3px;font-family:'Liberation Mono', monospace;white-space:pre;">2009-03-20 08:10:48.000</div>
<div style="left:-59px;width:400px;text-align:right;top:948.8px;font-size:13.3px;line-height:13.3px;font-family:'Liberation Mono', monospace;white-space:pre;">2,417.3</div>
<div style="left:35px;width:400px;text-align:right;top:948.8px;font-size:13.3px;line-height:13.3px;font-family:'Liberation Mono', monospace;white-space:pre;">4,109.3</div>
<div style="left:129px;width:400px;text-align:right;top:948.8px;font-size:13.3px;line-height:13.3px;font-family:'Liberation Mono', monospace;white-space:pre;">662.1</div>
<div style="left:536px;top:944px;width:20px;height:20px;border-radius:50%;background:radial-gradient(circle at 50% 45%, #527ef2 0%, #4a78f0 72%, #3458c4 100%)"></div>
<div style="left:229px;width:400px;text-align:right;top:948.8px;font-size:13.3px;line-height:13.3px;font-family:'Liberation Mono', monospace;white-space:pre;">-1.25</div>
<div style="left:943px;top:946.8px;font-size:15.3px;line-height:15.3px;font-family:'Liberation Sans', sans-serif;white-space:pre;">Included</div>
<div style="left:1063px;top:946.8px;font-size:15.3px;line-height:15.3px;font-family:'Liberation Sans', sans-serif;white-space:pre;">Included</div>
<div style="left:1148px;top:946.8px;font-size:15.3px;line-height:15.3px;font-family:'Liberation Sans', sans-serif;white-space:pre;">Included</div>
<div style="left:925px;width:400px;text-align:right;top:948.8px;font-size:13.3px;line-height:13.3px;font-family:'Liberation Mono', monospace;white-space:pre;">1.3e+08</div>
<div style="left:1072px;width:400px;text-align:right;top:948.8px;font-size:13.3px;line-height:13.3px;font-family:'Liberation Mono', monospace;white-space:pre;">5.4e+00</div>
<div style="left:1479px;top:944px;width:20px;height:20px;border-radius:50%;background:radial-gradient(circle at 50% 45%, #b0f6fa 0%, #a4f0f6 72%, #78c4cc 100%)"></div>
<div style="left:1210px;width:400px;text-align:right;top:948.8px;font-size:13.3px;line-height:13.3px;font-family:'Liberation Mono', monospace;white-space:pre;">1.3e-03</div>
<div style="left:1617px;top:944px;width:20px;height:20px;border-radius:50%;background:radial-gradient(circle at 50% 45%, #eeea10 0%, #e0dc00 72%, #b0aa00 100%)"></div>
<div style="left:1279px;width:400px;text-align:right;top:948.8px;font-size:13.3px;line-height:13.3px;font-family:'Liberation Mono', monospace;white-space:pre;">22.5</div>
<div style="left:1361px;width:400px;text-align:right;top:948.8px;font-size:13.3px;line-height:13.3px;font-family:'Liberation Mono', monospace;white-space:pre;">4.2e-03</div>
<div style="left:1441px;width:400px;text-align:right;top:948.8px;font-size:13.3px;line-height:13.3px;font-family:'Liberation Mono', monospace;white-space:pre;">-2.37</div>
<div style="left:-369px;width:400px;text-align:right;top:969.8px;font-size:15.3px;line-height:15.3px;font-family:'Liberation Sans', sans-serif;white-space:pre;">43</div>
<div style="left:-153px;width:400px;text-align:right;top:971.8px;font-size:13.3px;line-height:13.3px;font-family:'Liberation Mono', monospace;white-space:pre;">2009-03-21 03:25:20.000</div>
<div style="left:-59px;width:400px;text-align:right;top:971.8px;font-size:13.3px;line-height:13.3px;font-family:'Liberation Mono', monospace;white-space:pre;">2,405.4</div>
<div style="left:35px;width:400px;text-align:right;top:971.8px;font-size:13.3px;line-height:13.3px;font-family:'Liberation Mono', monospace;white-space:pre;">4,499.6</div>
<div style="left:129px;width:400px;text-align:right;top:971.8px;font-size:13.3px;line-height:13.3px;font-family:'Liberation Mono', monospace;white-space:pre;">692.7</div>
<div style="left:536px;top:967px;width:20px;height:20px;border-radius:50%;background:radial-gradient(circle at 50% 45%, #527ef2 0%, #4a78f0 72%, #3458c4 100%)"></div>
<div style="left:229px;width:400px;text-align:right;top:971.8px;font-size:13.3px;line-height:13.3px;font-family:'Liberation Mono', monospace;white-space:pre;">-1.29</div>
<div style="left:943px;top:969.8px;font-size:15.3px;line-height:15.3px;font-family:'Liberation Sans', sans-serif;white-space:pre;">Included</div>
<div style="left:1063px;top:969.8px;font-size:15.3px;line-height:15.3px;font-family:'Liberation Sans', sans-serif;white-space:pre;">Included</div>
<div style="left:1148px;top:969.8px;font-size:15.3px;line-height:15.3px;font-family:'Liberation Sans', sans-serif;white-space:pre;">Included</div>
<div style="left:925px;width:400px;text-align:right;top:971.8px;font-size:13.3px;line-height:13.3px;font-family:'Liberation Mono', monospace;white-space:pre;">3.2e+07</div>
<div style="left:1072px;width:400px;text-align:right;top:971.8px;font-size:13.3px;line-height:13.3px;font-family:'Liberation Mono', monospace;white-space:pre;">2.9e+01</div>
<div style="left:1479px;top:967px;width:20px;height:20px;border-radius:50%;background:radial-gradient(circle at 50% 45%, #eeea10 0%, #e0dc00 72%, #b0aa00 100%)"></div>
<div style="left:1210px;width:400px;text-align:right;top:971.8px;font-size:13.3px;line-height:13.3px;font-family:'Liberation Mono', monospace;white-space:pre;">2.7e-02</div>
<div style="left:1617px;top:967px;width:20px;height:20px;border-radius:50%;background:radial-gradient(circle at 50% 45%, #74cc18 0%, #6cc414 72%, #4a9808 100%)"></div>
<div style="left:1279px;width:400px;text-align:right;top:971.8px;font-size:13.3px;line-height:13.3px;font-family:'Liberation Mono', monospace;white-space:pre;">17.8</div>
<div style="left:1361px;width:400px;text-align:right;top:971.8px;font-size:13.3px;line-height:13.3px;font-family:'Liberation Mono', monospace;white-space:pre;">1.1e-03</div>
<div style="left:1441px;width:400px;text-align:right;top:971.8px;font-size:13.3px;line-height:13.3px;font-family:'Liberation Mono', monospace;white-space:pre;">-2.97</div>
<div style="left:-369px;width:400px;text-align:right;top:992.8px;font-size:15.3px;line-height:15.3px;font-family:'Liberation Sans', sans-serif;white-space:pre;">44</div>
<div style="left:-153px;width:400px;text-align:right;top:994.8px;font-size:13.3px;line-height:13.3px;font-family:'Liberation Mono', monospace;white-space:pre;">2009-03-21 10:18:13.000</div>
<div style="left:-59px;width:400px;text-align:right;top:994.8px;font-size:13.3px;line-height:13.3px;font-family:'Liberation Mono', monospace;white-space:pre;">2,175.4</div>
<div style="left:35px;width:400px;text-align:right;top:994.8px;font-size:13.3px;line-height:13.3px;font-family:'Liberation Mono', monospace;white-space:pre;">6,269.3</div>
<div style="left:129px;width:400px;text-align:right;top:994.8px;font-size:13.3px;line-height:13.3px;font-family:'Liberation Mono', monospace;white-space:pre;">1,247.1</div>
<div style="left:536px;top:990px;width:20px;height:20px;border-radius:50%;background:radial-gradient(circle at 50% 45%, #b0f6fa 0%, #a4f0f6 72%, #78c4cc 100%)"></div>
<div style="left:229px;width:400px;text-align:right;top:994.8px;font-size:13.3px;line-height:13.3px;font-family:'Liberation Mono', monospace;white-space:pre;">-0.51</div>
<div style="left:943px;top:992.8px;font-size:15.3px;line-height:15.3px;font-family:'Liberation Sans', sans-serif;white-space:pre;">Included</div>
<div style="left:1063px;top:992.8px;font-size:15.3px;line-height:15.3px;font-family:'Liberation Sans', sans-serif;white-space:pre;">Included</div>
<div style="left:1148px;top:992.8px;font-size:15.3px;line-height:15.3px;font-family:'Liberation Sans', sans-serif;white-space:pre;">Included</div>
<div style="left:925px;width:400px;text-align:right;top:994.8px;font-size:13.3px;line-height:13.3px;font-family:'Liberation Mono', monospace;white-space:pre;">8.9e+08</div>
<div style="left:1072px;width:400px;text-align:right;top:994.8px;font-size:13.3px;line-height:13.3px;font-family:'Liberation Mono', monospace;white-space:pre;">1.8e+02</div>
<div style="left:1479px;top:990px;width:20px;height:20px;border-radius:50%;background:radial-gradient(circle at 50% 45%, #74cc18 0%, #6cc414 72%, #4a9808 100%)"></div>
<div style="left:1210px;width:400px;text-align:right;top:994.8px;font-size:13.3px;line-height:13.3px;font-family:'Liberation Mono', monospace;white-space:pre;">6.0e-03</div>
<div style="left:1617px;top:990px;width:20px;height:20px;border-radius:50%;background:radial-gradient(circle at 50% 45%, #eeea10 0%, #e0dc00 72%, #b0aa00 100%)"></div>
<div style="left:1279px;width:400px;text-align:right;top:994.8px;font-size:13.3px;line-height:13.3px;font-family:'Liberation Mono', monospace;white-space:pre;">20.6</div>
<div style="left:1361px;width:400px;text-align:right;top:994.8px;font-size:13.3px;line-height:13.3px;font-family:'Liberation Mono', monospace;white-space:pre;">3.0e-02</div>
<div style="left:1441px;width:400px;text-align:right;top:994.8px;font-size:13.3px;line-height:13.3px;font-family:'Liberation Mono', monospace;white-space:pre;">-1.53</div>
<div style="left:-369px;width:400px;text-align:right;top:1015.8px;font-size:15.3px;line-height:15.3px;font-family:'Liberation Sans', sans-serif;white-space:pre;">45</div>
<div style="left:-153px;width:400px;text-align:right;top:1017.8px;font-size:13.3px;line-height:13.3px;font-family:'Liberation Mono', monospace;white-space:pre;">2009-04-05 23:47:07.000</div>
<div style="left:-59px;width:400px;text-align:right;top:1017.8px;font-size:13.3px;line-height:13.3px;font-family:'Liberation Mono', monospace;white-space:pre;">2,860.8</div>
<div style="left:35px;width:400px;text-align:right;top:1017.8px;font-size:13.3px;line-height:13.3px;font-family:'Liberation Mono', monospace;white-space:pre;">4,779.5</div>
<div style="left:129px;width:400px;text-align:right;top:1017.8px;font-size:13.3px;line-height:13.3px;font-family:'Liberation Mono', monospace;white-space:pre;">1,146.1</div>
<div style="left:536px;top:1013px;width:20px;height:20px;border-radius:50%;background:radial-gradient(circle at 50% 45%, #b0f6fa 0%, #a4f0f6 72%, #78c4cc 100%)"></div>
<div style="left:229px;width:400px;text-align:right;top:1017.8px;font-size:13.3px;line-height:13.3px;font-family:'Liberation Mono', monospace;white-space:pre;">0.06</div>
<div style="left:1063px;top:1015.8px;font-size:15.3px;line-height:15.3px;font-family:'Liberation Sans', sans-serif;white-space:pre;">Included</div>
<div style="left:1148px;top:1015.8px;font-size:15.3px;line-height:15.3px;font-family:'Liberation Sans', sans-serif;white-space:pre;">Included</div>
<div style="left:925px;width:400px;text-align:right;top:1017.8px;font-size:13.3px;line-height:13.3px;font-family:'Liberation Mono', monospace;white-space:pre;">1.9e+08</div>
<div style="left:1072px;width:400px;text-align:right;top:1017.8px;font-size:13.3px;line-height:13.3px;font-family:'Liberation Mono', monospace;white-space:pre;">7.4e+04</div>
<div style="left:1479px;top:1013px;width:20px;height:20px;border-radius:50%;background:#000"></div>
<div style="left:1210px;width:400px;text-align:right;top:1017.8px;font-size:13.3px;line-height:13.3px;font-family:'Liberation Mono', monospace;white-space:pre;">1.2e+01</div>
<div style="left:1617px;top:1013px;width:20px;height:20px;border-radius:50%;background:radial-gradient(circle at 50% 45%, #94aef6 0%, #8aa6f2 72%, #6c86d4 100%)"></div>
<div style="left:1279px;width:400px;text-align:right;top:1017.8px;font-size:13.3px;line-height:13.3px;font-family:'Liberation Mono', monospace;white-space:pre;">3.2</div>
<div style="left:1361px;width:400px;text-align:right;top:1017.8px;font-size:13.3px;line-height:13.3px;font-family:'Liberation Mono', monospace;white-space:pre;">6.4e-03</div>
<div style="left:1441px;width:400px;text-align:right;top:1017.8px;font-size:13.3px;line-height:13.3px;font-family:'Liberation Mono', monospace;white-space:pre;">-2.19</div>
</div>
<div style="left:2223px;top:176px;width:20px;height:1114px;background:#f0f0f0"></div>
<svg style="left:2223px;top:178px" width="20" height="16"><path d="M5 11 L10 6 L15 11" stroke="#606060" stroke-width="1.6" fill="none"/></svg>
<div style="left:2223px;top:197px;width:19px;height:221px;background:#cdcdcd"></div>
<div style="left:2227px;top:301px;width:11px;height:12px;background:#f0f0f0"></div>
<svg style="left:2223px;top:1270px" width="20" height="16"><path d="M5 5 L10 10 L15 5" stroke="#606060" stroke-width="1.6" fill="none"/></svg>
<div style="left:319px;top:1290px;width:1904px;height:20px;background:#f0f0f0"></div>
<div style="left:340px;top:1290px;width:1254px;height:19px;background:#cdcdcd"></div>
<svg style="left:321px;top:1290px" width="16" height="20"><path d="M11 5 L6 10 L11 15" stroke="#606060" stroke-width="1.6" fill="none"/></svg>
<svg style="left:2203px;top:1290px" width="16" height="20"><path d="M5 5 L10 10 L5 15" stroke="#606060" stroke-width="1.6" fill="none"/></svg>
<div style="left:2223px;top:1290px;width:20px;height:20px;background:#fff"></div>
<div style="left:318px;top:1313px;font-family:'Liberation Sans', sans-serif;font-size:16.9px;line-height:20px;white-space:pre"><b style="font-size:17.5px"><u>Num Events:</u></b> 39996; <b style="font-size:17.5px"><u>Event Time Filters</u></b>: 2005-08-02 22:02 — 2022-11-30 12:54; <b style="font-size:17.4px">Active Filters:</b> ... — Backdate;<b style="font-size:17.4px"><u>Event Range Filter</u></b>: No range filters;</div>
<div style="left:2248px;top:67px;width:5px;height:1290px;background:#f0f0f0"></div>
<div style="left:2253px;top:67px;width:284px;height:1289px;background:#fff;border-right:1px solid #d8d8d8;border-bottom:1px solid #d8d8d8;box-sizing:border-box"></div>
<div style="left:2261px;top:76px;width:268px;height:20px;background:#e2cce2"></div>
<div style="left:1995px;width:800px;text-align:center;top:79.98px;font-size:14.2px;line-height:14.2px;font-family:'Liberation Sans', sans-serif;white-space:pre;font-weight:bold">Table</div>
<div style="left:2261px;top:118px;width:268px;height:132px;border:1px solid #dcdcdc;box-sizing:border-box"></div>
<div style="left:2269px;top:110px;width:104px;height:16px;background:#fff"></div>
<div style="left:2271px;top:112.33px;font-size:12.6px;line-height:12.6px;font-family:'Liberation Sans', sans-serif;white-space:pre;">Table Appearance</div>
<svg style="left:2273px;top:140px" width="16" height="16"><rect x="0.5" y="0.5" width="15" height="15" fill="#fff" stroke="#333"/></svg>
<div style="left:2296px;top:142.33px;font-size:12.6px;line-height:12.6px;font-family:'Liberation Sans', sans-serif;white-space:pre;">Show all rows</div>
<svg style="left:2273px;top:167px" width="16" height="16"><rect x="0.5" y="0.5" width="15" height="15" fill="#fff" stroke="#333"/></svg>
<div style="left:2296px;top:169.33px;font-size:12.6px;line-height:12.6px;font-family:'Liberation Sans', sans-serif;white-space:pre;">Show only selected</div>
<svg style="left:2273px;top:194px" width="16" height="16"><rect x="0.5" y="0.5" width="15" height="15" fill="#fff" stroke="#333"/><path d="M3.5 8 L6.5 11.5 L12.5 4" stroke="#333" stroke-width="1.3" fill="none"/></svg>
<div style="left:2296px;top:196.33px;font-size:12.6px;line-height:12.6px;font-family:'Liberation Sans', sans-serif;white-space:pre;">Highlight selected</div>
<svg style="left:2273px;top:221px" width="16" height="16"><rect x="0.5" y="0.5" width="15" height="15" fill="#fff" stroke="#333"/></svg>
<div style="left:2296px;top:223.33px;font-size:12.6px;line-height:12.6px;font-family:'Liberation Sans', sans-serif;white-space:pre;">Show Legend</div>
<svg style="left:2399px;top:221px" width="16" height="16"><rect x="0.5" y="0.5" width="15" height="15" fill="#fff" stroke="#333"/></svg>
<div style="left:2422px;top:223.33px;font-size:12.6px;line-height:12.6px;font-family:'Liberation Sans', sans-serif;white-space:pre;">Adj size</div>
<div style="left:2261px;top:258px;width:268px;height:1089px;background:#f0f0f0"></div>
<div style="left:2537px;top:67px;width:23px;height:1290px;background:#f0f0f0"></div>
<div style="left:2537px;top:69px;width:21px;height:59px;background:#e2cce2;border:1px solid #b0a0b0;border-left:none;border-radius:0 3px 3px 0;box-sizing:border-box"></div>
<div style="left:2537px;top:128px;width:21px;height:88px;background:#fffccc;border:1px solid #b0b0a0;border-left:none;border-radius:0 3px 3px 0;box-sizing:border-box"></div>
<div style="left:2537px;top:218px;width:21px;height:64px;background:#c8dcf4;border:1px solid #a0b0c0;border-left:none;border-radius:0 3px 3px 0;box-sizing:border-box"></div>
<div style="left:2446px;top:88px;width:200px;height:20px;line-height:20px;text-align:center;font-family:'Liberation Sans', sans-serif;font-size:13.2px;white-space:pre;transform:rotate(90deg)">Table</div>
<div style="left:2446px;top:161px;width:200px;height:20px;line-height:20px;text-align:center;font-family:'Liberation Sans', sans-serif;font-size:13.2px;white-space:pre;transform:rotate(90deg)">Selections</div>
<div style="left:2446px;top:239px;width:200px;height:20px;line-height:20px;text-align:center;font-family:'Liberation Sans', sans-serif;font-size:13.2px;white-space:pre;transform:rotate(90deg)">eXport</div>
<div style="left:2px;top:1360px;width:92px;height:28px;background:#cdd3ee;border:1px solid #8f95b0;border-right:2px solid #6a6a6a;border-bottom:2px solid #6a6a6a;box-sizing:border-box"></div>
<div style="left:-352px;width:800px;text-align:center;top:1367.66px;font-size:13.4px;line-height:13.4px;font-family:'Liberation Sans', sans-serif;white-space:pre;">mXsync</div>
<div style="left:102px;top:1362px;width:104px;height:25px;background:#e1e1e1;border:1px solid #adadad;box-sizing:border-box"></div>
<div style="left:-246px;width:800px;text-align:center;top:1367.64px;font-size:14.6px;line-height:14.6px;font-family:'Liberation Sans', sans-serif;white-space:pre;">Error Console</div>
<div style="left:2287px;top:1369.08px;font-size:12.9px;line-height:12.9px;font-family:'Liberation Sans', sans-serif;white-space:pre;">Active: 0, Waiting:  0, of   0</div>
<div style="left:2461px;top:1360px;width:91px;height:28px;background:#80deb0"></div>
<div style="left:2106px;width:800px;text-align:center;top:1368.66px;font-size:13.4px;line-height:13.4px;font-family:'Liberation Sans', sans-serif;white-space:pre;font-weight:bold">Ready</div>
<div style="left:638px;top:93px;width:117px;height:78px;background:#f0f0f0;border:1px solid #ccc;box-sizing:border-box;box-shadow:3px 3px 3px rgba(0,0,0,0.25)"></div>
<div style="left:676px;top:101.64px;font-size:14.6px;line-height:14.6px;font-family:'Liberation Sans', sans-serif;white-space:pre;">Blasts</div>
<div style="left:641px;top:120px;width:107px;height:23px;background:#91c9f7"></div>
<div style="left:676px;top:125.64px;font-size:14.6px;line-height:14.6px;font-family:'Liberation Sans', sans-serif;white-space:pre;">Events</div>
<svg style="left:734px;top:126px" width="8" height="10"><path d="M1 1 L6 5 L1 9Z" fill="#000"/></svg>
<div style="left:676px;top:149.64px;font-size:14.6px;line-height:14.6px;font-family:'Liberation Sans', sans-serif;white-space:pre;">Sensors</div>
<div style="left:748px;top:120px;width:285px;height:78px;background:#f0f0f0;border:1px solid #ccc;box-sizing:border-box;box-shadow:3px 3px 3px rgba(0,0,0,0.25)"></div>
<div style="left:786px;top:128.64px;font-size:14.6px;line-height:14.6px;font-family:'Liberation Sans', sans-serif;white-space:pre;">Events passing "Base Filter"</div>
<div style="left:786px;top:152.64px;font-size:14.6px;line-height:14.6px;font-family:'Liberation Sans', sans-serif;white-space:pre;">Events NOT passing "Base Filter"</div>
<div style="left:751px;top:171px;width:278px;height:24px;background:#91c9f7"></div>
<div style="left:786px;top:176.64px;font-size:14.6px;line-height:14.6px;font-family:'Liberation Sans', sans-serif;white-space:pre;">Events NOT passing Quality Filter</div>
</body></html>
